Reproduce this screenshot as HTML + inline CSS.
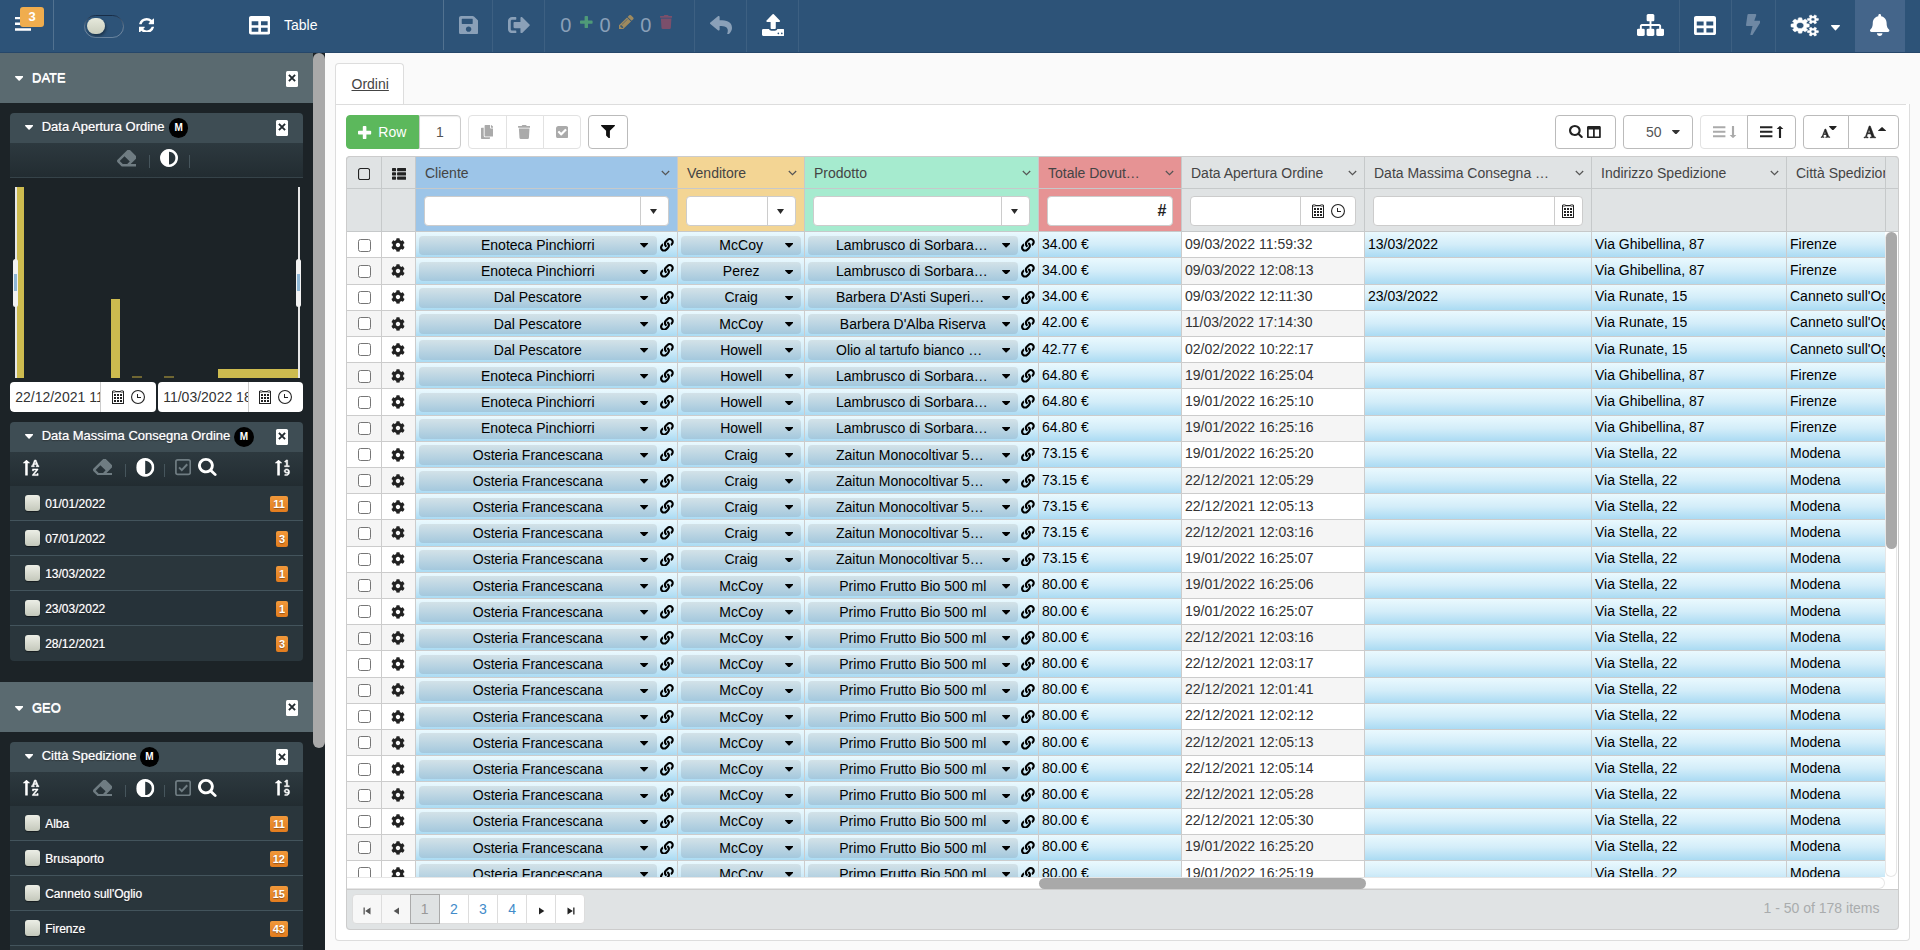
<!DOCTYPE html>
<html lang="it"><head><meta charset="utf-8"><title>Table</title>
<style>
html,body{margin:0;padding:0}
body{width:1920px;height:950px;overflow:hidden;position:relative;background:#fafafa;font-family:"Liberation Sans",sans-serif;font-size:14px;color:#333}
svg{display:block}

#top{position:absolute;left:0;top:0;width:1920px;height:52.5px;background:#2d5378;overflow:hidden;border-bottom:1px solid #26476a;box-sizing:border-box}
.tsep{position:absolute;top:0;width:1px}
.tbadge{position:absolute;left:20px;top:7px;width:24px;height:20px;border-radius:3px;background:#f0ad4e;color:#fff;font-weight:bold;font-size:13px;line-height:20px;text-align:center}
.knob{position:absolute;left:87px;top:17.800px;width:18px;height:16.300px;border-radius:9px;background:linear-gradient(#e6e9dc,#c9cdbd);box-shadow:1px 2px 3px rgba(0,0,0,.4)}
.tlabel{position:absolute;left:284px;top:15px;color:#fff;font-size:14px;line-height:20px}
.tnum{position:absolute;top:11px;font-size:20px;line-height:28px;color:#8aa0b8}
.bellbg{position:absolute;left:1855px;top:0;width:50px;height:52.5px;background:#44658a}

#side{position:absolute;left:0;top:52.5px;width:313px;height:897.5px;background:#1c2327;overflow:hidden}
#sscroll{position:absolute;left:313px;top:52.5px;width:12px;height:897.5px;background:#1c2327}
.sthumb{position:absolute;left:0;top:0;width:12px;height:695.5px;border-radius:6px;background:#a9a9a9}
.shead{position:absolute;left:0;width:313px;height:50px;background:#5a6a70}
.stitle{position:absolute;left:32px;top:15.300px;font-size:13px;line-height:20px;color:#fff;text-shadow:0 1px 0 rgba(255,255,255,.9),0 0 1px rgba(255,255,255,.5)}
.xbtn{position:absolute;background:#fff;border-radius:1.5px}
.panel{position:absolute;left:10px;width:292.7px;border-radius:4px;overflow:hidden;background:#1c2327}
.phead{position:absolute;left:0;width:100%;height:30px;background:#3e4d54}
.ptitle{position:absolute;left:31.7px;top:4px;font-size:13px;line-height:20px;color:#fff;white-space:nowrap;text-shadow:0 0 1px rgba(255,255,255,.7),0 1px 1px rgba(0,0,0,.5)}
.mbadge{position:absolute;top:5.2px;width:19.6px;height:19.6px;border-radius:10px;background:#000;color:#fff;font-size:10px;font-weight:bold;line-height:20px;text-align:center}
.ptool{position:absolute;left:0;width:100%;height:35px;background:linear-gradient(#2d393f,#222c31);border-bottom:1px solid #364349;box-sizing:border-box}
.vsep{position:absolute;top:12.500px;width:1px;height:12.500px;background:#46555c}
.bar{position:absolute;background:#cdbb4f}
.hline{position:absolute;top:73.8px;width:1.6px;height:190.8px;background:#e6e6e6}
.handle{position:absolute;top:145.5px;width:5.2px;height:48px;border-radius:3px;background:#f2f2f2}
.handle:after{content:"";position:absolute;left:1.2px;top:15px;width:2.8px;height:17.500px;background:#8fb7d6}
.dinp{position:absolute;height:30px;background:#fff;border-radius:4px;overflow:hidden}
.dtxt{position:absolute;left:5.2px;top:4.5px;width:85px;overflow:hidden;white-space:nowrap;font-size:14px;line-height:20px;color:#333}
.ddiv{position:absolute;left:90px;top:0;width:1px;height:100%;background:#ccc}
.pitem{position:absolute;left:0;width:100%;height:34.95px;background:#2a363c;border-bottom:1px solid #43545c;box-sizing:border-box}
.pitem.last{border-bottom:none}
.pitem.odd{background:#263239}
.pcb{position:absolute;left:14.6px;top:9.200px;width:15.6px;height:16px;border-radius:3px;background:linear-gradient(#eceee6,#c4c8bb);box-shadow:0 1px 1px rgba(0,0,0,.5)}
.plab{position:absolute;left:35.2px;top:8px;font-size:12px;line-height:20px;color:#fff;text-shadow:0 0 1px rgba(255,255,255,.7),0 1px 1px rgba(0,0,0,.7)}
.pcnt{position:absolute;right:14.7px;top:10.2px;min-width:6px;padding:0 3px;height:16px;border-radius:2px;background:linear-gradient(#f0983a,#e27c1e);color:#fff;font-size:11px;font-weight:bold;line-height:16px;text-align:center;text-shadow:0 1px 1px rgba(0,0,0,.35)}

#main{position:absolute;left:0;top:0;width:1920px;height:950px}
.tab{position:absolute;left:335px;top:63px;width:69px;height:42px;box-sizing:border-box;border:1px solid #ddd;border-bottom:none;border-radius:4px 4px 0 0;background:#fff}
.tab span{position:absolute;left:15.5px;top:9.800px;line-height:20px;color:#444;text-decoration:underline}
.tabline{position:absolute;left:336px;top:104px;width:1570px;height:1px;background:#ddd}
.pane{position:absolute;left:335px;top:104px;width:1575px;height:837px;box-sizing:border-box;background:#fff;border:1px solid #ddd;border-top:none;border-radius:0 0 4px 4px}
.btn{position:absolute;height:33.7px;box-sizing:border-box;border:1px solid #bbb;border-radius:4px;background:#fff}
.btn.green{background:#5cb85c;border-color:#5cb85c}
.btn.inp{border-color:#ccc;box-shadow:inset 0 1px 1px rgba(0,0,0,.075)}
.btn.dis{border-color:#e2e2e2}
.btn span{line-height:20px}
#grid{position:absolute;left:346px;top:156px;width:1553px;height:774px;box-sizing:border-box;border-radius:4px;overflow:hidden;background:#fff}
#gridb{position:absolute;left:346px;top:156px;width:1553px;height:774px;box-sizing:border-box;border-radius:4px;border:1px solid #ccc;pointer-events:none}
.hrow{position:absolute;left:0;width:100%}
.hrow{border-top:1px solid #ccc;box-sizing:border-box}
.hrow+.hrow{border-top:none}
.c{position:absolute;top:0;height:100%;box-sizing:border-box;border-left:1px solid #ccc;border-bottom:1px solid #ccc;overflow:hidden;white-space:nowrap}
.h{border-left-color:#c6c9ca;border-bottom-color:#c6c9ca}
.hg{background:#e0e3e4}.hb{background:#9dc5e8}.ho{background:#f3d594}.hm{background:#a6ebcf}.hr{background:#e69394}
.ht{position:absolute;left:9px;top:5.800px;line-height:20px;color:#444}
.finp{position:absolute;left:8px;top:7px;height:30px;box-sizing:border-box;border:1px solid #ccc;border-radius:4px;background:#fff}
.fdiv{position:absolute;top:0;width:1px;height:100%;background:#ccc}
#gbody{position:absolute;left:0;top:76px;width:1539px;height:645px;overflow:hidden}
.row{position:absolute;left:0;width:100%;height:26.2px;background:#fff}
.row.alt{background:#f5f5f5}
.c.bl{background:linear-gradient(#eaf9fe 0,#d3edf9 50%,#abdbf3 100%)}
.c.t span{position:absolute;left:3px;top:1.600px;line-height:20px;color:#000}
.c.p.t span{color:#333}
.cb{position:absolute;left:11.2px;top:6.400px;width:13px;height:13px;box-sizing:border-box;border:1px solid #767676;border-radius:2.500px;background:#fff}
.sel{position:absolute;top:3.400px;height:19.6px;border-radius:4px;background:linear-gradient(#d3e2e8,#a4c8dd);text-align:center}
.sel span{position:absolute;left:0;right:0;top:-0.500px;line-height:20px;color:#000;text-align:center}
.sel span.tr{left:28px;text-align:left}
.vtrack{position:absolute;left:1539px;top:76px;width:12px;height:645px;background:#fff;border-radius:6px;box-shadow:inset 0 0 0 1px #e6e6e6}
.vthumb{position:absolute;left:0.5px;top:0.2px;width:11.4px;height:317px;border-radius:6px;background:#a9a9a9}
.htrack{position:absolute;left:0;top:721px;width:1539px;height:12px;background:#fff;border-radius:0 6px 6px 0;box-shadow:inset 0 0 0 1px #e6e6e6}
.hthumb{position:absolute;left:693px;top:0.700px;width:327px;height:11.6px;border-radius:6px;background:#a9a9a9}
#pager{position:absolute;left:0;top:733px;width:100%;height:41px;background:#e0e3e4;border-top:1px solid #ccc;box-sizing:border-box}
.pb{position:absolute;top:4px;width:30.1px;height:29.6px;box-sizing:border-box;border:1px solid #ddd;background:#fff;text-align:center}
.pb.f{border-radius:4px 0 0 4px}.pb.l{border-radius:0 4px 4px 0}
.pb.d{background:#f7f7f7}
.pb.cur{background:#dfe2e3;border-color:#aaa;z-index:2}
.pb span{line-height:29.8px;color:#428bca}
.pb.cur span{color:#999}
.pinfo{position:absolute;right:19.5px;top:8px;line-height:20px;color:#a9acad}
</style></head>
<body>
<div id="main">
<div class="tab"><span>Ordini</span></div>
<div class="pane">
</div>
<div class="tabline"></div>
<div class="btn green" style="left:345.9px;top:115.2px;width:73.4px;border-radius:4px 0 0 4px"><svg width="13.20" height="13.20" viewBox="0 0 176.0 176.0" preserveAspectRatio="none" style="position:absolute;left:11.60px;top:9.80px;" ><path fill="#fff" d="M176 76V100Q176 105 172.5 108.5Q169 112 164 112H112V164Q112 169 108.5 172.5Q105 176 100 176H76Q71 176 67.5 172.5Q64 169 64 164V112H12Q7 112 3.5 108.5Q0 105 0 100V76Q0 71 3.5 67.5Q7 64 12 64H64V12Q64 7 67.5 3.5Q71 0 76 0H100Q105 0 108.5 3.5Q112 7 112 12V64H164Q169 64 172.5 67.5Q176 71 176 76Z"/></svg><span style="position:absolute;left:31.4px;top:5.600px;color:#fff">Row</span></div>
<div class="btn inp" style="left:419.2px;top:115.2px;width:41.6px;border-radius:0 4px 4px 0"><span style="position:absolute;left:0;right:0;top:6px;text-align:center;color:#555">1</span></div>
<div class="btn dis" style="left:468px;top:115.2px;width:39px;border-radius:4px 0 0 4px"><svg width="12.60" height="14.00" viewBox="0 0 448 512" preserveAspectRatio="none" style="position:absolute;left:11.80px;top:8.40px;"><path fill="#aaa" d="M320 448v40c0 13.300-10.700 24-24 24H24c-13.300 0-24-10.700-24-24V120c0-13.300 10.700-24 24-24h72v296c0 30.900 25.100 56 56 56h168zm0-344V0H152c-13.300 0-24 10.700-24 24v368c0 13.300 10.700 24 24 24h272c13.300 0 24-10.700 24-24V128H344c-13.200 0-24-10.800-24-24zm121-31L375 7A24 24 0 0 0 358.100 0H352v96h96v-6.100a24 24 0 0 0-7-16.900z"/></svg></div>
<div class="btn dis" style="left:506.2px;top:115.2px;width:38px;border-radius:0"><svg width="12.40" height="14.00" viewBox="0 0 448 512" preserveAspectRatio="none" style="position:absolute;left:10.90px;top:8.40px;"><path fill="#aaa" d="M432 32H312l-9.400-18.700A24 24 0 0 0 281.100 0H166.800a23.700 23.700 0 0 0-21.400 13.300L136 32H16A16 16 0 0 0 0 48v32a16 16 0 0 0 16 16h416a16 16 0 0 0 16-16V48a16 16 0 0 0-16-16zM53.200 467a48 48 0 0 0 47.900 45h245.800a48 48 0 0 0 47.900-45L416 128H32z"/></svg></div>
<div class="btn dis" style="left:543.4px;top:115.2px;width:37.2px;border-radius:0 4px 4px 0"><svg width="12.40" height="12.40" viewBox="0 0 192.0 192.0" preserveAspectRatio="none" style="position:absolute;left:11.60px;top:9.50px;" ><path fill="#aaa" d="M85.6 146.4 162.4 69.6Q164.8 67.2 164.8 64Q164.8 60.8 162.4 58.4L149.6 45.6Q147.2 43.2 144 43.2Q140.8 43.2 138.4 45.6L80 104L53.6 77.6Q51.2 75.2 48 75.2Q44.8 75.2 42.4 77.6L29.6 90.4Q27.2 92.8 27.2 96Q27.2 99.2 29.6 101.6L74.4 146.4Q76.8 148.8 80 148.8Q83.2 148.8 85.6 146.4ZM192 36V156Q192 170.9 181.4 181.4Q170.9 192 156 192H36Q21.1 192 10.6 181.4Q0 170.9 0 156V36Q0 21.1 10.6 10.6Q21.1 0 36 0H156Q170.9 0 181.4 10.6Q192 21.1 192 36Z"/></svg></div>
<div class="btn" style="left:588.3px;top:115.2px;width:39.3px"><svg width="14.00" height="13.40" viewBox="0 0 176.3 176.0" preserveAspectRatio="none" style="position:absolute;left:12.00px;top:8.90px;" ><path fill="#111" d="M175.5 4.9Q177.6 10 173.8 13.6L112.1 75.2V168Q112.1 173.2 107.3 175.4Q105.6 176 104.1 176Q100.8 176 98.5 173.6L66.5 141.6Q64.1 139.2 64.1 136V75.2L2.5 13.6Q-1.4 10 0.8 4.9Q2.9 0 8.1 0H168.1Q173.4 0 175.5 4.9Z"/></svg></div>
<div class="btn" style="left:1555px;top:115.2px;width:60.7px"><svg width="13.80" height="13.00" viewBox="0 0 208.0 208.0" preserveAspectRatio="none" style="position:absolute;left:13.20px;top:9.20px;" ><path fill="#222" d="M127.6 127.6Q144 111.1 144 88Q144 64.9 127.6 48.4Q111.1 32 88 32Q64.9 32 48.4 48.4Q32 64.9 32 88Q32 111.1 48.4 127.6Q64.9 144 88 144Q111.1 144 127.6 127.6ZM208 192Q208 198.5 203.2 203.2Q198.5 208 192 208Q185.2 208 180.8 203.2L137.9 160.5Q115.5 176 88 176Q70.1 176 53.8 169.1Q37.5 162.1 25.7 150.3Q13.9 138.5 6.9 122.2Q0 105.9 0 88Q0 70.1 6.9 53.8Q13.9 37.5 25.7 25.7Q37.5 13.9 53.8 6.9Q70.1 0 88 0Q105.9 0 122.2 6.9Q138.5 13.9 150.3 25.7Q162.1 37.5 169.1 53.8Q176 70.1 176 88Q176 115.5 160.5 137.9L203.4 180.8Q208 185.4 208 192Z"/></svg><svg width="13.80" height="12.40" viewBox="0 0 512 448" preserveAspectRatio="none" style="position:absolute;left:31.00px;top:9.40px;"><path fill="#222" d="M464 0H48C21.500 0 0 21.500 0 48v352c0 26.500 21.500 48 48 48h416c26.500 0 48-21.500 48-48V48c0-26.500-21.500-48-48-48zM224 384H64V128h160v256zm224 0H288V128h160v256z"/></svg></div>
<div class="btn" style="left:1623.2px;top:115.2px;width:69.6px"><span style="position:absolute;left:21.7px;top:6px;color:#555">50</span><svg width="7.80" height="4.40" viewBox="0 0 128.0 72.0" preserveAspectRatio="none" style="position:absolute;left:48.00px;top:13.60px;" ><path fill="#333" d="M125.6 13.6 69.6 69.6Q67.2 72 64 72Q60.8 72 58.4 69.6L2.4 13.6Q0 11.2 0 8Q0 4.8 2.4 2.4Q4.8 0 8 0H120Q123.2 0 125.6 2.4Q128 4.8 128 8Q128 11.2 125.6 13.6Z"/></svg></div>
<div class="btn dis" style="left:1700.2px;top:115.2px;width:48px;border-radius:4px 0 0 4px"><svg width="24" height="13" viewBox="0 0 24 13" style="position:absolute;left:11.5px;top:10.2px;overflow:visible"><path d="M0 1.300H12.400M0 5.800H12.400M0 10.300H12.400" stroke="#aaa" stroke-width="1.900" fill="none"/><g transform="translate(16.800 0) scale(0.0667 0.0556)"><path fill="#aaa" d="M95 166.8 51.3 214.8Q50 216 48.4 216Q46.6 216 45.4 214.8L1 166.8Q-0.6 164.8 0.4 162.4Q1.5 160 4 160H32V4Q32 2.2 33.1 1.1Q34.3 0 36 0H60Q61.8 0 62.9 1.1Q64 2.2 64 4V160H92Q94.6 160 95.6 162.4Q96.6 164.8 95 166.8Z"/></g></svg></div>
<div class="btn" style="left:1747.2px;top:115.2px;width:48.6px;border-radius:0 4px 4px 0"><svg width="24" height="13" viewBox="0 0 24 13" style="position:absolute;left:11.7px;top:10.2px;overflow:visible"><path d="M0 1.300H12.400M0 5.800H12.400M0 10.300H12.400" stroke="#222" stroke-width="1.900" fill="none"/><g transform="translate(16.800 0) scale(0.0667 0.0556)"><path fill="#222" d="M95.6 53.6Q94.5 56 92 56H64V212Q64 213.8 62.9 214.9Q61.8 216 60 216H36Q34.3 216 33.1 214.9Q32 213.8 32 212V56H4Q1.4 56 0.4 53.6Q-0.6 51.2 1 49.2L44.8 1.2Q46 0 47.6 0Q49.4 0 50.6 1.2L95 49.2Q96.6 51.2 95.6 53.6Z"/></g></svg></div>
<div class="btn" style="left:1803.2px;top:115.2px;width:46.2px;border-radius:4px 0 0 4px"><svg width="8.80" height="8.40" viewBox="0 0 208.0 192.0" preserveAspectRatio="none" style="position:absolute;left:17.00px;top:13.00px;;overflow:visible" ><path fill="#222" stroke="#222" stroke-width="14" stroke-linejoin="round" d="M90.6 53.9 69.4 110.1Q73.5 110.1 86.4 110.4Q99.4 110.6 106.5 110.6Q108.9 110.6 113.6 110.4Q102.8 78.8 90.6 53.9ZM0 192 0.2 182.1Q3.1 181.2 7.2 180.6Q11.4 179.9 14.4 179.2Q17.4 178.6 20.6 177.4Q23.8 176.2 26.1 173.8Q28.5 171.4 30 167.5L59.6 90.5L94.6 0H104H110.6Q111.6 1.8 112 2.6L137.6 62.6Q141.8 72.4 150.9 94.8Q160 117.2 165.1 129.1Q167 133.4 172.4 147.2Q177.8 161 181.4 168.2Q183.9 173.9 185.8 175.4Q188.1 177.2 196.8 179.1Q205.4 180.9 207.2 181.6Q208 186.4 208 188.8Q208 189.4 207.9 190.4Q207.9 191.5 207.9 192Q200 192 184.1 191Q168.2 190 160.2 190Q150.8 190 133.4 190.9Q116 191.8 111.1 191.9Q111.1 186.5 111.6 182.1L128 178.6Q128.1 178.6 129.6 178.3Q131 178 131.5 177.9Q132 177.8 133.3 177.3Q134.6 176.9 135.2 176.5Q135.8 176.1 136.6 175.5Q137.4 174.9 137.7 174.1Q138 173.4 138 172.4Q138 170.4 134.1 160.3Q130.2 150.2 125.1 138.1Q120 126 119.9 125.6L63.6 125.4Q60.4 132.6 54.1 149.8Q47.8 167 47.8 170.1Q47.8 172.9 49.5 174.8Q51.2 176.8 54.9 177.9Q58.6 179 61 179.6Q63.4 180.1 68.1 180.6Q72.9 181.1 73.2 181.1Q73.4 183.5 73.4 188.4Q73.4 189.5 73.1 191.8Q65.9 191.8 51.3 190.5Q36.8 189.2 29.5 189.2Q28.5 189.2 26.2 189.8Q23.9 190.2 23.5 190.2Q13.5 192 0 192Z"/></svg><svg width="7.70" height="4.40" viewBox="0 0 128.0 72.0" preserveAspectRatio="none" style="position:absolute;left:25.00px;top:9.40px;" ><path fill="#222" d="M125.6 13.6 69.6 69.6Q67.2 72 64 72Q60.8 72 58.4 69.6L2.4 13.6Q0 11.2 0 8Q0 4.8 2.4 2.4Q4.8 0 8 0H120Q123.2 0 125.6 2.4Q128 4.8 128 8Q128 11.2 125.6 13.6Z"/></svg></div>
<div class="btn" style="left:1848.4px;top:115.2px;width:50.2px;border-radius:0 4px 4px 0"><svg width="11.60" height="11.80" viewBox="0 0 208.0 192.0" preserveAspectRatio="none" style="position:absolute;left:15.10px;top:9.70px;;overflow:visible" ><path fill="#222" stroke="#222" stroke-width="12" stroke-linejoin="round" d="M90.6 53.9 69.4 110.1Q73.5 110.1 86.4 110.4Q99.4 110.6 106.5 110.6Q108.9 110.6 113.6 110.4Q102.8 78.8 90.6 53.9ZM0 192 0.2 182.1Q3.1 181.2 7.2 180.6Q11.4 179.9 14.4 179.2Q17.4 178.6 20.6 177.4Q23.8 176.2 26.1 173.8Q28.5 171.4 30 167.5L59.6 90.5L94.6 0H104H110.6Q111.6 1.8 112 2.6L137.6 62.6Q141.8 72.4 150.9 94.8Q160 117.2 165.1 129.1Q167 133.4 172.4 147.2Q177.8 161 181.4 168.2Q183.9 173.9 185.8 175.4Q188.1 177.2 196.8 179.1Q205.4 180.9 207.2 181.6Q208 186.4 208 188.8Q208 189.4 207.9 190.4Q207.9 191.5 207.9 192Q200 192 184.1 191Q168.2 190 160.2 190Q150.8 190 133.4 190.9Q116 191.8 111.1 191.9Q111.1 186.5 111.6 182.1L128 178.6Q128.1 178.6 129.6 178.3Q131 178 131.5 177.9Q132 177.8 133.3 177.3Q134.6 176.9 135.2 176.5Q135.8 176.1 136.6 175.5Q137.4 174.9 137.7 174.1Q138 173.4 138 172.4Q138 170.4 134.1 160.3Q130.2 150.2 125.1 138.1Q120 126 119.9 125.6L63.6 125.4Q60.4 132.6 54.1 149.8Q47.8 167 47.8 170.1Q47.8 172.9 49.5 174.8Q51.2 176.8 54.9 177.9Q58.6 179 61 179.6Q63.4 180.1 68.1 180.6Q72.9 181.1 73.2 181.1Q73.4 183.5 73.4 188.4Q73.4 189.5 73.1 191.8Q65.9 191.8 51.3 190.5Q36.8 189.2 29.5 189.2Q28.5 189.2 26.2 189.8Q23.9 190.2 23.5 190.2Q13.5 192 0 192Z"/></svg><svg width="8.10" height="4.20" viewBox="0 0 128.0 72.0" preserveAspectRatio="none" style="position:absolute;left:28.50px;top:10.80px;" ><path fill="#222" d="M120 72H8Q4.8 72 2.4 69.6Q0 67.2 0 64Q0 60.8 2.4 58.4L58.4 2.4Q60.8 0 64 0Q67.2 0 69.6 2.4L125.6 58.4Q128 60.8 128 64Q128 67.2 125.6 69.6Q123.2 72 120 72Z"/></svg></div>
<div id="grid">
<div class="hrow" style="top:0;height:33px">
<div class="c h hg" style="left:0.0px;width:35.0px"><svg width="12.20" height="12.20" viewBox="0 0 176.0 176.0" preserveAspectRatio="none" style="position:absolute;left:11.00px;top:10.60px;" ><path fill="#222" d="M140 16H36Q27.8 16 21.9 21.9Q16 27.8 16 36V140Q16 148.2 21.9 154.1Q27.8 160 36 160H140Q148.2 160 154.1 154.1Q160 148.2 160 140V36Q160 27.8 154.1 21.9Q148.2 16 140 16ZM176 36V140Q176 154.9 165.4 165.4Q154.9 176 140 176H36Q21.1 176 10.6 165.4Q0 154.9 0 140V36Q0 21.1 10.6 10.6Q21.1 0 36 0H140Q154.9 0 165.4 10.6Q176 21.1 176 36Z"/></svg></div>
<div class="c h hg" style="left:35.0px;width:34.0px"><svg width="14.20" height="11.80" viewBox="0 0 224.0 176.0" preserveAspectRatio="none" style="position:absolute;left:9.60px;top:10.80px;" ><path fill="#222" d="M64 140V164Q64 169 60.5 172.5Q57 176 52 176H12Q7 176 3.5 172.5Q0 169 0 164V140Q0 135 3.5 131.5Q7 128 12 128H52Q57 128 60.5 131.5Q64 135 64 140ZM64 76V100Q64 105 60.5 108.5Q57 112 52 112H12Q7 112 3.5 108.5Q0 105 0 100V76Q0 71 3.5 67.5Q7 64 12 64H52Q57 64 60.5 67.5Q64 71 64 76ZM224 140V164Q224 169 220.5 172.5Q217 176 212 176H92Q87 176 83.5 172.5Q80 169 80 164V140Q80 135 83.5 131.5Q87 128 92 128H212Q217 128 220.5 131.5Q224 135 224 140ZM64 12V36Q64 41 60.5 44.5Q57 48 52 48H12Q7 48 3.5 44.5Q0 41 0 36V12Q0 7 3.5 3.5Q7 0 12 0H52Q57 0 60.5 3.5Q64 7 64 12ZM224 76V100Q224 105 220.5 108.5Q217 112 212 112H92Q87 112 83.5 108.5Q80 105 80 100V76Q80 71 83.5 67.5Q87 64 92 64H212Q217 64 220.5 67.5Q224 71 224 76ZM224 12V36Q224 41 220.5 44.5Q217 48 212 48H92Q87 48 83.5 44.5Q80 41 80 36V12Q80 7 83.5 3.5Q87 0 92 0H212Q217 0 220.5 3.5Q224 7 224 12Z"/></svg></div>
<div class="c h hb" style="left:69.0px;width:262.0px"><span class="ht">Cliente</span><svg width="9" height="6" viewBox="0 0 9 6" style="position:absolute;left:245.3px;top:13.1px"><path d="M0.800 1L4.500 4.700L8.200 1" fill="none" stroke="#555" stroke-width="1.200"/></svg></div>
<div class="c h ho" style="left:331.0px;width:127.0px"><span class="ht">Venditore</span><svg width="9" height="6" viewBox="0 0 9 6" style="position:absolute;left:110.3px;top:13.1px"><path d="M0.800 1L4.500 4.700L8.200 1" fill="none" stroke="#555" stroke-width="1.200"/></svg></div>
<div class="c h hm" style="left:458.0px;width:234.0px"><span class="ht">Prodotto</span><svg width="9" height="6" viewBox="0 0 9 6" style="position:absolute;left:217.3px;top:13.1px"><path d="M0.800 1L4.500 4.700L8.200 1" fill="none" stroke="#555" stroke-width="1.200"/></svg></div>
<div class="c h hr" style="left:692.0px;width:143.0px"><span class="ht">Totale Dovut…</span><svg width="9" height="6" viewBox="0 0 9 6" style="position:absolute;left:126.3px;top:13.1px"><path d="M0.800 1L4.500 4.700L8.200 1" fill="none" stroke="#555" stroke-width="1.200"/></svg></div>
<div class="c h hg" style="left:835.0px;width:183.0px"><span class="ht">Data Apertura Ordine</span><svg width="9" height="6" viewBox="0 0 9 6" style="position:absolute;left:166.3px;top:13.1px"><path d="M0.800 1L4.500 4.700L8.200 1" fill="none" stroke="#555" stroke-width="1.200"/></svg></div>
<div class="c h hg" style="left:1018.0px;width:227.0px"><span class="ht">Data Massima Consegna …</span><svg width="9" height="6" viewBox="0 0 9 6" style="position:absolute;left:210.3px;top:13.1px"><path d="M0.800 1L4.500 4.700L8.200 1" fill="none" stroke="#555" stroke-width="1.200"/></svg></div>
<div class="c h hg" style="left:1245.0px;width:195.0px"><span class="ht">Indirizzo Spedizione</span><svg width="9" height="6" viewBox="0 0 9 6" style="position:absolute;left:178.3px;top:13.1px"><path d="M0.800 1L4.500 4.700L8.200 1" fill="none" stroke="#555" stroke-width="1.200"/></svg></div>
<div class="c h hg" style="left:1440.0px;width:99.0px"><span class="ht">Città Spedizione</span></div>
<div class="c h hg" style="left:1539.0px;width:14px"></div>
</div>
<div class="hrow" style="top:33px;height:43px">
<div class="c h hg" style="left:0.0px;width:35.0px"></div>
<div class="c h hg" style="left:35.0px;width:34.0px"></div>
<div class="c h hb" style="left:69.0px;width:262.0px"><div class="finp" style="width:245px"><div class="fdiv" style="right:27px"></div><svg width="7.0" height="5.0" viewBox="0 0 10 7" preserveAspectRatio="none" style="position:absolute;right:11px;top:12px"><path d="M0 0H10L5 7Z" fill="#2a2a2a"/></svg></div></div>
<div class="c h ho" style="left:331.0px;width:127.0px"><div class="finp" style="width:110px"><div class="fdiv" style="right:27px"></div><svg width="7.0" height="5.0" viewBox="0 0 10 7" preserveAspectRatio="none" style="position:absolute;right:11px;top:12px"><path d="M0 0H10L5 7Z" fill="#2a2a2a"/></svg></div></div>
<div class="c h hm" style="left:458.0px;width:234.0px"><div class="finp" style="width:217px"><div class="fdiv" style="right:27px"></div><svg width="7.0" height="5.0" viewBox="0 0 10 7" preserveAspectRatio="none" style="position:absolute;right:11px;top:12px"><path d="M0 0H10L5 7Z" fill="#2a2a2a"/></svg></div></div>
<div class="c h hr" style="left:692.0px;width:143.0px"><div class="finp" style="width:126px"><span style="position:absolute;right:5.500px;top:3.500px;font-size:16px;font-weight:bold;color:#222;line-height:20px">#</span></div></div>
<div class="c h hg" style="left:835.0px;width:183.0px"><div class="finp" style="width:166px"><div class="fdiv" style="right:54px"></div><svg width="12" height="14" viewBox="0 0 12 14" style="position:absolute;right:31px;top:7px"><path fill="#222" fill-rule="evenodd" d="M0 1h12v13H0zM1 2.300v10.700h10V2.300zM2 4h2v2h-2zM5 4h2v2h-2zM8 4h2v2h-2zM2 7h2v2h-2zM5 7h2v2h-2zM8 7h2v2h-2zM2 10h2v2h-2zM5 10h2v2h-2zM8 10h2v2h-2z"/><rect x="0.900" y="0.200" width="2.400" height="1.900" rx="0.900" fill="#fff" stroke="#222" stroke-width="0.700"/><rect x="8.700" y="0.200" width="2.400" height="1.900" rx="0.900" fill="#fff" stroke="#222" stroke-width="0.700"/></svg><svg width="14" height="14" viewBox="0 0 14 14" style="position:absolute;right:10px;top:7px"><circle cx="7" cy="7" r="6.450" fill="none" stroke="#222" stroke-width="1.100"/><path d="M6 4h1v3h3v1H6z" fill="#222"/></svg></div></div>
<div class="c h hg" style="left:1018.0px;width:227.0px"><div class="finp" style="width:210px"><div class="fdiv" style="right:27px"></div><svg width="12" height="14" viewBox="0 0 12 14" style="position:absolute;right:8px;top:7px"><path fill="#222" fill-rule="evenodd" d="M0 1h12v13H0zM1 2.300v10.700h10V2.300zM2 4h2v2h-2zM5 4h2v2h-2zM8 4h2v2h-2zM2 7h2v2h-2zM5 7h2v2h-2zM8 7h2v2h-2zM2 10h2v2h-2zM5 10h2v2h-2zM8 10h2v2h-2z"/><rect x="0.900" y="0.200" width="2.400" height="1.900" rx="0.900" fill="#fff" stroke="#222" stroke-width="0.700"/><rect x="8.700" y="0.200" width="2.400" height="1.900" rx="0.900" fill="#fff" stroke="#222" stroke-width="0.700"/></svg></div></div>
<div class="c h hg" style="left:1245.0px;width:195.0px"></div>
<div class="c h hg" style="left:1440.0px;width:99.0px"></div>
<div class="c h hg" style="left:1539.0px;width:14px"></div>
</div>
<div id="gbody">
<div class="row" style="top:0.20px">
<div class="c p" style="left:0.0px;width:35.0px"><div class="cb"></div></div>
<div class="c p" style="left:35.0px;width:34.0px"><svg width="14.00" height="14.00" viewBox="0 0 512 512" preserveAspectRatio="none" style="position:absolute;left:9.20px;top:5.90px;"><path fill="#222" d="M487.400 315.700l-42.600-24.600c4.300-23.200 4.300-47 0-70.200l42.600-24.600c4.900-2.800 7.100-8.600 5.500-14-11.100-35.600-30-67.800-54.700-94.600-3.800-4.100-10-5.100-14.800-2.300L380.800 110c-17.900-15.400-38.500-27.300-60.800-35.100V25.800c0-5.600-3.900-10.500-9.400-11.700-36.700-8.200-74.300-7.800-109.200 0-5.500 1.200-9.400 6.100-9.400 11.700V75c-22.200 7.900-42.800 19.800-60.800 35.100L88.700 85.500c-4.900-2.800-11-1.900-14.800 2.300-24.700 26.700-43.600 58.900-54.700 94.600-1.700 5.400.6 11.200 5.500 14L67.300 221c-4.300 23.200-4.300 47 0 70.200l-42.600 24.600c-4.900 2.800-7.100 8.600-5.500 14 11.100 35.600 30 67.800 54.700 94.600 3.800 4.100 10 5.100 14.800 2.300l42.600-24.600c17.900 15.400 38.500 27.300 60.800 35.100v49.200c0 5.600 3.900 10.500 9.400 11.700 36.700 8.200 74.300 7.800 109.200 0 5.500-1.200 9.400-6.100 9.400-11.700v-49.200c22.200-7.900 42.800-19.800 60.800-35.100l42.600 24.600c4.900 2.800 11 1.900 14.800-2.300 24.700-26.700 43.600-58.900 54.700-94.600 1.500-5.500-.7-11.300-5.600-14.100zM256 336c-44.100 0-80-35.900-80-80s35.900-80 80-80 80 35.900 80 80-35.900 80-80 80z"/></svg></div>
<div class="c bl" style="left:69.0px;width:262.0px"><div class="sel" style="left:3.0px;width:237.6px"><span>Enoteca Pinchiorri</span><svg width="8.20" height="4.60" viewBox="0 0 128.0 72.0" preserveAspectRatio="none" style="position:absolute;left:221.40px;top:7.80px;" ><path fill="#000" d="M125.6 13.6 69.6 69.6Q67.2 72 64 72Q60.8 72 58.4 69.6L2.4 13.6Q0 11.2 0 8Q0 4.8 2.4 2.4Q4.8 0 8 0H120Q123.2 0 125.6 2.4Q128 4.8 128 8Q128 11.2 125.6 13.6Z"/></svg></div><svg width="13.80" height="13.60" viewBox="0 0 512 512" preserveAspectRatio="none" style="position:absolute;left:244.00px;top:6.00px;"><path fill="#000" d="M326.600 185.400c59.700 59.800 58.900 155.700.4 214.600-.1.100-.2.300-.4.400l-67.200 67.200c-59.300 59.300-155.700 59.300-215 0-59.300-59.300-59.300-155.700 0-215l37.100-37.100c9.800-9.800 26.800-3.300 27.300 10.600.6 17.700 3.800 35.500 9.700 52.700 2 5.800.6 12.300-3.800 16.600l-13.100 13.100c-28 28-28.900 73.700-1.200 102 28 28.600 74.100 28.700 102.300.5l67.200-67.200c28.200-28.200 28.100-73.800 0-101.800-3.700-3.700-7.400-6.600-10.300-8.600a16 16 0 0 1-6.900-12.600c-.4-10.600 3.300-21.500 11.700-29.800l21.100-21.100c5.500-5.500 14.200-6.200 20.600-1.700a152.500 152.500 0 0 1 20.500 17.200zM467.500 44.400c-59.300-59.300-155.700-59.300-215 0l-67.200 67.200c-.1.100-.3.300-.4.400-58.600 58.900-59.400 154.800.4 214.600a152.500 152.500 0 0 0 20.500 17.200c6.400 4.500 15.100 3.800 20.600-1.700l21.100-21.100c8.400-8.400 12.100-19.200 11.700-29.800a16 16 0 0 0-6.900-12.600c-2.900-2-6.600-4.900-10.300-8.600-28.100-28.100-28.200-73.600 0-101.800l67.200-67.200c28.200-28.200 74.300-28.100 102.300.5 27.800 28.300 26.900 73.900-1.200 102l-13.100 13.100c-4.400 4.400-5.800 10.800-3.800 16.600 5.900 17.200 9 35 9.700 52.700.5 13.900 17.500 20.400 27.300 10.600l37.100-37.100c59.300-59.300 59.300-155.700 0-215z"/></svg></div>
<div class="c bl" style="left:331.0px;width:127.0px"><div class="sel" style="left:3.0px;width:120.3px"><span>McCoy</span><svg width="8.20" height="4.60" viewBox="0 0 128.0 72.0" preserveAspectRatio="none" style="position:absolute;left:103.60px;top:7.80px;" ><path fill="#000" d="M125.6 13.6 69.6 69.6Q67.2 72 64 72Q60.8 72 58.4 69.6L2.4 13.6Q0 11.2 0 8Q0 4.8 2.4 2.4Q4.8 0 8 0H120Q123.2 0 125.6 2.4Q128 4.8 128 8Q128 11.2 125.6 13.6Z"/></svg></div></div>
<div class="c bl" style="left:458.0px;width:234.0px"><div class="sel" style="left:3.0px;width:209.6px"><span class="tr">Lambrusco di Sorbara…</span><svg width="8.20" height="4.60" viewBox="0 0 128.0 72.0" preserveAspectRatio="none" style="position:absolute;left:193.80px;top:7.80px;" ><path fill="#000" d="M125.6 13.6 69.6 69.6Q67.2 72 64 72Q60.8 72 58.4 69.6L2.4 13.6Q0 11.2 0 8Q0 4.8 2.4 2.4Q4.8 0 8 0H120Q123.2 0 125.6 2.4Q128 4.8 128 8Q128 11.2 125.6 13.6Z"/></svg></div><svg width="13.80" height="13.60" viewBox="0 0 512 512" preserveAspectRatio="none" style="position:absolute;left:216.20px;top:6.00px;"><path fill="#000" d="M326.600 185.400c59.700 59.800 58.900 155.700.4 214.600-.1.100-.2.300-.4.400l-67.200 67.200c-59.300 59.300-155.700 59.300-215 0-59.300-59.300-59.300-155.700 0-215l37.100-37.100c9.800-9.800 26.800-3.300 27.300 10.600.6 17.700 3.800 35.500 9.700 52.700 2 5.800.6 12.300-3.800 16.600l-13.100 13.100c-28 28-28.900 73.700-1.200 102 28 28.600 74.100 28.700 102.300.5l67.200-67.200c28.200-28.200 28.100-73.800 0-101.800-3.700-3.700-7.400-6.600-10.300-8.600a16 16 0 0 1-6.900-12.600c-.4-10.600 3.300-21.500 11.700-29.800l21.100-21.100c5.500-5.500 14.200-6.200 20.600-1.700a152.500 152.500 0 0 1 20.500 17.200zM467.500 44.400c-59.300-59.300-155.700-59.300-215 0l-67.200 67.200c-.1.100-.3.300-.4.400-58.600 58.900-59.400 154.800.4 214.600a152.500 152.500 0 0 0 20.500 17.200c6.400 4.500 15.100 3.800 20.600-1.700l21.100-21.100c8.400-8.400 12.100-19.200 11.700-29.800a16 16 0 0 0-6.900-12.600c-2.900-2-6.600-4.900-10.300-8.600-28.100-28.100-28.200-73.600 0-101.800l67.200-67.200c28.200-28.200 74.300-28.100 102.300.5 27.800 28.300 26.900 73.900-1.200 102l-13.100 13.100c-4.400 4.400-5.800 10.800-3.800 16.600 5.900 17.200 9 35 9.700 52.700.5 13.900 17.500 20.400 27.300 10.600l37.100-37.100c59.300-59.300 59.300-155.700 0-215z"/></svg></div>
<div class="c bl t" style="left:692.0px;width:143.0px"><span>34.00 €</span></div>
<div class="c p t" style="left:835.0px;width:183.0px"><span>09/03/2022 11:59:32</span></div>
<div class="c bl t" style="left:1018.0px;width:227.0px"><span>13/03/2022</span></div>
<div class="c bl t" style="left:1245.0px;width:195.0px"><span>Via Ghibellina, 87</span></div>
<div class="c bl t" style="left:1440.0px;width:99.0px"><span>Firenze</span></div>
</div>
<div class="row alt" style="top:26.40px">
<div class="c p" style="left:0.0px;width:35.0px"><div class="cb"></div></div>
<div class="c p" style="left:35.0px;width:34.0px"><svg width="14.00" height="14.00" viewBox="0 0 512 512" preserveAspectRatio="none" style="position:absolute;left:9.20px;top:5.90px;"><path fill="#222" d="M487.400 315.700l-42.600-24.600c4.300-23.200 4.300-47 0-70.200l42.600-24.600c4.900-2.800 7.100-8.600 5.500-14-11.100-35.600-30-67.800-54.700-94.600-3.800-4.100-10-5.100-14.800-2.300L380.800 110c-17.900-15.400-38.500-27.300-60.800-35.100V25.800c0-5.600-3.900-10.500-9.400-11.700-36.700-8.200-74.300-7.800-109.200 0-5.500 1.200-9.400 6.100-9.400 11.700V75c-22.200 7.900-42.800 19.800-60.800 35.100L88.700 85.500c-4.900-2.800-11-1.900-14.800 2.300-24.700 26.700-43.600 58.900-54.700 94.600-1.700 5.400.6 11.200 5.500 14L67.300 221c-4.300 23.200-4.300 47 0 70.200l-42.600 24.600c-4.900 2.800-7.100 8.600-5.500 14 11.100 35.600 30 67.800 54.700 94.600 3.800 4.100 10 5.100 14.800 2.300l42.600-24.600c17.900 15.400 38.500 27.300 60.800 35.100v49.200c0 5.600 3.900 10.500 9.400 11.700 36.700 8.200 74.300 7.800 109.200 0 5.500-1.200 9.400-6.100 9.400-11.700v-49.200c22.200-7.900 42.800-19.800 60.800-35.100l42.600 24.600c4.900 2.800 11 1.900 14.800-2.300 24.700-26.700 43.600-58.900 54.700-94.600 1.500-5.500-.7-11.300-5.600-14.100zM256 336c-44.100 0-80-35.900-80-80s35.900-80 80-80 80 35.900 80 80-35.900 80-80 80z"/></svg></div>
<div class="c bl" style="left:69.0px;width:262.0px"><div class="sel" style="left:3.0px;width:237.6px"><span>Enoteca Pinchiorri</span><svg width="8.20" height="4.60" viewBox="0 0 128.0 72.0" preserveAspectRatio="none" style="position:absolute;left:221.40px;top:7.80px;" ><path fill="#000" d="M125.6 13.6 69.6 69.6Q67.2 72 64 72Q60.8 72 58.4 69.6L2.4 13.6Q0 11.2 0 8Q0 4.8 2.4 2.4Q4.8 0 8 0H120Q123.2 0 125.6 2.4Q128 4.8 128 8Q128 11.2 125.6 13.6Z"/></svg></div><svg width="13.80" height="13.60" viewBox="0 0 512 512" preserveAspectRatio="none" style="position:absolute;left:244.00px;top:6.00px;"><path fill="#000" d="M326.600 185.400c59.700 59.800 58.900 155.700.4 214.600-.1.100-.2.300-.4.400l-67.200 67.200c-59.300 59.300-155.700 59.300-215 0-59.300-59.300-59.300-155.700 0-215l37.100-37.100c9.800-9.800 26.800-3.300 27.300 10.600.6 17.700 3.800 35.500 9.700 52.700 2 5.800.6 12.300-3.800 16.600l-13.100 13.100c-28 28-28.900 73.700-1.200 102 28 28.600 74.100 28.700 102.300.5l67.200-67.200c28.200-28.200 28.100-73.800 0-101.800-3.700-3.700-7.400-6.600-10.300-8.600a16 16 0 0 1-6.900-12.600c-.4-10.600 3.300-21.500 11.700-29.800l21.100-21.100c5.500-5.500 14.200-6.200 20.600-1.700a152.500 152.500 0 0 1 20.500 17.200zM467.500 44.400c-59.300-59.300-155.700-59.300-215 0l-67.200 67.200c-.1.100-.3.300-.4.400-58.600 58.900-59.400 154.800.4 214.600a152.500 152.500 0 0 0 20.500 17.200c6.400 4.500 15.100 3.800 20.600-1.700l21.100-21.100c8.400-8.400 12.100-19.200 11.700-29.800a16 16 0 0 0-6.900-12.600c-2.900-2-6.600-4.900-10.300-8.600-28.100-28.100-28.200-73.600 0-101.800l67.200-67.200c28.200-28.200 74.300-28.100 102.300.5 27.800 28.300 26.900 73.900-1.200 102l-13.100 13.100c-4.400 4.400-5.800 10.800-3.800 16.600 5.900 17.200 9 35 9.700 52.700.5 13.900 17.500 20.400 27.300 10.600l37.100-37.100c59.300-59.300 59.300-155.700 0-215z"/></svg></div>
<div class="c bl" style="left:331.0px;width:127.0px"><div class="sel" style="left:3.0px;width:120.3px"><span>Perez</span><svg width="8.20" height="4.60" viewBox="0 0 128.0 72.0" preserveAspectRatio="none" style="position:absolute;left:103.60px;top:7.80px;" ><path fill="#000" d="M125.6 13.6 69.6 69.6Q67.2 72 64 72Q60.8 72 58.4 69.6L2.4 13.6Q0 11.2 0 8Q0 4.8 2.4 2.4Q4.8 0 8 0H120Q123.2 0 125.6 2.4Q128 4.8 128 8Q128 11.2 125.6 13.6Z"/></svg></div></div>
<div class="c bl" style="left:458.0px;width:234.0px"><div class="sel" style="left:3.0px;width:209.6px"><span class="tr">Lambrusco di Sorbara…</span><svg width="8.20" height="4.60" viewBox="0 0 128.0 72.0" preserveAspectRatio="none" style="position:absolute;left:193.80px;top:7.80px;" ><path fill="#000" d="M125.6 13.6 69.6 69.6Q67.2 72 64 72Q60.8 72 58.4 69.6L2.4 13.6Q0 11.2 0 8Q0 4.8 2.4 2.4Q4.8 0 8 0H120Q123.2 0 125.6 2.4Q128 4.8 128 8Q128 11.2 125.6 13.6Z"/></svg></div><svg width="13.80" height="13.60" viewBox="0 0 512 512" preserveAspectRatio="none" style="position:absolute;left:216.20px;top:6.00px;"><path fill="#000" d="M326.600 185.400c59.700 59.800 58.900 155.700.4 214.600-.1.100-.2.300-.4.400l-67.200 67.200c-59.300 59.300-155.700 59.300-215 0-59.300-59.300-59.300-155.700 0-215l37.100-37.100c9.800-9.800 26.800-3.300 27.300 10.600.6 17.700 3.800 35.500 9.700 52.700 2 5.800.6 12.300-3.800 16.600l-13.100 13.100c-28 28-28.900 73.700-1.200 102 28 28.600 74.100 28.700 102.300.5l67.200-67.200c28.200-28.200 28.100-73.800 0-101.800-3.700-3.700-7.400-6.600-10.300-8.600a16 16 0 0 1-6.900-12.600c-.4-10.600 3.300-21.500 11.700-29.800l21.100-21.100c5.500-5.500 14.200-6.200 20.600-1.700a152.500 152.500 0 0 1 20.500 17.200zM467.500 44.400c-59.300-59.300-155.700-59.300-215 0l-67.200 67.200c-.1.100-.3.300-.4.400-58.600 58.900-59.400 154.800.4 214.600a152.500 152.500 0 0 0 20.500 17.200c6.400 4.500 15.100 3.800 20.600-1.700l21.100-21.100c8.400-8.400 12.100-19.200 11.700-29.800a16 16 0 0 0-6.900-12.600c-2.900-2-6.600-4.900-10.300-8.600-28.100-28.100-28.200-73.600 0-101.800l67.200-67.200c28.200-28.200 74.300-28.100 102.300.5 27.800 28.300 26.900 73.900-1.200 102l-13.100 13.100c-4.400 4.400-5.800 10.800-3.800 16.600 5.900 17.200 9 35 9.700 52.700.5 13.900 17.500 20.400 27.300 10.600l37.100-37.100c59.300-59.300 59.300-155.700 0-215z"/></svg></div>
<div class="c bl t" style="left:692.0px;width:143.0px"><span>34.00 €</span></div>
<div class="c p t" style="left:835.0px;width:183.0px"><span>09/03/2022 12:08:13</span></div>
<div class="c bl t" style="left:1018.0px;width:227.0px"><span></span></div>
<div class="c bl t" style="left:1245.0px;width:195.0px"><span>Via Ghibellina, 87</span></div>
<div class="c bl t" style="left:1440.0px;width:99.0px"><span>Firenze</span></div>
</div>
<div class="row" style="top:52.60px">
<div class="c p" style="left:0.0px;width:35.0px"><div class="cb"></div></div>
<div class="c p" style="left:35.0px;width:34.0px"><svg width="14.00" height="14.00" viewBox="0 0 512 512" preserveAspectRatio="none" style="position:absolute;left:9.20px;top:5.90px;"><path fill="#222" d="M487.400 315.700l-42.600-24.600c4.300-23.200 4.300-47 0-70.200l42.600-24.600c4.900-2.800 7.100-8.600 5.500-14-11.100-35.600-30-67.800-54.700-94.600-3.800-4.100-10-5.100-14.800-2.300L380.800 110c-17.900-15.400-38.500-27.300-60.800-35.100V25.800c0-5.600-3.900-10.500-9.400-11.700-36.700-8.200-74.300-7.800-109.200 0-5.500 1.200-9.400 6.100-9.400 11.700V75c-22.200 7.900-42.800 19.800-60.800 35.100L88.700 85.500c-4.900-2.800-11-1.900-14.800 2.300-24.700 26.700-43.600 58.900-54.700 94.600-1.700 5.400.6 11.200 5.500 14L67.300 221c-4.300 23.200-4.300 47 0 70.200l-42.600 24.600c-4.900 2.800-7.100 8.600-5.500 14 11.100 35.600 30 67.800 54.700 94.600 3.800 4.100 10 5.100 14.800 2.300l42.600-24.600c17.900 15.400 38.500 27.300 60.800 35.100v49.200c0 5.600 3.900 10.500 9.400 11.700 36.700 8.200 74.300 7.800 109.200 0 5.500-1.200 9.400-6.100 9.400-11.700v-49.200c22.200-7.900 42.800-19.800 60.800-35.100l42.600 24.600c4.900 2.800 11 1.900 14.800-2.300 24.700-26.700 43.600-58.900 54.700-94.600 1.500-5.500-.7-11.300-5.600-14.100zM256 336c-44.100 0-80-35.900-80-80s35.900-80 80-80 80 35.900 80 80-35.900 80-80 80z"/></svg></div>
<div class="c bl" style="left:69.0px;width:262.0px"><div class="sel" style="left:3.0px;width:237.6px"><span>Dal Pescatore</span><svg width="8.20" height="4.60" viewBox="0 0 128.0 72.0" preserveAspectRatio="none" style="position:absolute;left:221.40px;top:7.80px;" ><path fill="#000" d="M125.6 13.6 69.6 69.6Q67.2 72 64 72Q60.8 72 58.4 69.6L2.4 13.6Q0 11.2 0 8Q0 4.8 2.4 2.4Q4.8 0 8 0H120Q123.2 0 125.6 2.4Q128 4.8 128 8Q128 11.2 125.6 13.6Z"/></svg></div><svg width="13.80" height="13.60" viewBox="0 0 512 512" preserveAspectRatio="none" style="position:absolute;left:244.00px;top:6.00px;"><path fill="#000" d="M326.600 185.400c59.700 59.800 58.900 155.700.4 214.600-.1.100-.2.300-.4.400l-67.200 67.200c-59.300 59.300-155.700 59.300-215 0-59.300-59.300-59.300-155.700 0-215l37.100-37.100c9.800-9.800 26.800-3.300 27.300 10.600.6 17.700 3.800 35.500 9.700 52.700 2 5.800.6 12.300-3.800 16.600l-13.100 13.100c-28 28-28.900 73.700-1.200 102 28 28.600 74.100 28.700 102.300.5l67.200-67.200c28.200-28.200 28.100-73.800 0-101.800-3.700-3.700-7.400-6.600-10.300-8.600a16 16 0 0 1-6.900-12.600c-.4-10.600 3.300-21.500 11.700-29.800l21.100-21.100c5.500-5.500 14.200-6.200 20.600-1.700a152.500 152.500 0 0 1 20.500 17.200zM467.500 44.400c-59.300-59.300-155.700-59.300-215 0l-67.200 67.200c-.1.100-.3.300-.4.400-58.600 58.900-59.400 154.800.4 214.600a152.500 152.500 0 0 0 20.500 17.200c6.400 4.500 15.100 3.800 20.600-1.700l21.100-21.100c8.400-8.400 12.100-19.200 11.700-29.800a16 16 0 0 0-6.900-12.600c-2.900-2-6.600-4.900-10.300-8.600-28.100-28.100-28.200-73.600 0-101.800l67.200-67.200c28.200-28.200 74.300-28.100 102.300.5 27.800 28.300 26.900 73.900-1.200 102l-13.100 13.100c-4.400 4.400-5.800 10.800-3.800 16.600 5.900 17.200 9 35 9.700 52.700.5 13.900 17.500 20.400 27.300 10.600l37.100-37.100c59.300-59.300 59.300-155.700 0-215z"/></svg></div>
<div class="c bl" style="left:331.0px;width:127.0px"><div class="sel" style="left:3.0px;width:120.3px"><span>Craig</span><svg width="8.20" height="4.60" viewBox="0 0 128.0 72.0" preserveAspectRatio="none" style="position:absolute;left:103.60px;top:7.80px;" ><path fill="#000" d="M125.6 13.6 69.6 69.6Q67.2 72 64 72Q60.8 72 58.4 69.6L2.4 13.6Q0 11.2 0 8Q0 4.8 2.4 2.4Q4.8 0 8 0H120Q123.2 0 125.6 2.4Q128 4.8 128 8Q128 11.2 125.6 13.6Z"/></svg></div></div>
<div class="c bl" style="left:458.0px;width:234.0px"><div class="sel" style="left:3.0px;width:209.6px"><span class="tr">Barbera D'Asti Superi…</span><svg width="8.20" height="4.60" viewBox="0 0 128.0 72.0" preserveAspectRatio="none" style="position:absolute;left:193.80px;top:7.80px;" ><path fill="#000" d="M125.6 13.6 69.6 69.6Q67.2 72 64 72Q60.8 72 58.4 69.6L2.4 13.6Q0 11.2 0 8Q0 4.8 2.4 2.4Q4.8 0 8 0H120Q123.2 0 125.6 2.4Q128 4.8 128 8Q128 11.2 125.6 13.6Z"/></svg></div><svg width="13.80" height="13.60" viewBox="0 0 512 512" preserveAspectRatio="none" style="position:absolute;left:216.20px;top:6.00px;"><path fill="#000" d="M326.600 185.400c59.700 59.800 58.900 155.700.4 214.600-.1.100-.2.300-.4.400l-67.200 67.200c-59.300 59.300-155.700 59.300-215 0-59.300-59.300-59.300-155.700 0-215l37.100-37.100c9.800-9.800 26.800-3.300 27.300 10.600.6 17.700 3.800 35.500 9.700 52.700 2 5.800.6 12.300-3.800 16.600l-13.100 13.100c-28 28-28.900 73.700-1.200 102 28 28.600 74.100 28.700 102.300.5l67.200-67.200c28.200-28.200 28.100-73.800 0-101.800-3.700-3.700-7.400-6.600-10.300-8.600a16 16 0 0 1-6.900-12.600c-.4-10.600 3.300-21.500 11.700-29.800l21.100-21.100c5.500-5.500 14.200-6.200 20.600-1.700a152.500 152.500 0 0 1 20.500 17.200zM467.500 44.400c-59.300-59.300-155.700-59.300-215 0l-67.200 67.200c-.1.100-.3.300-.4.400-58.600 58.900-59.400 154.800.4 214.600a152.500 152.500 0 0 0 20.500 17.200c6.400 4.500 15.100 3.800 20.600-1.700l21.100-21.100c8.400-8.400 12.100-19.200 11.700-29.800a16 16 0 0 0-6.900-12.600c-2.900-2-6.600-4.900-10.300-8.600-28.100-28.100-28.200-73.600 0-101.800l67.200-67.200c28.200-28.200 74.300-28.100 102.300.5 27.800 28.300 26.900 73.900-1.200 102l-13.100 13.100c-4.400 4.400-5.800 10.800-3.800 16.600 5.900 17.200 9 35 9.700 52.700.5 13.900 17.500 20.400 27.300 10.600l37.100-37.100c59.300-59.300 59.300-155.700 0-215z"/></svg></div>
<div class="c bl t" style="left:692.0px;width:143.0px"><span>34.00 €</span></div>
<div class="c p t" style="left:835.0px;width:183.0px"><span>09/03/2022 12:11:30</span></div>
<div class="c bl t" style="left:1018.0px;width:227.0px"><span>23/03/2022</span></div>
<div class="c bl t" style="left:1245.0px;width:195.0px"><span>Via Runate, 15</span></div>
<div class="c bl t" style="left:1440.0px;width:99.0px"><span>Canneto sull'Oglio</span></div>
</div>
<div class="row alt" style="top:78.80px">
<div class="c p" style="left:0.0px;width:35.0px"><div class="cb"></div></div>
<div class="c p" style="left:35.0px;width:34.0px"><svg width="14.00" height="14.00" viewBox="0 0 512 512" preserveAspectRatio="none" style="position:absolute;left:9.20px;top:5.90px;"><path fill="#222" d="M487.400 315.700l-42.600-24.600c4.300-23.200 4.300-47 0-70.200l42.600-24.600c4.900-2.800 7.100-8.600 5.500-14-11.100-35.600-30-67.800-54.700-94.600-3.800-4.100-10-5.100-14.800-2.300L380.800 110c-17.900-15.400-38.500-27.300-60.800-35.100V25.800c0-5.600-3.900-10.500-9.400-11.700-36.700-8.200-74.300-7.800-109.200 0-5.500 1.200-9.400 6.100-9.400 11.700V75c-22.200 7.900-42.800 19.800-60.800 35.100L88.700 85.500c-4.900-2.800-11-1.900-14.800 2.300-24.700 26.700-43.600 58.900-54.700 94.600-1.700 5.400.6 11.200 5.500 14L67.300 221c-4.300 23.200-4.300 47 0 70.200l-42.600 24.600c-4.900 2.800-7.100 8.600-5.500 14 11.100 35.600 30 67.800 54.700 94.600 3.800 4.100 10 5.100 14.800 2.300l42.600-24.600c17.900 15.400 38.500 27.300 60.800 35.100v49.200c0 5.600 3.900 10.500 9.400 11.700 36.700 8.200 74.300 7.800 109.200 0 5.500-1.200 9.400-6.100 9.400-11.700v-49.200c22.200-7.900 42.800-19.800 60.800-35.100l42.600 24.600c4.900 2.800 11 1.900 14.800-2.300 24.700-26.700 43.600-58.900 54.700-94.600 1.500-5.500-.7-11.300-5.600-14.100zM256 336c-44.100 0-80-35.900-80-80s35.900-80 80-80 80 35.900 80 80-35.900 80-80 80z"/></svg></div>
<div class="c bl" style="left:69.0px;width:262.0px"><div class="sel" style="left:3.0px;width:237.6px"><span>Dal Pescatore</span><svg width="8.20" height="4.60" viewBox="0 0 128.0 72.0" preserveAspectRatio="none" style="position:absolute;left:221.40px;top:7.80px;" ><path fill="#000" d="M125.6 13.6 69.6 69.6Q67.2 72 64 72Q60.8 72 58.4 69.6L2.4 13.6Q0 11.2 0 8Q0 4.8 2.4 2.4Q4.8 0 8 0H120Q123.2 0 125.6 2.4Q128 4.8 128 8Q128 11.2 125.6 13.6Z"/></svg></div><svg width="13.80" height="13.60" viewBox="0 0 512 512" preserveAspectRatio="none" style="position:absolute;left:244.00px;top:6.00px;"><path fill="#000" d="M326.600 185.400c59.700 59.800 58.900 155.700.4 214.600-.1.100-.2.300-.4.400l-67.200 67.200c-59.300 59.300-155.700 59.300-215 0-59.300-59.300-59.300-155.700 0-215l37.100-37.100c9.800-9.800 26.800-3.300 27.300 10.600.6 17.700 3.800 35.500 9.700 52.700 2 5.800.6 12.300-3.800 16.600l-13.100 13.100c-28 28-28.900 73.700-1.200 102 28 28.600 74.100 28.700 102.300.5l67.200-67.200c28.200-28.200 28.100-73.800 0-101.800-3.700-3.700-7.400-6.600-10.300-8.600a16 16 0 0 1-6.900-12.600c-.4-10.600 3.300-21.500 11.700-29.800l21.100-21.100c5.500-5.500 14.200-6.200 20.600-1.700a152.500 152.500 0 0 1 20.500 17.200zM467.500 44.400c-59.300-59.300-155.700-59.300-215 0l-67.200 67.200c-.1.100-.3.300-.4.400-58.600 58.900-59.400 154.800.4 214.600a152.500 152.500 0 0 0 20.500 17.200c6.400 4.500 15.100 3.800 20.600-1.700l21.100-21.100c8.400-8.400 12.100-19.200 11.700-29.800a16 16 0 0 0-6.900-12.600c-2.900-2-6.600-4.900-10.300-8.600-28.100-28.100-28.200-73.600 0-101.800l67.200-67.200c28.200-28.200 74.300-28.100 102.300.5 27.800 28.300 26.900 73.900-1.200 102l-13.100 13.100c-4.400 4.400-5.800 10.800-3.800 16.600 5.900 17.200 9 35 9.700 52.700.5 13.900 17.500 20.400 27.300 10.600l37.100-37.100c59.300-59.300 59.300-155.700 0-215z"/></svg></div>
<div class="c bl" style="left:331.0px;width:127.0px"><div class="sel" style="left:3.0px;width:120.3px"><span>McCoy</span><svg width="8.20" height="4.60" viewBox="0 0 128.0 72.0" preserveAspectRatio="none" style="position:absolute;left:103.60px;top:7.80px;" ><path fill="#000" d="M125.6 13.6 69.6 69.6Q67.2 72 64 72Q60.8 72 58.4 69.6L2.4 13.6Q0 11.2 0 8Q0 4.8 2.4 2.4Q4.8 0 8 0H120Q123.2 0 125.6 2.4Q128 4.8 128 8Q128 11.2 125.6 13.6Z"/></svg></div></div>
<div class="c bl" style="left:458.0px;width:234.0px"><div class="sel" style="left:3.0px;width:209.6px"><span>Barbera D'Alba Riserva</span><svg width="8.20" height="4.60" viewBox="0 0 128.0 72.0" preserveAspectRatio="none" style="position:absolute;left:193.80px;top:7.80px;" ><path fill="#000" d="M125.6 13.6 69.6 69.6Q67.2 72 64 72Q60.8 72 58.4 69.6L2.4 13.6Q0 11.2 0 8Q0 4.8 2.4 2.4Q4.8 0 8 0H120Q123.2 0 125.6 2.4Q128 4.8 128 8Q128 11.2 125.6 13.6Z"/></svg></div><svg width="13.80" height="13.60" viewBox="0 0 512 512" preserveAspectRatio="none" style="position:absolute;left:216.20px;top:6.00px;"><path fill="#000" d="M326.600 185.400c59.700 59.800 58.900 155.700.4 214.600-.1.100-.2.300-.4.400l-67.200 67.200c-59.300 59.300-155.700 59.300-215 0-59.300-59.300-59.300-155.700 0-215l37.100-37.100c9.800-9.800 26.800-3.300 27.300 10.600.6 17.700 3.800 35.500 9.700 52.700 2 5.800.6 12.300-3.800 16.600l-13.100 13.100c-28 28-28.900 73.700-1.200 102 28 28.600 74.100 28.700 102.300.5l67.200-67.200c28.200-28.200 28.100-73.800 0-101.800-3.700-3.700-7.400-6.600-10.300-8.600a16 16 0 0 1-6.900-12.600c-.4-10.600 3.300-21.500 11.700-29.800l21.100-21.100c5.500-5.500 14.200-6.200 20.600-1.700a152.500 152.500 0 0 1 20.500 17.200zM467.500 44.400c-59.300-59.300-155.700-59.300-215 0l-67.200 67.200c-.1.100-.3.300-.4.400-58.600 58.900-59.400 154.800.4 214.600a152.500 152.500 0 0 0 20.500 17.200c6.400 4.500 15.100 3.800 20.600-1.700l21.100-21.100c8.400-8.400 12.100-19.200 11.700-29.800a16 16 0 0 0-6.900-12.600c-2.900-2-6.600-4.900-10.300-8.600-28.100-28.100-28.200-73.600 0-101.800l67.200-67.200c28.200-28.200 74.300-28.100 102.300.5 27.800 28.300 26.900 73.900-1.200 102l-13.100 13.100c-4.400 4.400-5.800 10.800-3.800 16.600 5.900 17.200 9 35 9.700 52.700.5 13.900 17.500 20.400 27.300 10.600l37.100-37.100c59.300-59.300 59.300-155.700 0-215z"/></svg></div>
<div class="c bl t" style="left:692.0px;width:143.0px"><span>42.00 €</span></div>
<div class="c p t" style="left:835.0px;width:183.0px"><span>11/03/2022 17:14:30</span></div>
<div class="c bl t" style="left:1018.0px;width:227.0px"><span></span></div>
<div class="c bl t" style="left:1245.0px;width:195.0px"><span>Via Runate, 15</span></div>
<div class="c bl t" style="left:1440.0px;width:99.0px"><span>Canneto sull'Oglio</span></div>
</div>
<div class="row" style="top:105.00px">
<div class="c p" style="left:0.0px;width:35.0px"><div class="cb"></div></div>
<div class="c p" style="left:35.0px;width:34.0px"><svg width="14.00" height="14.00" viewBox="0 0 512 512" preserveAspectRatio="none" style="position:absolute;left:9.20px;top:5.90px;"><path fill="#222" d="M487.400 315.700l-42.600-24.600c4.300-23.200 4.300-47 0-70.200l42.600-24.600c4.900-2.800 7.100-8.600 5.500-14-11.100-35.600-30-67.800-54.700-94.600-3.800-4.100-10-5.100-14.800-2.300L380.800 110c-17.900-15.400-38.500-27.300-60.800-35.100V25.800c0-5.600-3.900-10.500-9.400-11.700-36.700-8.200-74.300-7.800-109.200 0-5.500 1.200-9.400 6.100-9.400 11.700V75c-22.200 7.900-42.800 19.800-60.800 35.100L88.700 85.500c-4.900-2.800-11-1.900-14.800 2.300-24.700 26.700-43.600 58.900-54.700 94.600-1.700 5.400.6 11.200 5.500 14L67.300 221c-4.300 23.200-4.300 47 0 70.200l-42.600 24.600c-4.900 2.800-7.100 8.600-5.500 14 11.100 35.600 30 67.800 54.700 94.600 3.800 4.100 10 5.100 14.800 2.300l42.600-24.600c17.900 15.400 38.500 27.300 60.800 35.100v49.200c0 5.600 3.900 10.500 9.400 11.700 36.700 8.200 74.300 7.800 109.200 0 5.500-1.200 9.400-6.100 9.400-11.700v-49.200c22.200-7.900 42.800-19.800 60.800-35.100l42.600 24.600c4.900 2.800 11 1.900 14.800-2.300 24.700-26.700 43.600-58.900 54.700-94.600 1.500-5.500-.7-11.300-5.600-14.100zM256 336c-44.100 0-80-35.900-80-80s35.900-80 80-80 80 35.900 80 80-35.900 80-80 80z"/></svg></div>
<div class="c bl" style="left:69.0px;width:262.0px"><div class="sel" style="left:3.0px;width:237.6px"><span>Dal Pescatore</span><svg width="8.20" height="4.60" viewBox="0 0 128.0 72.0" preserveAspectRatio="none" style="position:absolute;left:221.40px;top:7.80px;" ><path fill="#000" d="M125.6 13.6 69.6 69.6Q67.2 72 64 72Q60.8 72 58.4 69.6L2.4 13.6Q0 11.2 0 8Q0 4.8 2.4 2.4Q4.8 0 8 0H120Q123.2 0 125.6 2.4Q128 4.8 128 8Q128 11.2 125.6 13.6Z"/></svg></div><svg width="13.80" height="13.60" viewBox="0 0 512 512" preserveAspectRatio="none" style="position:absolute;left:244.00px;top:6.00px;"><path fill="#000" d="M326.600 185.400c59.700 59.800 58.900 155.700.4 214.600-.1.100-.2.300-.4.400l-67.200 67.200c-59.300 59.300-155.700 59.300-215 0-59.300-59.300-59.300-155.700 0-215l37.100-37.100c9.800-9.800 26.800-3.300 27.300 10.600.6 17.700 3.800 35.500 9.700 52.700 2 5.800.6 12.300-3.800 16.600l-13.100 13.100c-28 28-28.900 73.700-1.200 102 28 28.600 74.100 28.700 102.300.5l67.200-67.200c28.200-28.200 28.100-73.800 0-101.800-3.700-3.700-7.400-6.600-10.300-8.600a16 16 0 0 1-6.900-12.600c-.4-10.600 3.300-21.500 11.700-29.800l21.100-21.100c5.500-5.500 14.200-6.200 20.600-1.700a152.500 152.500 0 0 1 20.500 17.200zM467.500 44.400c-59.300-59.300-155.700-59.300-215 0l-67.200 67.200c-.1.100-.3.300-.4.400-58.600 58.900-59.400 154.800.4 214.600a152.500 152.500 0 0 0 20.500 17.200c6.400 4.500 15.100 3.800 20.600-1.700l21.100-21.100c8.400-8.400 12.100-19.200 11.700-29.800a16 16 0 0 0-6.900-12.600c-2.900-2-6.600-4.900-10.300-8.600-28.100-28.100-28.200-73.600 0-101.800l67.200-67.200c28.200-28.200 74.300-28.100 102.300.5 27.800 28.300 26.900 73.900-1.200 102l-13.100 13.100c-4.400 4.400-5.800 10.800-3.800 16.600 5.900 17.200 9 35 9.700 52.700.5 13.900 17.500 20.400 27.300 10.600l37.100-37.100c59.300-59.300 59.300-155.700 0-215z"/></svg></div>
<div class="c bl" style="left:331.0px;width:127.0px"><div class="sel" style="left:3.0px;width:120.3px"><span>Howell</span><svg width="8.20" height="4.60" viewBox="0 0 128.0 72.0" preserveAspectRatio="none" style="position:absolute;left:103.60px;top:7.80px;" ><path fill="#000" d="M125.6 13.6 69.6 69.6Q67.2 72 64 72Q60.8 72 58.4 69.6L2.4 13.6Q0 11.2 0 8Q0 4.8 2.4 2.4Q4.8 0 8 0H120Q123.2 0 125.6 2.4Q128 4.8 128 8Q128 11.2 125.6 13.6Z"/></svg></div></div>
<div class="c bl" style="left:458.0px;width:234.0px"><div class="sel" style="left:3.0px;width:209.6px"><span class="tr">Olio al tartufo bianco …</span><svg width="8.20" height="4.60" viewBox="0 0 128.0 72.0" preserveAspectRatio="none" style="position:absolute;left:193.80px;top:7.80px;" ><path fill="#000" d="M125.6 13.6 69.6 69.6Q67.2 72 64 72Q60.8 72 58.4 69.6L2.4 13.6Q0 11.2 0 8Q0 4.8 2.4 2.4Q4.8 0 8 0H120Q123.2 0 125.6 2.4Q128 4.8 128 8Q128 11.2 125.6 13.6Z"/></svg></div><svg width="13.80" height="13.60" viewBox="0 0 512 512" preserveAspectRatio="none" style="position:absolute;left:216.20px;top:6.00px;"><path fill="#000" d="M326.600 185.400c59.700 59.800 58.900 155.700.4 214.600-.1.100-.2.300-.4.400l-67.200 67.200c-59.300 59.300-155.700 59.300-215 0-59.300-59.300-59.300-155.700 0-215l37.100-37.100c9.800-9.800 26.800-3.300 27.300 10.600.6 17.700 3.800 35.500 9.700 52.700 2 5.800.6 12.300-3.800 16.600l-13.100 13.100c-28 28-28.900 73.700-1.200 102 28 28.600 74.100 28.700 102.300.5l67.200-67.200c28.200-28.200 28.100-73.800 0-101.800-3.700-3.700-7.400-6.600-10.300-8.600a16 16 0 0 1-6.900-12.600c-.4-10.600 3.300-21.500 11.700-29.800l21.100-21.100c5.500-5.500 14.200-6.200 20.600-1.700a152.500 152.500 0 0 1 20.500 17.200zM467.500 44.400c-59.300-59.300-155.700-59.300-215 0l-67.200 67.200c-.1.100-.3.300-.4.400-58.600 58.900-59.400 154.800.4 214.600a152.500 152.500 0 0 0 20.500 17.200c6.400 4.500 15.100 3.800 20.600-1.700l21.100-21.100c8.400-8.400 12.100-19.200 11.700-29.800a16 16 0 0 0-6.900-12.600c-2.900-2-6.600-4.900-10.300-8.600-28.100-28.100-28.200-73.600 0-101.800l67.200-67.200c28.200-28.200 74.300-28.100 102.300.5 27.800 28.300 26.900 73.900-1.200 102l-13.100 13.100c-4.400 4.400-5.800 10.800-3.800 16.600 5.900 17.200 9 35 9.700 52.700.5 13.900 17.500 20.400 27.300 10.600l37.100-37.100c59.300-59.300 59.300-155.700 0-215z"/></svg></div>
<div class="c bl t" style="left:692.0px;width:143.0px"><span>42.77 €</span></div>
<div class="c p t" style="left:835.0px;width:183.0px"><span>02/02/2022 10:22:17</span></div>
<div class="c bl t" style="left:1018.0px;width:227.0px"><span></span></div>
<div class="c bl t" style="left:1245.0px;width:195.0px"><span>Via Runate, 15</span></div>
<div class="c bl t" style="left:1440.0px;width:99.0px"><span>Canneto sull'Oglio</span></div>
</div>
<div class="row alt" style="top:131.20px">
<div class="c p" style="left:0.0px;width:35.0px"><div class="cb"></div></div>
<div class="c p" style="left:35.0px;width:34.0px"><svg width="14.00" height="14.00" viewBox="0 0 512 512" preserveAspectRatio="none" style="position:absolute;left:9.20px;top:5.90px;"><path fill="#222" d="M487.400 315.700l-42.600-24.600c4.300-23.200 4.300-47 0-70.200l42.600-24.600c4.900-2.800 7.100-8.600 5.500-14-11.100-35.600-30-67.800-54.700-94.600-3.800-4.100-10-5.100-14.800-2.300L380.800 110c-17.900-15.400-38.500-27.300-60.800-35.100V25.800c0-5.600-3.900-10.500-9.400-11.700-36.700-8.200-74.300-7.800-109.200 0-5.500 1.200-9.400 6.100-9.400 11.700V75c-22.200 7.900-42.800 19.800-60.800 35.100L88.700 85.500c-4.900-2.800-11-1.900-14.800 2.300-24.700 26.700-43.600 58.900-54.700 94.600-1.700 5.400.6 11.200 5.500 14L67.300 221c-4.300 23.200-4.300 47 0 70.200l-42.600 24.600c-4.900 2.800-7.100 8.600-5.500 14 11.100 35.600 30 67.800 54.700 94.600 3.800 4.100 10 5.100 14.800 2.300l42.600-24.600c17.900 15.400 38.500 27.300 60.800 35.100v49.200c0 5.600 3.900 10.500 9.400 11.700 36.700 8.200 74.300 7.800 109.200 0 5.500-1.200 9.400-6.100 9.400-11.700v-49.200c22.200-7.900 42.800-19.800 60.800-35.100l42.600 24.600c4.900 2.800 11 1.900 14.800-2.300 24.700-26.700 43.600-58.900 54.700-94.600 1.500-5.500-.7-11.300-5.600-14.100zM256 336c-44.100 0-80-35.900-80-80s35.900-80 80-80 80 35.900 80 80-35.900 80-80 80z"/></svg></div>
<div class="c bl" style="left:69.0px;width:262.0px"><div class="sel" style="left:3.0px;width:237.6px"><span>Enoteca Pinchiorri</span><svg width="8.20" height="4.60" viewBox="0 0 128.0 72.0" preserveAspectRatio="none" style="position:absolute;left:221.40px;top:7.80px;" ><path fill="#000" d="M125.6 13.6 69.6 69.6Q67.2 72 64 72Q60.8 72 58.4 69.6L2.4 13.6Q0 11.2 0 8Q0 4.8 2.4 2.4Q4.8 0 8 0H120Q123.2 0 125.6 2.4Q128 4.8 128 8Q128 11.2 125.6 13.6Z"/></svg></div><svg width="13.80" height="13.60" viewBox="0 0 512 512" preserveAspectRatio="none" style="position:absolute;left:244.00px;top:6.00px;"><path fill="#000" d="M326.600 185.400c59.700 59.800 58.900 155.700.4 214.600-.1.100-.2.300-.4.400l-67.200 67.200c-59.300 59.300-155.700 59.300-215 0-59.300-59.300-59.300-155.700 0-215l37.100-37.100c9.800-9.800 26.800-3.300 27.300 10.600.6 17.700 3.800 35.500 9.700 52.700 2 5.800.6 12.300-3.800 16.600l-13.100 13.100c-28 28-28.900 73.700-1.200 102 28 28.600 74.100 28.700 102.300.5l67.200-67.200c28.200-28.200 28.100-73.800 0-101.800-3.700-3.700-7.400-6.600-10.300-8.600a16 16 0 0 1-6.900-12.600c-.4-10.600 3.300-21.500 11.700-29.800l21.100-21.100c5.500-5.500 14.200-6.200 20.600-1.700a152.500 152.500 0 0 1 20.500 17.200zM467.500 44.400c-59.300-59.300-155.700-59.300-215 0l-67.200 67.200c-.1.100-.3.300-.4.400-58.600 58.900-59.400 154.800.4 214.600a152.500 152.500 0 0 0 20.500 17.200c6.400 4.500 15.100 3.800 20.600-1.700l21.100-21.100c8.400-8.400 12.100-19.200 11.700-29.800a16 16 0 0 0-6.900-12.600c-2.900-2-6.600-4.900-10.300-8.600-28.100-28.100-28.200-73.600 0-101.800l67.200-67.200c28.200-28.200 74.300-28.100 102.300.5 27.800 28.300 26.900 73.900-1.200 102l-13.100 13.100c-4.400 4.400-5.800 10.800-3.800 16.600 5.900 17.200 9 35 9.700 52.700.5 13.900 17.500 20.400 27.300 10.600l37.100-37.100c59.300-59.300 59.300-155.700 0-215z"/></svg></div>
<div class="c bl" style="left:331.0px;width:127.0px"><div class="sel" style="left:3.0px;width:120.3px"><span>Howell</span><svg width="8.20" height="4.60" viewBox="0 0 128.0 72.0" preserveAspectRatio="none" style="position:absolute;left:103.60px;top:7.80px;" ><path fill="#000" d="M125.6 13.6 69.6 69.6Q67.2 72 64 72Q60.8 72 58.4 69.6L2.4 13.6Q0 11.2 0 8Q0 4.8 2.4 2.4Q4.8 0 8 0H120Q123.2 0 125.6 2.4Q128 4.8 128 8Q128 11.2 125.6 13.6Z"/></svg></div></div>
<div class="c bl" style="left:458.0px;width:234.0px"><div class="sel" style="left:3.0px;width:209.6px"><span class="tr">Lambrusco di Sorbara…</span><svg width="8.20" height="4.60" viewBox="0 0 128.0 72.0" preserveAspectRatio="none" style="position:absolute;left:193.80px;top:7.80px;" ><path fill="#000" d="M125.6 13.6 69.6 69.6Q67.2 72 64 72Q60.8 72 58.4 69.6L2.4 13.6Q0 11.2 0 8Q0 4.8 2.4 2.4Q4.8 0 8 0H120Q123.2 0 125.6 2.4Q128 4.8 128 8Q128 11.2 125.6 13.6Z"/></svg></div><svg width="13.80" height="13.60" viewBox="0 0 512 512" preserveAspectRatio="none" style="position:absolute;left:216.20px;top:6.00px;"><path fill="#000" d="M326.600 185.400c59.700 59.800 58.900 155.700.4 214.600-.1.100-.2.300-.4.400l-67.200 67.200c-59.300 59.300-155.700 59.300-215 0-59.300-59.300-59.300-155.700 0-215l37.100-37.100c9.800-9.800 26.800-3.300 27.300 10.600.6 17.700 3.800 35.500 9.700 52.700 2 5.800.6 12.300-3.800 16.600l-13.100 13.100c-28 28-28.900 73.700-1.200 102 28 28.600 74.100 28.700 102.300.5l67.200-67.200c28.200-28.200 28.100-73.800 0-101.800-3.700-3.700-7.400-6.600-10.300-8.600a16 16 0 0 1-6.900-12.600c-.4-10.600 3.300-21.500 11.700-29.800l21.100-21.100c5.500-5.500 14.200-6.200 20.600-1.700a152.500 152.500 0 0 1 20.500 17.200zM467.500 44.400c-59.300-59.300-155.700-59.300-215 0l-67.200 67.200c-.1.100-.3.300-.4.400-58.600 58.900-59.400 154.800.4 214.600a152.500 152.500 0 0 0 20.500 17.200c6.400 4.500 15.100 3.800 20.600-1.700l21.100-21.100c8.400-8.400 12.100-19.200 11.700-29.800a16 16 0 0 0-6.900-12.600c-2.900-2-6.600-4.900-10.300-8.600-28.100-28.100-28.200-73.600 0-101.800l67.200-67.200c28.200-28.200 74.300-28.100 102.300.5 27.800 28.300 26.900 73.900-1.200 102l-13.100 13.100c-4.400 4.400-5.800 10.800-3.800 16.600 5.900 17.200 9 35 9.700 52.700.5 13.900 17.500 20.400 27.300 10.600l37.100-37.100c59.300-59.300 59.300-155.700 0-215z"/></svg></div>
<div class="c bl t" style="left:692.0px;width:143.0px"><span>64.80 €</span></div>
<div class="c p t" style="left:835.0px;width:183.0px"><span>19/01/2022 16:25:04</span></div>
<div class="c bl t" style="left:1018.0px;width:227.0px"><span></span></div>
<div class="c bl t" style="left:1245.0px;width:195.0px"><span>Via Ghibellina, 87</span></div>
<div class="c bl t" style="left:1440.0px;width:99.0px"><span>Firenze</span></div>
</div>
<div class="row" style="top:157.40px">
<div class="c p" style="left:0.0px;width:35.0px"><div class="cb"></div></div>
<div class="c p" style="left:35.0px;width:34.0px"><svg width="14.00" height="14.00" viewBox="0 0 512 512" preserveAspectRatio="none" style="position:absolute;left:9.20px;top:5.90px;"><path fill="#222" d="M487.400 315.700l-42.600-24.600c4.300-23.200 4.300-47 0-70.200l42.600-24.600c4.900-2.800 7.100-8.600 5.500-14-11.100-35.600-30-67.800-54.700-94.600-3.800-4.100-10-5.100-14.800-2.300L380.800 110c-17.900-15.400-38.500-27.300-60.800-35.100V25.800c0-5.600-3.900-10.500-9.400-11.700-36.700-8.200-74.300-7.800-109.200 0-5.500 1.200-9.400 6.100-9.400 11.700V75c-22.200 7.900-42.800 19.800-60.800 35.100L88.700 85.500c-4.900-2.800-11-1.900-14.800 2.300-24.700 26.700-43.600 58.900-54.700 94.600-1.700 5.400.6 11.200 5.500 14L67.300 221c-4.300 23.200-4.300 47 0 70.200l-42.600 24.600c-4.900 2.800-7.100 8.600-5.500 14 11.100 35.600 30 67.800 54.700 94.600 3.800 4.100 10 5.100 14.800 2.300l42.600-24.600c17.900 15.400 38.500 27.300 60.800 35.100v49.200c0 5.600 3.900 10.500 9.400 11.700 36.700 8.200 74.300 7.800 109.200 0 5.500-1.200 9.400-6.100 9.400-11.700v-49.200c22.200-7.900 42.800-19.800 60.800-35.100l42.600 24.600c4.900 2.800 11 1.900 14.800-2.300 24.700-26.700 43.600-58.900 54.700-94.600 1.500-5.500-.7-11.300-5.600-14.100zM256 336c-44.100 0-80-35.900-80-80s35.900-80 80-80 80 35.900 80 80-35.900 80-80 80z"/></svg></div>
<div class="c bl" style="left:69.0px;width:262.0px"><div class="sel" style="left:3.0px;width:237.6px"><span>Enoteca Pinchiorri</span><svg width="8.20" height="4.60" viewBox="0 0 128.0 72.0" preserveAspectRatio="none" style="position:absolute;left:221.40px;top:7.80px;" ><path fill="#000" d="M125.6 13.6 69.6 69.6Q67.2 72 64 72Q60.8 72 58.4 69.6L2.4 13.6Q0 11.2 0 8Q0 4.8 2.4 2.4Q4.8 0 8 0H120Q123.2 0 125.6 2.4Q128 4.8 128 8Q128 11.2 125.6 13.6Z"/></svg></div><svg width="13.80" height="13.60" viewBox="0 0 512 512" preserveAspectRatio="none" style="position:absolute;left:244.00px;top:6.00px;"><path fill="#000" d="M326.600 185.400c59.700 59.800 58.900 155.700.4 214.600-.1.100-.2.300-.4.400l-67.200 67.200c-59.300 59.300-155.700 59.300-215 0-59.300-59.300-59.300-155.700 0-215l37.100-37.100c9.800-9.800 26.800-3.300 27.300 10.600.6 17.700 3.800 35.500 9.700 52.700 2 5.800.6 12.300-3.800 16.600l-13.100 13.100c-28 28-28.900 73.700-1.200 102 28 28.600 74.100 28.700 102.300.5l67.200-67.200c28.200-28.200 28.100-73.800 0-101.800-3.700-3.700-7.400-6.600-10.300-8.600a16 16 0 0 1-6.900-12.600c-.4-10.600 3.300-21.500 11.700-29.800l21.100-21.100c5.500-5.500 14.200-6.200 20.600-1.700a152.500 152.500 0 0 1 20.500 17.200zM467.500 44.400c-59.300-59.300-155.700-59.300-215 0l-67.200 67.200c-.1.100-.3.300-.4.400-58.600 58.900-59.400 154.800.4 214.600a152.500 152.500 0 0 0 20.500 17.200c6.400 4.500 15.100 3.800 20.600-1.700l21.100-21.100c8.400-8.400 12.100-19.200 11.700-29.800a16 16 0 0 0-6.900-12.600c-2.900-2-6.600-4.900-10.300-8.600-28.100-28.100-28.200-73.600 0-101.800l67.200-67.200c28.200-28.200 74.300-28.100 102.300.5 27.800 28.300 26.900 73.900-1.200 102l-13.100 13.100c-4.400 4.400-5.800 10.800-3.800 16.600 5.900 17.200 9 35 9.700 52.700.5 13.900 17.500 20.400 27.300 10.600l37.100-37.100c59.300-59.300 59.300-155.700 0-215z"/></svg></div>
<div class="c bl" style="left:331.0px;width:127.0px"><div class="sel" style="left:3.0px;width:120.3px"><span>Howell</span><svg width="8.20" height="4.60" viewBox="0 0 128.0 72.0" preserveAspectRatio="none" style="position:absolute;left:103.60px;top:7.80px;" ><path fill="#000" d="M125.6 13.6 69.6 69.6Q67.2 72 64 72Q60.8 72 58.4 69.6L2.4 13.6Q0 11.2 0 8Q0 4.8 2.4 2.4Q4.8 0 8 0H120Q123.2 0 125.6 2.4Q128 4.8 128 8Q128 11.2 125.6 13.6Z"/></svg></div></div>
<div class="c bl" style="left:458.0px;width:234.0px"><div class="sel" style="left:3.0px;width:209.6px"><span class="tr">Lambrusco di Sorbara…</span><svg width="8.20" height="4.60" viewBox="0 0 128.0 72.0" preserveAspectRatio="none" style="position:absolute;left:193.80px;top:7.80px;" ><path fill="#000" d="M125.6 13.6 69.6 69.6Q67.2 72 64 72Q60.8 72 58.4 69.6L2.4 13.6Q0 11.2 0 8Q0 4.8 2.4 2.4Q4.8 0 8 0H120Q123.2 0 125.6 2.4Q128 4.8 128 8Q128 11.2 125.6 13.6Z"/></svg></div><svg width="13.80" height="13.60" viewBox="0 0 512 512" preserveAspectRatio="none" style="position:absolute;left:216.20px;top:6.00px;"><path fill="#000" d="M326.600 185.400c59.700 59.800 58.900 155.700.4 214.600-.1.100-.2.300-.4.400l-67.200 67.200c-59.300 59.300-155.700 59.300-215 0-59.300-59.300-59.300-155.700 0-215l37.100-37.100c9.800-9.800 26.800-3.300 27.300 10.600.6 17.700 3.800 35.500 9.700 52.700 2 5.800.6 12.300-3.800 16.600l-13.100 13.100c-28 28-28.900 73.700-1.200 102 28 28.600 74.100 28.700 102.300.5l67.200-67.200c28.200-28.200 28.100-73.800 0-101.800-3.700-3.700-7.400-6.600-10.300-8.600a16 16 0 0 1-6.900-12.600c-.4-10.600 3.300-21.500 11.700-29.800l21.100-21.100c5.500-5.500 14.200-6.200 20.600-1.700a152.500 152.500 0 0 1 20.500 17.200zM467.500 44.400c-59.300-59.300-155.700-59.300-215 0l-67.200 67.200c-.1.100-.3.300-.4.400-58.600 58.900-59.400 154.800.4 214.600a152.500 152.500 0 0 0 20.500 17.200c6.400 4.500 15.100 3.800 20.600-1.700l21.100-21.100c8.400-8.400 12.100-19.200 11.700-29.800a16 16 0 0 0-6.900-12.600c-2.900-2-6.600-4.900-10.300-8.600-28.100-28.100-28.200-73.600 0-101.800l67.200-67.200c28.200-28.200 74.300-28.100 102.300.5 27.800 28.300 26.900 73.900-1.200 102l-13.100 13.100c-4.400 4.400-5.800 10.800-3.800 16.600 5.900 17.200 9 35 9.700 52.700.5 13.900 17.500 20.400 27.300 10.600l37.100-37.100c59.300-59.300 59.300-155.700 0-215z"/></svg></div>
<div class="c bl t" style="left:692.0px;width:143.0px"><span>64.80 €</span></div>
<div class="c p t" style="left:835.0px;width:183.0px"><span>19/01/2022 16:25:10</span></div>
<div class="c bl t" style="left:1018.0px;width:227.0px"><span></span></div>
<div class="c bl t" style="left:1245.0px;width:195.0px"><span>Via Ghibellina, 87</span></div>
<div class="c bl t" style="left:1440.0px;width:99.0px"><span>Firenze</span></div>
</div>
<div class="row alt" style="top:183.60px">
<div class="c p" style="left:0.0px;width:35.0px"><div class="cb"></div></div>
<div class="c p" style="left:35.0px;width:34.0px"><svg width="14.00" height="14.00" viewBox="0 0 512 512" preserveAspectRatio="none" style="position:absolute;left:9.20px;top:5.90px;"><path fill="#222" d="M487.400 315.700l-42.600-24.600c4.300-23.200 4.300-47 0-70.200l42.600-24.600c4.900-2.800 7.100-8.600 5.500-14-11.100-35.600-30-67.800-54.700-94.600-3.800-4.100-10-5.100-14.800-2.300L380.800 110c-17.900-15.400-38.500-27.300-60.800-35.100V25.800c0-5.600-3.900-10.500-9.400-11.700-36.700-8.200-74.300-7.800-109.200 0-5.500 1.200-9.400 6.100-9.400 11.700V75c-22.200 7.900-42.800 19.800-60.800 35.100L88.700 85.500c-4.900-2.800-11-1.900-14.800 2.300-24.700 26.700-43.600 58.900-54.700 94.600-1.700 5.400.6 11.200 5.500 14L67.300 221c-4.300 23.200-4.300 47 0 70.200l-42.600 24.600c-4.900 2.800-7.100 8.600-5.500 14 11.100 35.600 30 67.800 54.700 94.600 3.800 4.100 10 5.100 14.800 2.300l42.600-24.600c17.900 15.400 38.500 27.300 60.800 35.100v49.200c0 5.600 3.900 10.500 9.400 11.700 36.700 8.200 74.300 7.800 109.200 0 5.500-1.200 9.400-6.100 9.400-11.700v-49.200c22.200-7.900 42.800-19.800 60.800-35.100l42.600 24.600c4.900 2.800 11 1.900 14.800-2.300 24.700-26.700 43.600-58.900 54.700-94.600 1.500-5.500-.7-11.300-5.600-14.100zM256 336c-44.100 0-80-35.900-80-80s35.900-80 80-80 80 35.900 80 80-35.900 80-80 80z"/></svg></div>
<div class="c bl" style="left:69.0px;width:262.0px"><div class="sel" style="left:3.0px;width:237.6px"><span>Enoteca Pinchiorri</span><svg width="8.20" height="4.60" viewBox="0 0 128.0 72.0" preserveAspectRatio="none" style="position:absolute;left:221.40px;top:7.80px;" ><path fill="#000" d="M125.6 13.6 69.6 69.6Q67.2 72 64 72Q60.8 72 58.4 69.6L2.4 13.6Q0 11.2 0 8Q0 4.8 2.4 2.4Q4.8 0 8 0H120Q123.2 0 125.6 2.4Q128 4.8 128 8Q128 11.2 125.6 13.6Z"/></svg></div><svg width="13.80" height="13.60" viewBox="0 0 512 512" preserveAspectRatio="none" style="position:absolute;left:244.00px;top:6.00px;"><path fill="#000" d="M326.600 185.400c59.700 59.800 58.900 155.700.4 214.600-.1.100-.2.300-.4.400l-67.200 67.200c-59.300 59.300-155.700 59.300-215 0-59.300-59.300-59.300-155.700 0-215l37.100-37.100c9.800-9.800 26.800-3.300 27.300 10.600.6 17.700 3.800 35.500 9.700 52.700 2 5.800.6 12.300-3.800 16.600l-13.100 13.100c-28 28-28.900 73.700-1.200 102 28 28.600 74.100 28.700 102.300.5l67.200-67.200c28.200-28.200 28.100-73.800 0-101.800-3.700-3.700-7.400-6.600-10.300-8.600a16 16 0 0 1-6.900-12.600c-.4-10.600 3.300-21.500 11.700-29.800l21.100-21.100c5.500-5.500 14.200-6.200 20.600-1.700a152.500 152.500 0 0 1 20.500 17.200zM467.500 44.400c-59.300-59.300-155.700-59.300-215 0l-67.200 67.200c-.1.100-.3.300-.4.400-58.600 58.900-59.400 154.800.4 214.600a152.500 152.500 0 0 0 20.500 17.200c6.400 4.500 15.100 3.800 20.600-1.700l21.100-21.100c8.400-8.400 12.100-19.200 11.700-29.800a16 16 0 0 0-6.900-12.600c-2.900-2-6.600-4.900-10.300-8.600-28.100-28.100-28.200-73.600 0-101.800l67.200-67.200c28.200-28.200 74.300-28.100 102.300.5 27.800 28.300 26.900 73.900-1.200 102l-13.100 13.100c-4.400 4.400-5.800 10.800-3.800 16.600 5.900 17.200 9 35 9.700 52.700.5 13.900 17.500 20.400 27.300 10.600l37.100-37.100c59.300-59.300 59.300-155.700 0-215z"/></svg></div>
<div class="c bl" style="left:331.0px;width:127.0px"><div class="sel" style="left:3.0px;width:120.3px"><span>Howell</span><svg width="8.20" height="4.60" viewBox="0 0 128.0 72.0" preserveAspectRatio="none" style="position:absolute;left:103.60px;top:7.80px;" ><path fill="#000" d="M125.6 13.6 69.6 69.6Q67.2 72 64 72Q60.8 72 58.4 69.6L2.4 13.6Q0 11.2 0 8Q0 4.8 2.4 2.4Q4.8 0 8 0H120Q123.2 0 125.6 2.4Q128 4.8 128 8Q128 11.2 125.6 13.6Z"/></svg></div></div>
<div class="c bl" style="left:458.0px;width:234.0px"><div class="sel" style="left:3.0px;width:209.6px"><span class="tr">Lambrusco di Sorbara…</span><svg width="8.20" height="4.60" viewBox="0 0 128.0 72.0" preserveAspectRatio="none" style="position:absolute;left:193.80px;top:7.80px;" ><path fill="#000" d="M125.6 13.6 69.6 69.6Q67.2 72 64 72Q60.8 72 58.4 69.6L2.4 13.6Q0 11.2 0 8Q0 4.8 2.4 2.4Q4.8 0 8 0H120Q123.2 0 125.6 2.4Q128 4.8 128 8Q128 11.2 125.6 13.6Z"/></svg></div><svg width="13.80" height="13.60" viewBox="0 0 512 512" preserveAspectRatio="none" style="position:absolute;left:216.20px;top:6.00px;"><path fill="#000" d="M326.600 185.400c59.700 59.800 58.900 155.700.4 214.600-.1.100-.2.300-.4.400l-67.200 67.200c-59.300 59.300-155.700 59.300-215 0-59.300-59.300-59.300-155.700 0-215l37.100-37.100c9.800-9.800 26.800-3.300 27.300 10.600.6 17.700 3.800 35.500 9.700 52.700 2 5.800.6 12.300-3.800 16.600l-13.100 13.100c-28 28-28.900 73.700-1.200 102 28 28.600 74.100 28.700 102.300.5l67.200-67.200c28.200-28.200 28.100-73.800 0-101.800-3.700-3.700-7.400-6.600-10.300-8.600a16 16 0 0 1-6.900-12.600c-.4-10.600 3.300-21.500 11.700-29.800l21.100-21.100c5.500-5.500 14.200-6.200 20.600-1.700a152.500 152.500 0 0 1 20.500 17.200zM467.500 44.400c-59.300-59.300-155.700-59.300-215 0l-67.200 67.200c-.1.100-.3.300-.4.400-58.600 58.900-59.400 154.800.4 214.600a152.500 152.500 0 0 0 20.500 17.200c6.400 4.500 15.100 3.800 20.600-1.700l21.100-21.100c8.400-8.400 12.100-19.200 11.700-29.800a16 16 0 0 0-6.900-12.600c-2.900-2-6.600-4.900-10.300-8.600-28.100-28.100-28.200-73.600 0-101.800l67.200-67.200c28.200-28.200 74.300-28.100 102.300.5 27.800 28.300 26.900 73.900-1.200 102l-13.100 13.100c-4.400 4.400-5.800 10.800-3.800 16.600 5.900 17.200 9 35 9.700 52.700.5 13.900 17.500 20.400 27.300 10.600l37.100-37.100c59.300-59.300 59.300-155.700 0-215z"/></svg></div>
<div class="c bl t" style="left:692.0px;width:143.0px"><span>64.80 €</span></div>
<div class="c p t" style="left:835.0px;width:183.0px"><span>19/01/2022 16:25:16</span></div>
<div class="c bl t" style="left:1018.0px;width:227.0px"><span></span></div>
<div class="c bl t" style="left:1245.0px;width:195.0px"><span>Via Ghibellina, 87</span></div>
<div class="c bl t" style="left:1440.0px;width:99.0px"><span>Firenze</span></div>
</div>
<div class="row" style="top:209.80px">
<div class="c p" style="left:0.0px;width:35.0px"><div class="cb"></div></div>
<div class="c p" style="left:35.0px;width:34.0px"><svg width="14.00" height="14.00" viewBox="0 0 512 512" preserveAspectRatio="none" style="position:absolute;left:9.20px;top:5.90px;"><path fill="#222" d="M487.400 315.700l-42.600-24.600c4.300-23.200 4.300-47 0-70.200l42.600-24.600c4.900-2.800 7.100-8.600 5.500-14-11.100-35.600-30-67.800-54.700-94.600-3.800-4.100-10-5.100-14.800-2.300L380.800 110c-17.900-15.400-38.500-27.300-60.800-35.100V25.800c0-5.600-3.900-10.500-9.400-11.700-36.700-8.200-74.300-7.800-109.200 0-5.500 1.200-9.400 6.100-9.400 11.700V75c-22.200 7.900-42.800 19.800-60.800 35.100L88.700 85.500c-4.900-2.800-11-1.900-14.800 2.300-24.700 26.700-43.600 58.900-54.700 94.600-1.700 5.400.6 11.200 5.500 14L67.300 221c-4.300 23.200-4.300 47 0 70.200l-42.600 24.600c-4.900 2.800-7.100 8.600-5.500 14 11.100 35.600 30 67.800 54.700 94.600 3.800 4.100 10 5.100 14.800 2.300l42.600-24.600c17.900 15.400 38.500 27.300 60.800 35.100v49.200c0 5.600 3.900 10.500 9.400 11.700 36.700 8.200 74.300 7.800 109.200 0 5.500-1.200 9.400-6.100 9.400-11.700v-49.200c22.200-7.900 42.800-19.800 60.800-35.100l42.600 24.600c4.900 2.800 11 1.900 14.800-2.300 24.700-26.700 43.600-58.900 54.700-94.600 1.500-5.500-.7-11.300-5.600-14.100zM256 336c-44.100 0-80-35.900-80-80s35.900-80 80-80 80 35.900 80 80-35.900 80-80 80z"/></svg></div>
<div class="c bl" style="left:69.0px;width:262.0px"><div class="sel" style="left:3.0px;width:237.6px"><span>Osteria Francescana</span><svg width="8.20" height="4.60" viewBox="0 0 128.0 72.0" preserveAspectRatio="none" style="position:absolute;left:221.40px;top:7.80px;" ><path fill="#000" d="M125.6 13.6 69.6 69.6Q67.2 72 64 72Q60.8 72 58.4 69.6L2.4 13.6Q0 11.2 0 8Q0 4.8 2.4 2.4Q4.8 0 8 0H120Q123.2 0 125.6 2.4Q128 4.8 128 8Q128 11.2 125.6 13.6Z"/></svg></div><svg width="13.80" height="13.60" viewBox="0 0 512 512" preserveAspectRatio="none" style="position:absolute;left:244.00px;top:6.00px;"><path fill="#000" d="M326.600 185.400c59.700 59.800 58.900 155.700.4 214.600-.1.100-.2.300-.4.400l-67.200 67.200c-59.300 59.300-155.700 59.300-215 0-59.300-59.300-59.300-155.700 0-215l37.100-37.100c9.800-9.800 26.800-3.300 27.300 10.600.6 17.700 3.800 35.500 9.700 52.700 2 5.800.6 12.300-3.800 16.600l-13.100 13.100c-28 28-28.900 73.700-1.200 102 28 28.600 74.100 28.700 102.300.5l67.200-67.200c28.200-28.200 28.100-73.800 0-101.800-3.700-3.700-7.400-6.600-10.300-8.600a16 16 0 0 1-6.900-12.600c-.4-10.600 3.300-21.500 11.700-29.800l21.100-21.100c5.500-5.500 14.200-6.200 20.600-1.700a152.500 152.500 0 0 1 20.500 17.200zM467.500 44.400c-59.300-59.300-155.700-59.300-215 0l-67.200 67.200c-.1.100-.3.300-.4.400-58.600 58.900-59.400 154.800.4 214.600a152.500 152.500 0 0 0 20.500 17.200c6.400 4.500 15.100 3.800 20.600-1.700l21.100-21.100c8.400-8.400 12.100-19.200 11.700-29.800a16 16 0 0 0-6.900-12.600c-2.900-2-6.600-4.900-10.300-8.600-28.100-28.100-28.200-73.600 0-101.800l67.200-67.200c28.200-28.200 74.300-28.100 102.300.5 27.800 28.300 26.900 73.900-1.200 102l-13.100 13.100c-4.400 4.400-5.800 10.800-3.800 16.600 5.900 17.200 9 35 9.700 52.700.5 13.900 17.500 20.400 27.300 10.600l37.100-37.100c59.300-59.300 59.300-155.700 0-215z"/></svg></div>
<div class="c bl" style="left:331.0px;width:127.0px"><div class="sel" style="left:3.0px;width:120.3px"><span>Craig</span><svg width="8.20" height="4.60" viewBox="0 0 128.0 72.0" preserveAspectRatio="none" style="position:absolute;left:103.60px;top:7.80px;" ><path fill="#000" d="M125.6 13.6 69.6 69.6Q67.2 72 64 72Q60.8 72 58.4 69.6L2.4 13.6Q0 11.2 0 8Q0 4.8 2.4 2.4Q4.8 0 8 0H120Q123.2 0 125.6 2.4Q128 4.8 128 8Q128 11.2 125.6 13.6Z"/></svg></div></div>
<div class="c bl" style="left:458.0px;width:234.0px"><div class="sel" style="left:3.0px;width:209.6px"><span class="tr">Zaitun Monocoltivar 5…</span><svg width="8.20" height="4.60" viewBox="0 0 128.0 72.0" preserveAspectRatio="none" style="position:absolute;left:193.80px;top:7.80px;" ><path fill="#000" d="M125.6 13.6 69.6 69.6Q67.2 72 64 72Q60.8 72 58.4 69.6L2.4 13.6Q0 11.2 0 8Q0 4.8 2.4 2.4Q4.8 0 8 0H120Q123.2 0 125.6 2.4Q128 4.8 128 8Q128 11.2 125.6 13.6Z"/></svg></div><svg width="13.80" height="13.60" viewBox="0 0 512 512" preserveAspectRatio="none" style="position:absolute;left:216.20px;top:6.00px;"><path fill="#000" d="M326.600 185.400c59.700 59.800 58.900 155.700.4 214.600-.1.100-.2.300-.4.400l-67.200 67.200c-59.300 59.300-155.700 59.300-215 0-59.300-59.300-59.300-155.700 0-215l37.100-37.100c9.800-9.800 26.800-3.300 27.300 10.600.6 17.700 3.800 35.500 9.700 52.700 2 5.800.6 12.300-3.800 16.600l-13.100 13.100c-28 28-28.900 73.700-1.200 102 28 28.600 74.100 28.700 102.300.5l67.200-67.200c28.200-28.200 28.100-73.800 0-101.800-3.700-3.700-7.400-6.600-10.300-8.600a16 16 0 0 1-6.900-12.600c-.4-10.600 3.300-21.500 11.700-29.800l21.100-21.100c5.500-5.500 14.200-6.200 20.600-1.700a152.500 152.500 0 0 1 20.500 17.200zM467.500 44.400c-59.300-59.300-155.700-59.300-215 0l-67.200 67.200c-.1.100-.3.300-.4.400-58.600 58.900-59.400 154.800.4 214.600a152.500 152.500 0 0 0 20.500 17.200c6.400 4.500 15.100 3.800 20.600-1.700l21.100-21.100c8.400-8.400 12.100-19.200 11.700-29.800a16 16 0 0 0-6.900-12.600c-2.900-2-6.600-4.900-10.300-8.600-28.100-28.100-28.200-73.600 0-101.800l67.200-67.200c28.200-28.200 74.300-28.100 102.300.5 27.800 28.300 26.900 73.900-1.200 102l-13.100 13.100c-4.400 4.400-5.800 10.800-3.800 16.600 5.900 17.200 9 35 9.700 52.700.5 13.900 17.500 20.400 27.300 10.600l37.100-37.100c59.300-59.300 59.300-155.700 0-215z"/></svg></div>
<div class="c bl t" style="left:692.0px;width:143.0px"><span>73.15 €</span></div>
<div class="c p t" style="left:835.0px;width:183.0px"><span>19/01/2022 16:25:20</span></div>
<div class="c bl t" style="left:1018.0px;width:227.0px"><span></span></div>
<div class="c bl t" style="left:1245.0px;width:195.0px"><span>Via Stella, 22</span></div>
<div class="c bl t" style="left:1440.0px;width:99.0px"><span>Modena</span></div>
</div>
<div class="row alt" style="top:236.00px">
<div class="c p" style="left:0.0px;width:35.0px"><div class="cb"></div></div>
<div class="c p" style="left:35.0px;width:34.0px"><svg width="14.00" height="14.00" viewBox="0 0 512 512" preserveAspectRatio="none" style="position:absolute;left:9.20px;top:5.90px;"><path fill="#222" d="M487.400 315.700l-42.600-24.600c4.300-23.200 4.300-47 0-70.200l42.600-24.600c4.900-2.800 7.100-8.600 5.500-14-11.100-35.600-30-67.800-54.700-94.600-3.800-4.100-10-5.100-14.800-2.300L380.800 110c-17.900-15.400-38.500-27.300-60.800-35.100V25.800c0-5.600-3.900-10.500-9.400-11.700-36.700-8.200-74.300-7.800-109.200 0-5.500 1.200-9.400 6.100-9.400 11.700V75c-22.200 7.900-42.800 19.800-60.800 35.100L88.700 85.500c-4.900-2.800-11-1.900-14.800 2.300-24.700 26.700-43.600 58.900-54.700 94.600-1.700 5.400.6 11.200 5.500 14L67.300 221c-4.300 23.200-4.300 47 0 70.200l-42.600 24.600c-4.900 2.800-7.100 8.600-5.500 14 11.100 35.600 30 67.800 54.700 94.600 3.800 4.100 10 5.100 14.800 2.300l42.600-24.600c17.900 15.400 38.500 27.300 60.800 35.100v49.200c0 5.600 3.900 10.500 9.400 11.700 36.700 8.200 74.300 7.800 109.200 0 5.500-1.200 9.400-6.100 9.400-11.700v-49.200c22.200-7.900 42.800-19.800 60.800-35.100l42.600 24.600c4.900 2.800 11 1.900 14.800-2.300 24.700-26.700 43.600-58.900 54.700-94.600 1.500-5.500-.7-11.300-5.600-14.100zM256 336c-44.100 0-80-35.900-80-80s35.900-80 80-80 80 35.900 80 80-35.900 80-80 80z"/></svg></div>
<div class="c bl" style="left:69.0px;width:262.0px"><div class="sel" style="left:3.0px;width:237.6px"><span>Osteria Francescana</span><svg width="8.20" height="4.60" viewBox="0 0 128.0 72.0" preserveAspectRatio="none" style="position:absolute;left:221.40px;top:7.80px;" ><path fill="#000" d="M125.6 13.6 69.6 69.6Q67.2 72 64 72Q60.8 72 58.4 69.6L2.4 13.6Q0 11.2 0 8Q0 4.8 2.4 2.4Q4.8 0 8 0H120Q123.2 0 125.6 2.4Q128 4.8 128 8Q128 11.2 125.6 13.6Z"/></svg></div><svg width="13.80" height="13.60" viewBox="0 0 512 512" preserveAspectRatio="none" style="position:absolute;left:244.00px;top:6.00px;"><path fill="#000" d="M326.600 185.400c59.700 59.800 58.900 155.700.4 214.600-.1.100-.2.300-.4.400l-67.200 67.200c-59.300 59.300-155.700 59.300-215 0-59.300-59.300-59.300-155.700 0-215l37.100-37.100c9.800-9.800 26.800-3.300 27.300 10.600.6 17.700 3.800 35.500 9.700 52.700 2 5.800.6 12.300-3.800 16.600l-13.100 13.100c-28 28-28.900 73.700-1.200 102 28 28.600 74.100 28.700 102.300.5l67.200-67.200c28.200-28.200 28.100-73.800 0-101.800-3.700-3.700-7.400-6.600-10.300-8.600a16 16 0 0 1-6.900-12.600c-.4-10.600 3.300-21.500 11.700-29.800l21.100-21.100c5.500-5.500 14.200-6.200 20.600-1.700a152.500 152.500 0 0 1 20.500 17.200zM467.500 44.400c-59.300-59.300-155.700-59.300-215 0l-67.200 67.200c-.1.100-.3.300-.4.400-58.600 58.900-59.400 154.800.4 214.600a152.500 152.500 0 0 0 20.500 17.200c6.400 4.500 15.100 3.800 20.600-1.700l21.100-21.100c8.400-8.400 12.100-19.200 11.700-29.800a16 16 0 0 0-6.900-12.600c-2.900-2-6.600-4.900-10.300-8.600-28.100-28.100-28.200-73.600 0-101.800l67.200-67.200c28.200-28.200 74.300-28.100 102.300.5 27.800 28.300 26.900 73.900-1.200 102l-13.100 13.100c-4.400 4.400-5.800 10.800-3.800 16.600 5.900 17.200 9 35 9.700 52.700.5 13.900 17.500 20.400 27.300 10.600l37.100-37.100c59.300-59.300 59.300-155.700 0-215z"/></svg></div>
<div class="c bl" style="left:331.0px;width:127.0px"><div class="sel" style="left:3.0px;width:120.3px"><span>Craig</span><svg width="8.20" height="4.60" viewBox="0 0 128.0 72.0" preserveAspectRatio="none" style="position:absolute;left:103.60px;top:7.80px;" ><path fill="#000" d="M125.6 13.6 69.6 69.6Q67.2 72 64 72Q60.8 72 58.4 69.6L2.4 13.6Q0 11.2 0 8Q0 4.8 2.4 2.4Q4.8 0 8 0H120Q123.2 0 125.6 2.4Q128 4.8 128 8Q128 11.2 125.6 13.6Z"/></svg></div></div>
<div class="c bl" style="left:458.0px;width:234.0px"><div class="sel" style="left:3.0px;width:209.6px"><span class="tr">Zaitun Monocoltivar 5…</span><svg width="8.20" height="4.60" viewBox="0 0 128.0 72.0" preserveAspectRatio="none" style="position:absolute;left:193.80px;top:7.80px;" ><path fill="#000" d="M125.6 13.6 69.6 69.6Q67.2 72 64 72Q60.8 72 58.4 69.6L2.4 13.6Q0 11.2 0 8Q0 4.8 2.4 2.4Q4.8 0 8 0H120Q123.2 0 125.6 2.4Q128 4.8 128 8Q128 11.2 125.6 13.6Z"/></svg></div><svg width="13.80" height="13.60" viewBox="0 0 512 512" preserveAspectRatio="none" style="position:absolute;left:216.20px;top:6.00px;"><path fill="#000" d="M326.600 185.400c59.700 59.800 58.900 155.700.4 214.600-.1.100-.2.300-.4.400l-67.200 67.200c-59.300 59.300-155.700 59.300-215 0-59.300-59.300-59.300-155.700 0-215l37.100-37.100c9.800-9.800 26.800-3.300 27.300 10.600.6 17.700 3.800 35.500 9.700 52.700 2 5.800.6 12.300-3.800 16.600l-13.100 13.100c-28 28-28.900 73.700-1.200 102 28 28.600 74.100 28.700 102.300.5l67.200-67.200c28.200-28.200 28.100-73.800 0-101.800-3.700-3.700-7.400-6.600-10.300-8.600a16 16 0 0 1-6.900-12.600c-.4-10.600 3.300-21.500 11.700-29.800l21.100-21.100c5.500-5.500 14.200-6.200 20.600-1.700a152.500 152.500 0 0 1 20.500 17.200zM467.500 44.400c-59.300-59.300-155.700-59.300-215 0l-67.200 67.200c-.1.100-.3.300-.4.400-58.600 58.900-59.400 154.800.4 214.600a152.500 152.500 0 0 0 20.500 17.200c6.400 4.500 15.100 3.800 20.600-1.700l21.100-21.100c8.400-8.400 12.100-19.200 11.700-29.800a16 16 0 0 0-6.900-12.600c-2.900-2-6.600-4.900-10.300-8.600-28.100-28.100-28.200-73.600 0-101.800l67.200-67.200c28.200-28.200 74.300-28.100 102.300.5 27.800 28.300 26.900 73.900-1.200 102l-13.100 13.100c-4.400 4.400-5.800 10.800-3.800 16.600 5.900 17.200 9 35 9.700 52.700.5 13.900 17.500 20.400 27.300 10.600l37.100-37.100c59.300-59.300 59.300-155.700 0-215z"/></svg></div>
<div class="c bl t" style="left:692.0px;width:143.0px"><span>73.15 €</span></div>
<div class="c p t" style="left:835.0px;width:183.0px"><span>22/12/2021 12:05:29</span></div>
<div class="c bl t" style="left:1018.0px;width:227.0px"><span></span></div>
<div class="c bl t" style="left:1245.0px;width:195.0px"><span>Via Stella, 22</span></div>
<div class="c bl t" style="left:1440.0px;width:99.0px"><span>Modena</span></div>
</div>
<div class="row" style="top:262.20px">
<div class="c p" style="left:0.0px;width:35.0px"><div class="cb"></div></div>
<div class="c p" style="left:35.0px;width:34.0px"><svg width="14.00" height="14.00" viewBox="0 0 512 512" preserveAspectRatio="none" style="position:absolute;left:9.20px;top:5.90px;"><path fill="#222" d="M487.400 315.700l-42.600-24.600c4.300-23.200 4.300-47 0-70.200l42.600-24.600c4.900-2.800 7.100-8.600 5.500-14-11.100-35.600-30-67.800-54.700-94.600-3.800-4.100-10-5.100-14.800-2.300L380.800 110c-17.900-15.400-38.500-27.300-60.800-35.100V25.800c0-5.600-3.900-10.500-9.400-11.700-36.700-8.200-74.300-7.800-109.200 0-5.500 1.200-9.400 6.100-9.400 11.700V75c-22.200 7.900-42.800 19.800-60.800 35.100L88.700 85.500c-4.900-2.800-11-1.900-14.800 2.300-24.700 26.700-43.600 58.900-54.700 94.600-1.700 5.400.6 11.200 5.500 14L67.300 221c-4.300 23.200-4.300 47 0 70.200l-42.600 24.600c-4.900 2.800-7.100 8.600-5.500 14 11.100 35.600 30 67.800 54.700 94.600 3.800 4.100 10 5.100 14.800 2.300l42.600-24.600c17.900 15.400 38.500 27.300 60.800 35.100v49.200c0 5.600 3.900 10.500 9.400 11.700 36.700 8.200 74.300 7.800 109.200 0 5.500-1.200 9.400-6.100 9.400-11.700v-49.200c22.200-7.900 42.800-19.800 60.800-35.100l42.600 24.600c4.900 2.800 11 1.900 14.800-2.300 24.700-26.700 43.600-58.900 54.700-94.600 1.500-5.500-.7-11.300-5.600-14.100zM256 336c-44.100 0-80-35.900-80-80s35.900-80 80-80 80 35.900 80 80-35.900 80-80 80z"/></svg></div>
<div class="c bl" style="left:69.0px;width:262.0px"><div class="sel" style="left:3.0px;width:237.6px"><span>Osteria Francescana</span><svg width="8.20" height="4.60" viewBox="0 0 128.0 72.0" preserveAspectRatio="none" style="position:absolute;left:221.40px;top:7.80px;" ><path fill="#000" d="M125.6 13.6 69.6 69.6Q67.2 72 64 72Q60.8 72 58.4 69.6L2.4 13.6Q0 11.2 0 8Q0 4.8 2.4 2.4Q4.8 0 8 0H120Q123.2 0 125.6 2.4Q128 4.8 128 8Q128 11.2 125.6 13.6Z"/></svg></div><svg width="13.80" height="13.60" viewBox="0 0 512 512" preserveAspectRatio="none" style="position:absolute;left:244.00px;top:6.00px;"><path fill="#000" d="M326.600 185.400c59.700 59.800 58.900 155.700.4 214.600-.1.100-.2.300-.4.400l-67.200 67.200c-59.300 59.300-155.700 59.300-215 0-59.300-59.300-59.300-155.700 0-215l37.100-37.100c9.800-9.800 26.800-3.300 27.300 10.600.6 17.700 3.800 35.500 9.700 52.700 2 5.800.6 12.300-3.800 16.600l-13.100 13.100c-28 28-28.900 73.700-1.200 102 28 28.600 74.100 28.700 102.300.5l67.200-67.200c28.200-28.200 28.100-73.800 0-101.800-3.700-3.700-7.400-6.600-10.300-8.600a16 16 0 0 1-6.900-12.600c-.4-10.600 3.300-21.500 11.700-29.800l21.100-21.100c5.500-5.500 14.200-6.200 20.600-1.700a152.500 152.500 0 0 1 20.500 17.200zM467.500 44.400c-59.300-59.300-155.700-59.300-215 0l-67.200 67.200c-.1.100-.3.300-.4.400-58.600 58.900-59.400 154.800.4 214.600a152.500 152.500 0 0 0 20.500 17.200c6.400 4.500 15.100 3.800 20.600-1.700l21.100-21.100c8.400-8.400 12.100-19.200 11.700-29.800a16 16 0 0 0-6.900-12.600c-2.900-2-6.600-4.900-10.300-8.600-28.100-28.100-28.200-73.600 0-101.800l67.200-67.200c28.200-28.200 74.300-28.100 102.300.5 27.800 28.300 26.900 73.900-1.200 102l-13.100 13.100c-4.400 4.400-5.800 10.800-3.800 16.600 5.900 17.200 9 35 9.700 52.700.5 13.900 17.500 20.400 27.300 10.600l37.100-37.100c59.300-59.300 59.300-155.700 0-215z"/></svg></div>
<div class="c bl" style="left:331.0px;width:127.0px"><div class="sel" style="left:3.0px;width:120.3px"><span>Craig</span><svg width="8.20" height="4.60" viewBox="0 0 128.0 72.0" preserveAspectRatio="none" style="position:absolute;left:103.60px;top:7.80px;" ><path fill="#000" d="M125.6 13.6 69.6 69.6Q67.2 72 64 72Q60.8 72 58.4 69.6L2.4 13.6Q0 11.2 0 8Q0 4.8 2.4 2.4Q4.8 0 8 0H120Q123.2 0 125.6 2.4Q128 4.8 128 8Q128 11.2 125.6 13.6Z"/></svg></div></div>
<div class="c bl" style="left:458.0px;width:234.0px"><div class="sel" style="left:3.0px;width:209.6px"><span class="tr">Zaitun Monocoltivar 5…</span><svg width="8.20" height="4.60" viewBox="0 0 128.0 72.0" preserveAspectRatio="none" style="position:absolute;left:193.80px;top:7.80px;" ><path fill="#000" d="M125.6 13.6 69.6 69.6Q67.2 72 64 72Q60.8 72 58.4 69.6L2.4 13.6Q0 11.2 0 8Q0 4.8 2.4 2.4Q4.8 0 8 0H120Q123.2 0 125.6 2.4Q128 4.8 128 8Q128 11.2 125.6 13.6Z"/></svg></div><svg width="13.80" height="13.60" viewBox="0 0 512 512" preserveAspectRatio="none" style="position:absolute;left:216.20px;top:6.00px;"><path fill="#000" d="M326.600 185.400c59.700 59.800 58.900 155.700.4 214.600-.1.100-.2.300-.4.400l-67.200 67.200c-59.300 59.300-155.700 59.300-215 0-59.300-59.300-59.300-155.700 0-215l37.100-37.100c9.800-9.800 26.800-3.300 27.300 10.600.6 17.700 3.800 35.500 9.700 52.700 2 5.800.6 12.300-3.800 16.600l-13.100 13.100c-28 28-28.900 73.700-1.200 102 28 28.600 74.100 28.700 102.300.5l67.200-67.200c28.200-28.200 28.100-73.800 0-101.800-3.700-3.700-7.400-6.600-10.300-8.600a16 16 0 0 1-6.900-12.600c-.4-10.600 3.300-21.500 11.700-29.800l21.100-21.100c5.500-5.500 14.200-6.200 20.600-1.700a152.500 152.500 0 0 1 20.500 17.200zM467.500 44.400c-59.300-59.300-155.700-59.300-215 0l-67.200 67.200c-.1.100-.3.300-.4.400-58.600 58.900-59.400 154.800.4 214.600a152.500 152.500 0 0 0 20.500 17.200c6.400 4.500 15.100 3.800 20.600-1.700l21.100-21.100c8.400-8.400 12.100-19.200 11.700-29.800a16 16 0 0 0-6.900-12.600c-2.900-2-6.600-4.900-10.300-8.600-28.100-28.100-28.200-73.600 0-101.800l67.200-67.200c28.200-28.200 74.300-28.100 102.300.5 27.800 28.300 26.900 73.900-1.200 102l-13.100 13.100c-4.400 4.400-5.800 10.800-3.800 16.600 5.900 17.200 9 35 9.700 52.700.5 13.900 17.500 20.400 27.300 10.600l37.100-37.100c59.300-59.300 59.300-155.700 0-215z"/></svg></div>
<div class="c bl t" style="left:692.0px;width:143.0px"><span>73.15 €</span></div>
<div class="c p t" style="left:835.0px;width:183.0px"><span>22/12/2021 12:05:13</span></div>
<div class="c bl t" style="left:1018.0px;width:227.0px"><span></span></div>
<div class="c bl t" style="left:1245.0px;width:195.0px"><span>Via Stella, 22</span></div>
<div class="c bl t" style="left:1440.0px;width:99.0px"><span>Modena</span></div>
</div>
<div class="row alt" style="top:288.40px">
<div class="c p" style="left:0.0px;width:35.0px"><div class="cb"></div></div>
<div class="c p" style="left:35.0px;width:34.0px"><svg width="14.00" height="14.00" viewBox="0 0 512 512" preserveAspectRatio="none" style="position:absolute;left:9.20px;top:5.90px;"><path fill="#222" d="M487.400 315.700l-42.600-24.600c4.300-23.200 4.300-47 0-70.200l42.600-24.600c4.900-2.800 7.100-8.600 5.500-14-11.100-35.600-30-67.800-54.700-94.600-3.800-4.100-10-5.100-14.800-2.300L380.800 110c-17.900-15.400-38.500-27.300-60.800-35.100V25.800c0-5.600-3.900-10.500-9.400-11.700-36.700-8.200-74.300-7.800-109.200 0-5.500 1.200-9.400 6.100-9.400 11.700V75c-22.200 7.900-42.800 19.800-60.800 35.100L88.700 85.500c-4.900-2.800-11-1.900-14.800 2.300-24.700 26.700-43.600 58.900-54.700 94.600-1.700 5.400.6 11.200 5.500 14L67.300 221c-4.300 23.200-4.300 47 0 70.200l-42.600 24.600c-4.900 2.800-7.100 8.600-5.500 14 11.100 35.600 30 67.800 54.700 94.600 3.800 4.100 10 5.100 14.800 2.300l42.600-24.600c17.900 15.400 38.500 27.300 60.800 35.100v49.200c0 5.600 3.900 10.500 9.400 11.700 36.700 8.200 74.300 7.800 109.200 0 5.500-1.200 9.400-6.100 9.400-11.700v-49.200c22.200-7.900 42.800-19.800 60.800-35.100l42.600 24.600c4.900 2.800 11 1.900 14.800-2.300 24.700-26.700 43.600-58.900 54.700-94.600 1.500-5.500-.7-11.300-5.600-14.100zM256 336c-44.100 0-80-35.900-80-80s35.900-80 80-80 80 35.900 80 80-35.900 80-80 80z"/></svg></div>
<div class="c bl" style="left:69.0px;width:262.0px"><div class="sel" style="left:3.0px;width:237.6px"><span>Osteria Francescana</span><svg width="8.20" height="4.60" viewBox="0 0 128.0 72.0" preserveAspectRatio="none" style="position:absolute;left:221.40px;top:7.80px;" ><path fill="#000" d="M125.6 13.6 69.6 69.6Q67.2 72 64 72Q60.8 72 58.4 69.6L2.4 13.6Q0 11.2 0 8Q0 4.8 2.4 2.4Q4.8 0 8 0H120Q123.2 0 125.6 2.4Q128 4.8 128 8Q128 11.2 125.6 13.6Z"/></svg></div><svg width="13.80" height="13.60" viewBox="0 0 512 512" preserveAspectRatio="none" style="position:absolute;left:244.00px;top:6.00px;"><path fill="#000" d="M326.600 185.400c59.700 59.800 58.900 155.700.4 214.600-.1.100-.2.300-.4.400l-67.200 67.200c-59.300 59.300-155.700 59.300-215 0-59.300-59.300-59.300-155.700 0-215l37.100-37.100c9.800-9.800 26.800-3.300 27.300 10.600.6 17.700 3.800 35.500 9.700 52.700 2 5.800.6 12.300-3.800 16.600l-13.100 13.100c-28 28-28.900 73.700-1.200 102 28 28.600 74.100 28.700 102.300.5l67.200-67.200c28.200-28.200 28.100-73.800 0-101.800-3.700-3.700-7.400-6.600-10.300-8.600a16 16 0 0 1-6.900-12.600c-.4-10.600 3.300-21.500 11.700-29.800l21.100-21.100c5.500-5.500 14.200-6.200 20.600-1.700a152.500 152.500 0 0 1 20.500 17.200zM467.500 44.400c-59.300-59.300-155.700-59.300-215 0l-67.200 67.200c-.1.100-.3.300-.4.400-58.600 58.900-59.400 154.800.4 214.600a152.500 152.500 0 0 0 20.500 17.200c6.400 4.500 15.100 3.800 20.600-1.700l21.100-21.100c8.400-8.400 12.100-19.200 11.700-29.800a16 16 0 0 0-6.900-12.600c-2.900-2-6.600-4.900-10.300-8.600-28.100-28.100-28.200-73.600 0-101.800l67.200-67.200c28.200-28.200 74.300-28.100 102.300.5 27.800 28.300 26.900 73.900-1.200 102l-13.100 13.100c-4.400 4.400-5.800 10.800-3.800 16.600 5.900 17.200 9 35 9.700 52.700.5 13.900 17.500 20.400 27.300 10.600l37.100-37.100c59.300-59.300 59.300-155.700 0-215z"/></svg></div>
<div class="c bl" style="left:331.0px;width:127.0px"><div class="sel" style="left:3.0px;width:120.3px"><span>Craig</span><svg width="8.20" height="4.60" viewBox="0 0 128.0 72.0" preserveAspectRatio="none" style="position:absolute;left:103.60px;top:7.80px;" ><path fill="#000" d="M125.6 13.6 69.6 69.6Q67.2 72 64 72Q60.8 72 58.4 69.6L2.4 13.6Q0 11.2 0 8Q0 4.8 2.4 2.4Q4.8 0 8 0H120Q123.2 0 125.6 2.4Q128 4.8 128 8Q128 11.2 125.6 13.6Z"/></svg></div></div>
<div class="c bl" style="left:458.0px;width:234.0px"><div class="sel" style="left:3.0px;width:209.6px"><span class="tr">Zaitun Monocoltivar 5…</span><svg width="8.20" height="4.60" viewBox="0 0 128.0 72.0" preserveAspectRatio="none" style="position:absolute;left:193.80px;top:7.80px;" ><path fill="#000" d="M125.6 13.6 69.6 69.6Q67.2 72 64 72Q60.8 72 58.4 69.6L2.4 13.6Q0 11.2 0 8Q0 4.8 2.4 2.4Q4.8 0 8 0H120Q123.2 0 125.6 2.4Q128 4.8 128 8Q128 11.2 125.6 13.6Z"/></svg></div><svg width="13.80" height="13.60" viewBox="0 0 512 512" preserveAspectRatio="none" style="position:absolute;left:216.20px;top:6.00px;"><path fill="#000" d="M326.600 185.400c59.700 59.800 58.900 155.700.4 214.600-.1.100-.2.300-.4.400l-67.200 67.200c-59.300 59.300-155.700 59.300-215 0-59.300-59.300-59.300-155.700 0-215l37.100-37.100c9.800-9.800 26.800-3.300 27.300 10.600.6 17.700 3.800 35.500 9.700 52.700 2 5.800.6 12.300-3.800 16.600l-13.100 13.100c-28 28-28.900 73.700-1.200 102 28 28.600 74.100 28.700 102.300.5l67.200-67.200c28.200-28.200 28.100-73.800 0-101.800-3.700-3.700-7.400-6.600-10.300-8.600a16 16 0 0 1-6.900-12.600c-.4-10.600 3.300-21.500 11.700-29.800l21.100-21.100c5.500-5.500 14.200-6.200 20.600-1.700a152.500 152.500 0 0 1 20.500 17.200zM467.500 44.400c-59.300-59.300-155.700-59.300-215 0l-67.200 67.200c-.1.100-.3.300-.4.400-58.600 58.900-59.400 154.800.4 214.600a152.500 152.500 0 0 0 20.500 17.200c6.400 4.500 15.100 3.800 20.600-1.700l21.100-21.100c8.400-8.400 12.100-19.200 11.700-29.800a16 16 0 0 0-6.900-12.600c-2.900-2-6.600-4.900-10.300-8.600-28.100-28.100-28.200-73.600 0-101.800l67.200-67.200c28.200-28.200 74.300-28.100 102.300.5 27.800 28.300 26.900 73.900-1.200 102l-13.100 13.100c-4.400 4.400-5.800 10.800-3.800 16.600 5.900 17.200 9 35 9.700 52.700.5 13.900 17.500 20.400 27.300 10.600l37.100-37.100c59.300-59.300 59.300-155.700 0-215z"/></svg></div>
<div class="c bl t" style="left:692.0px;width:143.0px"><span>73.15 €</span></div>
<div class="c p t" style="left:835.0px;width:183.0px"><span>22/12/2021 12:03:16</span></div>
<div class="c bl t" style="left:1018.0px;width:227.0px"><span></span></div>
<div class="c bl t" style="left:1245.0px;width:195.0px"><span>Via Stella, 22</span></div>
<div class="c bl t" style="left:1440.0px;width:99.0px"><span>Modena</span></div>
</div>
<div class="row" style="top:314.60px">
<div class="c p" style="left:0.0px;width:35.0px"><div class="cb"></div></div>
<div class="c p" style="left:35.0px;width:34.0px"><svg width="14.00" height="14.00" viewBox="0 0 512 512" preserveAspectRatio="none" style="position:absolute;left:9.20px;top:5.90px;"><path fill="#222" d="M487.400 315.700l-42.600-24.600c4.300-23.200 4.300-47 0-70.200l42.600-24.600c4.900-2.800 7.100-8.600 5.500-14-11.100-35.600-30-67.800-54.700-94.600-3.800-4.100-10-5.100-14.800-2.300L380.800 110c-17.900-15.400-38.500-27.300-60.800-35.100V25.800c0-5.600-3.900-10.500-9.400-11.700-36.700-8.200-74.300-7.800-109.200 0-5.500 1.200-9.400 6.100-9.400 11.700V75c-22.200 7.900-42.800 19.800-60.800 35.100L88.700 85.500c-4.900-2.800-11-1.900-14.800 2.300-24.700 26.700-43.600 58.900-54.700 94.600-1.700 5.400.6 11.200 5.500 14L67.300 221c-4.300 23.200-4.300 47 0 70.200l-42.600 24.600c-4.900 2.800-7.100 8.600-5.500 14 11.100 35.600 30 67.800 54.700 94.600 3.800 4.100 10 5.100 14.800 2.300l42.600-24.600c17.900 15.400 38.500 27.300 60.800 35.100v49.200c0 5.600 3.900 10.500 9.400 11.700 36.700 8.200 74.300 7.800 109.200 0 5.500-1.200 9.400-6.100 9.400-11.700v-49.200c22.200-7.900 42.800-19.800 60.800-35.100l42.600 24.600c4.900 2.800 11 1.900 14.800-2.300 24.700-26.700 43.600-58.900 54.700-94.600 1.500-5.500-.7-11.300-5.600-14.100zM256 336c-44.100 0-80-35.900-80-80s35.900-80 80-80 80 35.900 80 80-35.900 80-80 80z"/></svg></div>
<div class="c bl" style="left:69.0px;width:262.0px"><div class="sel" style="left:3.0px;width:237.6px"><span>Osteria Francescana</span><svg width="8.20" height="4.60" viewBox="0 0 128.0 72.0" preserveAspectRatio="none" style="position:absolute;left:221.40px;top:7.80px;" ><path fill="#000" d="M125.6 13.6 69.6 69.6Q67.2 72 64 72Q60.8 72 58.4 69.6L2.4 13.6Q0 11.2 0 8Q0 4.8 2.4 2.4Q4.8 0 8 0H120Q123.2 0 125.6 2.4Q128 4.8 128 8Q128 11.2 125.6 13.6Z"/></svg></div><svg width="13.80" height="13.60" viewBox="0 0 512 512" preserveAspectRatio="none" style="position:absolute;left:244.00px;top:6.00px;"><path fill="#000" d="M326.600 185.400c59.700 59.800 58.900 155.700.4 214.600-.1.100-.2.300-.4.400l-67.200 67.200c-59.300 59.300-155.700 59.300-215 0-59.300-59.300-59.300-155.700 0-215l37.100-37.100c9.800-9.800 26.800-3.300 27.300 10.600.6 17.700 3.800 35.500 9.700 52.700 2 5.800.6 12.300-3.800 16.600l-13.100 13.100c-28 28-28.900 73.700-1.200 102 28 28.600 74.100 28.700 102.300.5l67.200-67.200c28.200-28.200 28.100-73.800 0-101.800-3.700-3.700-7.400-6.600-10.300-8.600a16 16 0 0 1-6.900-12.600c-.4-10.600 3.300-21.500 11.700-29.800l21.100-21.100c5.500-5.500 14.200-6.200 20.600-1.700a152.500 152.500 0 0 1 20.500 17.200zM467.500 44.400c-59.300-59.300-155.700-59.300-215 0l-67.200 67.200c-.1.100-.3.300-.4.400-58.600 58.900-59.400 154.800.4 214.600a152.500 152.500 0 0 0 20.500 17.200c6.400 4.500 15.100 3.800 20.600-1.700l21.100-21.100c8.400-8.400 12.100-19.200 11.700-29.800a16 16 0 0 0-6.900-12.600c-2.900-2-6.600-4.900-10.300-8.600-28.100-28.100-28.200-73.600 0-101.800l67.200-67.200c28.200-28.200 74.300-28.100 102.300.5 27.800 28.300 26.900 73.900-1.200 102l-13.100 13.100c-4.400 4.400-5.800 10.800-3.800 16.600 5.900 17.200 9 35 9.700 52.700.5 13.900 17.500 20.400 27.300 10.600l37.100-37.100c59.300-59.300 59.300-155.700 0-215z"/></svg></div>
<div class="c bl" style="left:331.0px;width:127.0px"><div class="sel" style="left:3.0px;width:120.3px"><span>Craig</span><svg width="8.20" height="4.60" viewBox="0 0 128.0 72.0" preserveAspectRatio="none" style="position:absolute;left:103.60px;top:7.80px;" ><path fill="#000" d="M125.6 13.6 69.6 69.6Q67.2 72 64 72Q60.8 72 58.4 69.6L2.4 13.6Q0 11.2 0 8Q0 4.8 2.4 2.4Q4.8 0 8 0H120Q123.2 0 125.6 2.4Q128 4.8 128 8Q128 11.2 125.6 13.6Z"/></svg></div></div>
<div class="c bl" style="left:458.0px;width:234.0px"><div class="sel" style="left:3.0px;width:209.6px"><span class="tr">Zaitun Monocoltivar 5…</span><svg width="8.20" height="4.60" viewBox="0 0 128.0 72.0" preserveAspectRatio="none" style="position:absolute;left:193.80px;top:7.80px;" ><path fill="#000" d="M125.6 13.6 69.6 69.6Q67.2 72 64 72Q60.8 72 58.4 69.6L2.4 13.6Q0 11.2 0 8Q0 4.8 2.4 2.4Q4.8 0 8 0H120Q123.2 0 125.6 2.4Q128 4.8 128 8Q128 11.2 125.6 13.6Z"/></svg></div><svg width="13.80" height="13.60" viewBox="0 0 512 512" preserveAspectRatio="none" style="position:absolute;left:216.20px;top:6.00px;"><path fill="#000" d="M326.600 185.400c59.700 59.800 58.900 155.700.4 214.600-.1.100-.2.300-.4.400l-67.200 67.200c-59.300 59.300-155.700 59.300-215 0-59.300-59.300-59.300-155.700 0-215l37.100-37.100c9.800-9.800 26.800-3.300 27.300 10.600.6 17.700 3.800 35.500 9.700 52.700 2 5.800.6 12.300-3.800 16.600l-13.100 13.100c-28 28-28.900 73.700-1.200 102 28 28.600 74.100 28.700 102.300.5l67.200-67.200c28.200-28.200 28.100-73.800 0-101.800-3.700-3.700-7.400-6.600-10.300-8.600a16 16 0 0 1-6.900-12.600c-.4-10.600 3.300-21.500 11.700-29.800l21.100-21.100c5.500-5.500 14.200-6.200 20.600-1.700a152.500 152.500 0 0 1 20.500 17.200zM467.500 44.400c-59.300-59.300-155.700-59.300-215 0l-67.200 67.200c-.1.100-.3.300-.4.400-58.600 58.900-59.400 154.800.4 214.600a152.500 152.500 0 0 0 20.500 17.200c6.400 4.500 15.100 3.800 20.600-1.700l21.100-21.100c8.400-8.400 12.100-19.200 11.700-29.800a16 16 0 0 0-6.900-12.600c-2.900-2-6.600-4.900-10.300-8.600-28.100-28.100-28.200-73.600 0-101.800l67.200-67.200c28.200-28.200 74.300-28.100 102.300.5 27.800 28.300 26.900 73.900-1.200 102l-13.100 13.100c-4.400 4.400-5.800 10.800-3.800 16.600 5.900 17.200 9 35 9.700 52.700.5 13.900 17.500 20.400 27.300 10.600l37.100-37.100c59.300-59.300 59.300-155.700 0-215z"/></svg></div>
<div class="c bl t" style="left:692.0px;width:143.0px"><span>73.15 €</span></div>
<div class="c p t" style="left:835.0px;width:183.0px"><span>19/01/2022 16:25:07</span></div>
<div class="c bl t" style="left:1018.0px;width:227.0px"><span></span></div>
<div class="c bl t" style="left:1245.0px;width:195.0px"><span>Via Stella, 22</span></div>
<div class="c bl t" style="left:1440.0px;width:99.0px"><span>Modena</span></div>
</div>
<div class="row alt" style="top:340.80px">
<div class="c p" style="left:0.0px;width:35.0px"><div class="cb"></div></div>
<div class="c p" style="left:35.0px;width:34.0px"><svg width="14.00" height="14.00" viewBox="0 0 512 512" preserveAspectRatio="none" style="position:absolute;left:9.20px;top:5.90px;"><path fill="#222" d="M487.400 315.700l-42.600-24.600c4.300-23.200 4.300-47 0-70.200l42.600-24.600c4.900-2.800 7.100-8.600 5.500-14-11.100-35.600-30-67.800-54.700-94.600-3.800-4.100-10-5.100-14.800-2.300L380.800 110c-17.900-15.400-38.500-27.300-60.800-35.100V25.800c0-5.600-3.900-10.500-9.400-11.700-36.700-8.200-74.300-7.800-109.200 0-5.500 1.200-9.400 6.100-9.400 11.700V75c-22.200 7.900-42.800 19.800-60.800 35.100L88.700 85.500c-4.900-2.800-11-1.900-14.800 2.300-24.700 26.700-43.600 58.900-54.700 94.600-1.700 5.400.6 11.200 5.500 14L67.300 221c-4.300 23.200-4.300 47 0 70.200l-42.600 24.600c-4.900 2.800-7.100 8.600-5.500 14 11.100 35.600 30 67.800 54.700 94.600 3.800 4.100 10 5.100 14.800 2.300l42.600-24.600c17.900 15.400 38.500 27.300 60.800 35.100v49.200c0 5.600 3.900 10.500 9.400 11.700 36.700 8.200 74.300 7.800 109.200 0 5.500-1.200 9.400-6.100 9.400-11.700v-49.200c22.200-7.900 42.800-19.800 60.800-35.100l42.600 24.600c4.900 2.800 11 1.900 14.800-2.300 24.700-26.700 43.600-58.900 54.700-94.600 1.500-5.500-.7-11.300-5.600-14.100zM256 336c-44.100 0-80-35.900-80-80s35.900-80 80-80 80 35.900 80 80-35.900 80-80 80z"/></svg></div>
<div class="c bl" style="left:69.0px;width:262.0px"><div class="sel" style="left:3.0px;width:237.6px"><span>Osteria Francescana</span><svg width="8.20" height="4.60" viewBox="0 0 128.0 72.0" preserveAspectRatio="none" style="position:absolute;left:221.40px;top:7.80px;" ><path fill="#000" d="M125.6 13.6 69.6 69.6Q67.2 72 64 72Q60.8 72 58.4 69.6L2.4 13.6Q0 11.2 0 8Q0 4.8 2.4 2.4Q4.8 0 8 0H120Q123.2 0 125.6 2.4Q128 4.8 128 8Q128 11.2 125.6 13.6Z"/></svg></div><svg width="13.80" height="13.60" viewBox="0 0 512 512" preserveAspectRatio="none" style="position:absolute;left:244.00px;top:6.00px;"><path fill="#000" d="M326.600 185.400c59.700 59.800 58.900 155.700.4 214.600-.1.100-.2.300-.4.400l-67.200 67.200c-59.300 59.300-155.700 59.300-215 0-59.300-59.300-59.300-155.700 0-215l37.100-37.100c9.800-9.800 26.800-3.300 27.300 10.600.6 17.700 3.800 35.500 9.700 52.700 2 5.800.6 12.300-3.800 16.600l-13.100 13.100c-28 28-28.900 73.700-1.200 102 28 28.600 74.100 28.700 102.300.5l67.200-67.200c28.200-28.200 28.100-73.800 0-101.800-3.700-3.700-7.400-6.600-10.300-8.600a16 16 0 0 1-6.900-12.600c-.4-10.600 3.300-21.500 11.700-29.800l21.100-21.100c5.500-5.500 14.200-6.200 20.600-1.700a152.500 152.500 0 0 1 20.500 17.200zM467.500 44.400c-59.300-59.300-155.700-59.300-215 0l-67.200 67.200c-.1.100-.3.300-.4.400-58.600 58.900-59.400 154.800.4 214.600a152.500 152.500 0 0 0 20.500 17.200c6.400 4.500 15.100 3.800 20.600-1.700l21.100-21.100c8.400-8.400 12.100-19.200 11.700-29.800a16 16 0 0 0-6.900-12.600c-2.900-2-6.600-4.900-10.300-8.600-28.100-28.100-28.200-73.600 0-101.800l67.200-67.200c28.200-28.200 74.300-28.100 102.300.5 27.800 28.300 26.900 73.900-1.200 102l-13.100 13.100c-4.400 4.400-5.800 10.800-3.800 16.600 5.900 17.200 9 35 9.700 52.700.5 13.900 17.500 20.400 27.300 10.600l37.100-37.100c59.300-59.300 59.300-155.700 0-215z"/></svg></div>
<div class="c bl" style="left:331.0px;width:127.0px"><div class="sel" style="left:3.0px;width:120.3px"><span>McCoy</span><svg width="8.20" height="4.60" viewBox="0 0 128.0 72.0" preserveAspectRatio="none" style="position:absolute;left:103.60px;top:7.80px;" ><path fill="#000" d="M125.6 13.6 69.6 69.6Q67.2 72 64 72Q60.8 72 58.4 69.6L2.4 13.6Q0 11.2 0 8Q0 4.8 2.4 2.4Q4.8 0 8 0H120Q123.2 0 125.6 2.4Q128 4.8 128 8Q128 11.2 125.6 13.6Z"/></svg></div></div>
<div class="c bl" style="left:458.0px;width:234.0px"><div class="sel" style="left:3.0px;width:209.6px"><span>Primo Frutto Bio 500 ml</span><svg width="8.20" height="4.60" viewBox="0 0 128.0 72.0" preserveAspectRatio="none" style="position:absolute;left:193.80px;top:7.80px;" ><path fill="#000" d="M125.6 13.6 69.6 69.6Q67.2 72 64 72Q60.8 72 58.4 69.6L2.4 13.6Q0 11.2 0 8Q0 4.8 2.4 2.4Q4.8 0 8 0H120Q123.2 0 125.6 2.4Q128 4.8 128 8Q128 11.2 125.6 13.6Z"/></svg></div><svg width="13.80" height="13.60" viewBox="0 0 512 512" preserveAspectRatio="none" style="position:absolute;left:216.20px;top:6.00px;"><path fill="#000" d="M326.600 185.400c59.700 59.800 58.900 155.700.4 214.600-.1.100-.2.300-.4.400l-67.200 67.200c-59.300 59.300-155.700 59.300-215 0-59.300-59.300-59.300-155.700 0-215l37.100-37.100c9.800-9.800 26.800-3.300 27.300 10.600.6 17.700 3.800 35.500 9.700 52.700 2 5.800.6 12.300-3.800 16.600l-13.100 13.100c-28 28-28.900 73.700-1.200 102 28 28.600 74.100 28.700 102.300.5l67.200-67.200c28.200-28.200 28.100-73.800 0-101.800-3.700-3.700-7.400-6.600-10.300-8.600a16 16 0 0 1-6.900-12.600c-.4-10.600 3.300-21.500 11.700-29.800l21.100-21.100c5.500-5.500 14.200-6.200 20.600-1.700a152.500 152.500 0 0 1 20.500 17.200zM467.500 44.400c-59.300-59.300-155.700-59.300-215 0l-67.200 67.200c-.1.100-.3.300-.4.400-58.600 58.900-59.400 154.800.4 214.600a152.500 152.500 0 0 0 20.500 17.200c6.400 4.500 15.100 3.800 20.600-1.700l21.100-21.100c8.400-8.400 12.100-19.200 11.700-29.800a16 16 0 0 0-6.900-12.600c-2.900-2-6.600-4.900-10.300-8.600-28.100-28.100-28.200-73.600 0-101.800l67.200-67.200c28.200-28.200 74.300-28.100 102.300.5 27.800 28.300 26.900 73.900-1.200 102l-13.100 13.100c-4.400 4.400-5.800 10.800-3.800 16.600 5.900 17.200 9 35 9.700 52.700.5 13.900 17.500 20.400 27.300 10.600l37.100-37.100c59.300-59.300 59.300-155.700 0-215z"/></svg></div>
<div class="c bl t" style="left:692.0px;width:143.0px"><span>80.00 €</span></div>
<div class="c p t" style="left:835.0px;width:183.0px"><span>19/01/2022 16:25:06</span></div>
<div class="c bl t" style="left:1018.0px;width:227.0px"><span></span></div>
<div class="c bl t" style="left:1245.0px;width:195.0px"><span>Via Stella, 22</span></div>
<div class="c bl t" style="left:1440.0px;width:99.0px"><span>Modena</span></div>
</div>
<div class="row" style="top:367.00px">
<div class="c p" style="left:0.0px;width:35.0px"><div class="cb"></div></div>
<div class="c p" style="left:35.0px;width:34.0px"><svg width="14.00" height="14.00" viewBox="0 0 512 512" preserveAspectRatio="none" style="position:absolute;left:9.20px;top:5.90px;"><path fill="#222" d="M487.400 315.700l-42.600-24.600c4.300-23.200 4.300-47 0-70.200l42.600-24.600c4.900-2.800 7.100-8.600 5.500-14-11.100-35.600-30-67.800-54.700-94.600-3.800-4.100-10-5.100-14.800-2.300L380.800 110c-17.900-15.400-38.500-27.300-60.800-35.100V25.800c0-5.600-3.900-10.500-9.400-11.700-36.700-8.200-74.300-7.800-109.200 0-5.500 1.200-9.400 6.100-9.400 11.700V75c-22.200 7.900-42.800 19.800-60.800 35.100L88.700 85.500c-4.900-2.800-11-1.900-14.800 2.300-24.700 26.700-43.600 58.900-54.700 94.600-1.700 5.400.6 11.200 5.500 14L67.300 221c-4.300 23.200-4.300 47 0 70.200l-42.600 24.600c-4.900 2.800-7.100 8.600-5.500 14 11.100 35.600 30 67.800 54.700 94.600 3.800 4.100 10 5.100 14.800 2.300l42.600-24.600c17.900 15.400 38.500 27.300 60.800 35.100v49.200c0 5.600 3.900 10.500 9.400 11.700 36.700 8.200 74.300 7.800 109.200 0 5.500-1.200 9.400-6.100 9.400-11.700v-49.200c22.200-7.900 42.800-19.800 60.800-35.100l42.600 24.600c4.900 2.800 11 1.900 14.800-2.300 24.700-26.700 43.600-58.900 54.700-94.600 1.500-5.500-.7-11.300-5.600-14.100zM256 336c-44.100 0-80-35.900-80-80s35.900-80 80-80 80 35.900 80 80-35.900 80-80 80z"/></svg></div>
<div class="c bl" style="left:69.0px;width:262.0px"><div class="sel" style="left:3.0px;width:237.6px"><span>Osteria Francescana</span><svg width="8.20" height="4.60" viewBox="0 0 128.0 72.0" preserveAspectRatio="none" style="position:absolute;left:221.40px;top:7.80px;" ><path fill="#000" d="M125.6 13.6 69.6 69.6Q67.2 72 64 72Q60.8 72 58.4 69.6L2.4 13.6Q0 11.2 0 8Q0 4.8 2.4 2.4Q4.8 0 8 0H120Q123.2 0 125.6 2.4Q128 4.8 128 8Q128 11.2 125.6 13.6Z"/></svg></div><svg width="13.80" height="13.60" viewBox="0 0 512 512" preserveAspectRatio="none" style="position:absolute;left:244.00px;top:6.00px;"><path fill="#000" d="M326.600 185.400c59.700 59.800 58.900 155.700.4 214.600-.1.100-.2.300-.4.400l-67.200 67.200c-59.300 59.300-155.700 59.300-215 0-59.300-59.300-59.300-155.700 0-215l37.100-37.100c9.800-9.800 26.800-3.300 27.300 10.600.6 17.700 3.800 35.500 9.700 52.700 2 5.800.6 12.300-3.800 16.600l-13.100 13.100c-28 28-28.900 73.700-1.200 102 28 28.600 74.100 28.700 102.300.5l67.200-67.200c28.200-28.200 28.100-73.800 0-101.800-3.700-3.700-7.400-6.600-10.300-8.600a16 16 0 0 1-6.900-12.600c-.4-10.600 3.300-21.500 11.700-29.800l21.100-21.100c5.500-5.500 14.200-6.200 20.600-1.700a152.500 152.500 0 0 1 20.500 17.200zM467.500 44.400c-59.300-59.300-155.700-59.300-215 0l-67.200 67.200c-.1.100-.3.300-.4.400-58.600 58.900-59.400 154.800.4 214.600a152.500 152.500 0 0 0 20.500 17.200c6.400 4.500 15.100 3.800 20.600-1.700l21.100-21.100c8.400-8.400 12.100-19.200 11.700-29.800a16 16 0 0 0-6.900-12.600c-2.900-2-6.600-4.900-10.300-8.600-28.100-28.100-28.200-73.600 0-101.800l67.200-67.200c28.200-28.200 74.300-28.100 102.300.5 27.800 28.300 26.900 73.900-1.200 102l-13.100 13.100c-4.400 4.400-5.800 10.800-3.800 16.600 5.900 17.200 9 35 9.700 52.700.5 13.900 17.500 20.400 27.300 10.600l37.100-37.100c59.300-59.300 59.300-155.700 0-215z"/></svg></div>
<div class="c bl" style="left:331.0px;width:127.0px"><div class="sel" style="left:3.0px;width:120.3px"><span>McCoy</span><svg width="8.20" height="4.60" viewBox="0 0 128.0 72.0" preserveAspectRatio="none" style="position:absolute;left:103.60px;top:7.80px;" ><path fill="#000" d="M125.6 13.6 69.6 69.6Q67.2 72 64 72Q60.8 72 58.4 69.6L2.4 13.6Q0 11.2 0 8Q0 4.8 2.4 2.4Q4.8 0 8 0H120Q123.2 0 125.6 2.4Q128 4.8 128 8Q128 11.2 125.6 13.6Z"/></svg></div></div>
<div class="c bl" style="left:458.0px;width:234.0px"><div class="sel" style="left:3.0px;width:209.6px"><span>Primo Frutto Bio 500 ml</span><svg width="8.20" height="4.60" viewBox="0 0 128.0 72.0" preserveAspectRatio="none" style="position:absolute;left:193.80px;top:7.80px;" ><path fill="#000" d="M125.6 13.6 69.6 69.6Q67.2 72 64 72Q60.8 72 58.4 69.6L2.4 13.6Q0 11.2 0 8Q0 4.8 2.4 2.4Q4.8 0 8 0H120Q123.2 0 125.6 2.4Q128 4.8 128 8Q128 11.2 125.6 13.6Z"/></svg></div><svg width="13.80" height="13.60" viewBox="0 0 512 512" preserveAspectRatio="none" style="position:absolute;left:216.20px;top:6.00px;"><path fill="#000" d="M326.600 185.400c59.700 59.800 58.900 155.700.4 214.600-.1.100-.2.300-.4.400l-67.200 67.200c-59.300 59.300-155.700 59.300-215 0-59.300-59.300-59.300-155.700 0-215l37.100-37.100c9.800-9.800 26.800-3.300 27.300 10.600.6 17.700 3.800 35.500 9.700 52.700 2 5.800.6 12.300-3.800 16.600l-13.100 13.100c-28 28-28.900 73.700-1.200 102 28 28.600 74.100 28.700 102.300.5l67.200-67.200c28.200-28.200 28.100-73.800 0-101.800-3.700-3.700-7.400-6.600-10.300-8.600a16 16 0 0 1-6.900-12.600c-.4-10.600 3.300-21.500 11.700-29.800l21.100-21.100c5.500-5.500 14.200-6.200 20.600-1.700a152.500 152.500 0 0 1 20.500 17.200zM467.500 44.400c-59.300-59.300-155.700-59.300-215 0l-67.200 67.200c-.1.100-.3.300-.4.400-58.600 58.900-59.400 154.800.4 214.600a152.500 152.500 0 0 0 20.500 17.200c6.400 4.500 15.100 3.800 20.600-1.700l21.100-21.100c8.400-8.400 12.100-19.200 11.700-29.800a16 16 0 0 0-6.900-12.600c-2.900-2-6.600-4.900-10.300-8.600-28.100-28.100-28.200-73.600 0-101.800l67.200-67.200c28.200-28.200 74.300-28.100 102.300.5 27.800 28.300 26.900 73.900-1.200 102l-13.100 13.100c-4.400 4.400-5.800 10.800-3.800 16.600 5.900 17.200 9 35 9.700 52.700.5 13.900 17.500 20.400 27.300 10.600l37.100-37.100c59.300-59.300 59.300-155.700 0-215z"/></svg></div>
<div class="c bl t" style="left:692.0px;width:143.0px"><span>80.00 €</span></div>
<div class="c p t" style="left:835.0px;width:183.0px"><span>19/01/2022 16:25:07</span></div>
<div class="c bl t" style="left:1018.0px;width:227.0px"><span></span></div>
<div class="c bl t" style="left:1245.0px;width:195.0px"><span>Via Stella, 22</span></div>
<div class="c bl t" style="left:1440.0px;width:99.0px"><span>Modena</span></div>
</div>
<div class="row alt" style="top:393.20px">
<div class="c p" style="left:0.0px;width:35.0px"><div class="cb"></div></div>
<div class="c p" style="left:35.0px;width:34.0px"><svg width="14.00" height="14.00" viewBox="0 0 512 512" preserveAspectRatio="none" style="position:absolute;left:9.20px;top:5.90px;"><path fill="#222" d="M487.400 315.700l-42.600-24.600c4.300-23.200 4.300-47 0-70.200l42.600-24.600c4.900-2.800 7.100-8.600 5.500-14-11.100-35.600-30-67.800-54.700-94.600-3.800-4.100-10-5.100-14.800-2.300L380.800 110c-17.900-15.400-38.500-27.300-60.800-35.100V25.800c0-5.600-3.900-10.500-9.400-11.700-36.700-8.200-74.300-7.800-109.200 0-5.500 1.200-9.400 6.100-9.400 11.700V75c-22.200 7.900-42.800 19.800-60.800 35.100L88.700 85.500c-4.900-2.800-11-1.900-14.800 2.300-24.700 26.700-43.600 58.900-54.700 94.600-1.700 5.400.6 11.200 5.500 14L67.300 221c-4.300 23.200-4.300 47 0 70.200l-42.600 24.600c-4.900 2.800-7.100 8.600-5.500 14 11.100 35.600 30 67.800 54.700 94.600 3.800 4.100 10 5.100 14.800 2.300l42.600-24.600c17.900 15.400 38.500 27.300 60.800 35.100v49.200c0 5.600 3.900 10.500 9.400 11.700 36.700 8.200 74.300 7.800 109.200 0 5.500-1.200 9.400-6.100 9.400-11.700v-49.200c22.200-7.900 42.800-19.800 60.800-35.100l42.600 24.600c4.900 2.800 11 1.900 14.800-2.300 24.700-26.700 43.600-58.900 54.700-94.600 1.500-5.500-.7-11.300-5.600-14.100zM256 336c-44.100 0-80-35.900-80-80s35.900-80 80-80 80 35.900 80 80-35.900 80-80 80z"/></svg></div>
<div class="c bl" style="left:69.0px;width:262.0px"><div class="sel" style="left:3.0px;width:237.6px"><span>Osteria Francescana</span><svg width="8.20" height="4.60" viewBox="0 0 128.0 72.0" preserveAspectRatio="none" style="position:absolute;left:221.40px;top:7.80px;" ><path fill="#000" d="M125.6 13.6 69.6 69.6Q67.2 72 64 72Q60.8 72 58.4 69.6L2.4 13.6Q0 11.2 0 8Q0 4.8 2.4 2.4Q4.8 0 8 0H120Q123.2 0 125.6 2.4Q128 4.8 128 8Q128 11.2 125.6 13.6Z"/></svg></div><svg width="13.80" height="13.60" viewBox="0 0 512 512" preserveAspectRatio="none" style="position:absolute;left:244.00px;top:6.00px;"><path fill="#000" d="M326.600 185.400c59.700 59.800 58.900 155.700.4 214.600-.1.100-.2.300-.4.400l-67.200 67.200c-59.300 59.300-155.700 59.300-215 0-59.300-59.300-59.300-155.700 0-215l37.100-37.100c9.800-9.800 26.800-3.300 27.300 10.600.6 17.700 3.800 35.500 9.700 52.700 2 5.800.6 12.300-3.800 16.600l-13.100 13.100c-28 28-28.900 73.700-1.200 102 28 28.600 74.100 28.700 102.300.5l67.200-67.200c28.200-28.200 28.100-73.800 0-101.800-3.700-3.700-7.400-6.600-10.300-8.600a16 16 0 0 1-6.900-12.600c-.4-10.600 3.300-21.500 11.700-29.800l21.100-21.100c5.500-5.500 14.200-6.200 20.600-1.700a152.500 152.500 0 0 1 20.500 17.200zM467.500 44.400c-59.300-59.300-155.700-59.300-215 0l-67.200 67.200c-.1.100-.3.300-.4.400-58.600 58.900-59.400 154.800.4 214.600a152.500 152.500 0 0 0 20.500 17.200c6.400 4.500 15.100 3.800 20.600-1.700l21.100-21.100c8.400-8.400 12.100-19.200 11.700-29.800a16 16 0 0 0-6.900-12.600c-2.900-2-6.600-4.900-10.300-8.600-28.100-28.100-28.200-73.600 0-101.800l67.200-67.200c28.200-28.200 74.300-28.100 102.300.5 27.800 28.300 26.900 73.900-1.200 102l-13.100 13.100c-4.400 4.400-5.800 10.800-3.800 16.600 5.900 17.200 9 35 9.700 52.700.5 13.900 17.500 20.400 27.300 10.600l37.100-37.100c59.300-59.300 59.300-155.700 0-215z"/></svg></div>
<div class="c bl" style="left:331.0px;width:127.0px"><div class="sel" style="left:3.0px;width:120.3px"><span>McCoy</span><svg width="8.20" height="4.60" viewBox="0 0 128.0 72.0" preserveAspectRatio="none" style="position:absolute;left:103.60px;top:7.80px;" ><path fill="#000" d="M125.6 13.6 69.6 69.6Q67.2 72 64 72Q60.8 72 58.4 69.6L2.4 13.6Q0 11.2 0 8Q0 4.8 2.4 2.4Q4.8 0 8 0H120Q123.2 0 125.6 2.4Q128 4.8 128 8Q128 11.2 125.6 13.6Z"/></svg></div></div>
<div class="c bl" style="left:458.0px;width:234.0px"><div class="sel" style="left:3.0px;width:209.6px"><span>Primo Frutto Bio 500 ml</span><svg width="8.20" height="4.60" viewBox="0 0 128.0 72.0" preserveAspectRatio="none" style="position:absolute;left:193.80px;top:7.80px;" ><path fill="#000" d="M125.6 13.6 69.6 69.6Q67.2 72 64 72Q60.8 72 58.4 69.6L2.4 13.6Q0 11.2 0 8Q0 4.8 2.4 2.4Q4.8 0 8 0H120Q123.2 0 125.6 2.4Q128 4.8 128 8Q128 11.2 125.6 13.6Z"/></svg></div><svg width="13.80" height="13.60" viewBox="0 0 512 512" preserveAspectRatio="none" style="position:absolute;left:216.20px;top:6.00px;"><path fill="#000" d="M326.600 185.400c59.700 59.800 58.900 155.700.4 214.600-.1.100-.2.300-.4.400l-67.200 67.200c-59.300 59.300-155.700 59.300-215 0-59.300-59.300-59.300-155.700 0-215l37.100-37.100c9.800-9.800 26.800-3.300 27.300 10.600.6 17.700 3.800 35.500 9.700 52.700 2 5.800.6 12.300-3.800 16.600l-13.100 13.100c-28 28-28.900 73.700-1.200 102 28 28.600 74.100 28.700 102.300.5l67.200-67.200c28.200-28.200 28.100-73.800 0-101.800-3.700-3.700-7.400-6.600-10.300-8.600a16 16 0 0 1-6.900-12.600c-.4-10.600 3.300-21.500 11.700-29.800l21.100-21.100c5.500-5.500 14.200-6.200 20.600-1.700a152.500 152.500 0 0 1 20.500 17.200zM467.500 44.400c-59.300-59.300-155.700-59.300-215 0l-67.200 67.200c-.1.100-.3.300-.4.400-58.600 58.900-59.400 154.800.4 214.600a152.500 152.500 0 0 0 20.500 17.200c6.400 4.500 15.100 3.800 20.600-1.700l21.100-21.100c8.400-8.400 12.100-19.200 11.700-29.800a16 16 0 0 0-6.900-12.600c-2.900-2-6.600-4.900-10.300-8.600-28.100-28.100-28.200-73.600 0-101.800l67.200-67.200c28.200-28.200 74.300-28.100 102.300.5 27.800 28.300 26.900 73.900-1.200 102l-13.100 13.100c-4.400 4.400-5.800 10.800-3.800 16.600 5.900 17.200 9 35 9.700 52.700.5 13.900 17.500 20.400 27.300 10.600l37.100-37.100c59.300-59.300 59.300-155.700 0-215z"/></svg></div>
<div class="c bl t" style="left:692.0px;width:143.0px"><span>80.00 €</span></div>
<div class="c p t" style="left:835.0px;width:183.0px"><span>22/12/2021 12:03:16</span></div>
<div class="c bl t" style="left:1018.0px;width:227.0px"><span></span></div>
<div class="c bl t" style="left:1245.0px;width:195.0px"><span>Via Stella, 22</span></div>
<div class="c bl t" style="left:1440.0px;width:99.0px"><span>Modena</span></div>
</div>
<div class="row" style="top:419.40px">
<div class="c p" style="left:0.0px;width:35.0px"><div class="cb"></div></div>
<div class="c p" style="left:35.0px;width:34.0px"><svg width="14.00" height="14.00" viewBox="0 0 512 512" preserveAspectRatio="none" style="position:absolute;left:9.20px;top:5.90px;"><path fill="#222" d="M487.400 315.700l-42.600-24.600c4.300-23.200 4.300-47 0-70.200l42.600-24.600c4.900-2.800 7.100-8.600 5.500-14-11.100-35.600-30-67.800-54.700-94.600-3.800-4.100-10-5.100-14.800-2.300L380.800 110c-17.900-15.400-38.500-27.300-60.800-35.100V25.800c0-5.600-3.900-10.500-9.400-11.700-36.700-8.200-74.300-7.800-109.200 0-5.500 1.200-9.400 6.100-9.400 11.700V75c-22.200 7.900-42.800 19.800-60.800 35.100L88.700 85.500c-4.900-2.800-11-1.900-14.800 2.300-24.700 26.700-43.600 58.900-54.700 94.600-1.700 5.400.6 11.200 5.500 14L67.300 221c-4.300 23.200-4.300 47 0 70.200l-42.600 24.600c-4.900 2.800-7.100 8.600-5.500 14 11.100 35.600 30 67.800 54.700 94.600 3.800 4.100 10 5.100 14.800 2.300l42.600-24.600c17.900 15.400 38.500 27.300 60.800 35.100v49.200c0 5.600 3.900 10.500 9.400 11.700 36.700 8.200 74.300 7.800 109.200 0 5.500-1.200 9.400-6.100 9.400-11.700v-49.200c22.200-7.900 42.800-19.800 60.800-35.100l42.600 24.600c4.900 2.800 11 1.900 14.800-2.300 24.700-26.700 43.600-58.900 54.700-94.600 1.500-5.500-.7-11.300-5.600-14.100zM256 336c-44.100 0-80-35.900-80-80s35.900-80 80-80 80 35.900 80 80-35.900 80-80 80z"/></svg></div>
<div class="c bl" style="left:69.0px;width:262.0px"><div class="sel" style="left:3.0px;width:237.6px"><span>Osteria Francescana</span><svg width="8.20" height="4.60" viewBox="0 0 128.0 72.0" preserveAspectRatio="none" style="position:absolute;left:221.40px;top:7.80px;" ><path fill="#000" d="M125.6 13.6 69.6 69.6Q67.2 72 64 72Q60.8 72 58.4 69.6L2.4 13.6Q0 11.2 0 8Q0 4.8 2.4 2.4Q4.8 0 8 0H120Q123.2 0 125.6 2.4Q128 4.8 128 8Q128 11.2 125.6 13.6Z"/></svg></div><svg width="13.80" height="13.60" viewBox="0 0 512 512" preserveAspectRatio="none" style="position:absolute;left:244.00px;top:6.00px;"><path fill="#000" d="M326.600 185.400c59.700 59.800 58.900 155.700.4 214.600-.1.100-.2.300-.4.400l-67.200 67.200c-59.300 59.300-155.700 59.300-215 0-59.300-59.300-59.300-155.700 0-215l37.100-37.100c9.800-9.800 26.800-3.300 27.300 10.600.6 17.700 3.800 35.500 9.700 52.700 2 5.800.6 12.300-3.800 16.600l-13.100 13.100c-28 28-28.900 73.700-1.200 102 28 28.600 74.100 28.700 102.300.5l67.200-67.200c28.200-28.200 28.100-73.800 0-101.800-3.700-3.700-7.400-6.600-10.300-8.600a16 16 0 0 1-6.900-12.600c-.4-10.600 3.300-21.500 11.700-29.800l21.100-21.100c5.500-5.500 14.200-6.200 20.600-1.700a152.500 152.500 0 0 1 20.500 17.200zM467.500 44.400c-59.300-59.300-155.700-59.300-215 0l-67.200 67.200c-.1.100-.3.300-.4.400-58.600 58.900-59.400 154.800.4 214.600a152.500 152.500 0 0 0 20.500 17.200c6.400 4.500 15.100 3.800 20.600-1.700l21.100-21.100c8.400-8.400 12.100-19.200 11.700-29.800a16 16 0 0 0-6.900-12.600c-2.900-2-6.600-4.900-10.300-8.600-28.100-28.100-28.200-73.600 0-101.800l67.200-67.200c28.200-28.200 74.300-28.100 102.300.5 27.800 28.300 26.900 73.900-1.200 102l-13.100 13.100c-4.400 4.400-5.800 10.800-3.800 16.600 5.900 17.200 9 35 9.700 52.700.5 13.900 17.500 20.400 27.300 10.600l37.100-37.100c59.300-59.300 59.300-155.700 0-215z"/></svg></div>
<div class="c bl" style="left:331.0px;width:127.0px"><div class="sel" style="left:3.0px;width:120.3px"><span>McCoy</span><svg width="8.20" height="4.60" viewBox="0 0 128.0 72.0" preserveAspectRatio="none" style="position:absolute;left:103.60px;top:7.80px;" ><path fill="#000" d="M125.6 13.6 69.6 69.6Q67.2 72 64 72Q60.8 72 58.4 69.6L2.4 13.6Q0 11.2 0 8Q0 4.8 2.4 2.4Q4.8 0 8 0H120Q123.2 0 125.6 2.4Q128 4.8 128 8Q128 11.2 125.6 13.6Z"/></svg></div></div>
<div class="c bl" style="left:458.0px;width:234.0px"><div class="sel" style="left:3.0px;width:209.6px"><span>Primo Frutto Bio 500 ml</span><svg width="8.20" height="4.60" viewBox="0 0 128.0 72.0" preserveAspectRatio="none" style="position:absolute;left:193.80px;top:7.80px;" ><path fill="#000" d="M125.6 13.6 69.6 69.6Q67.2 72 64 72Q60.8 72 58.4 69.6L2.4 13.6Q0 11.2 0 8Q0 4.8 2.4 2.4Q4.8 0 8 0H120Q123.2 0 125.6 2.4Q128 4.8 128 8Q128 11.2 125.6 13.6Z"/></svg></div><svg width="13.80" height="13.60" viewBox="0 0 512 512" preserveAspectRatio="none" style="position:absolute;left:216.20px;top:6.00px;"><path fill="#000" d="M326.600 185.400c59.700 59.800 58.900 155.700.4 214.600-.1.100-.2.300-.4.400l-67.200 67.200c-59.300 59.300-155.700 59.300-215 0-59.300-59.300-59.300-155.700 0-215l37.100-37.100c9.800-9.800 26.800-3.300 27.300 10.600.6 17.700 3.800 35.500 9.700 52.700 2 5.800.6 12.300-3.800 16.600l-13.100 13.100c-28 28-28.900 73.700-1.200 102 28 28.600 74.100 28.700 102.300.5l67.200-67.200c28.200-28.200 28.100-73.800 0-101.800-3.700-3.700-7.400-6.600-10.300-8.600a16 16 0 0 1-6.900-12.600c-.4-10.600 3.300-21.500 11.700-29.800l21.100-21.100c5.500-5.500 14.200-6.200 20.600-1.700a152.500 152.500 0 0 1 20.500 17.200zM467.500 44.400c-59.300-59.300-155.700-59.300-215 0l-67.200 67.200c-.1.100-.3.300-.4.400-58.600 58.900-59.400 154.800.4 214.600a152.500 152.500 0 0 0 20.500 17.200c6.400 4.500 15.100 3.800 20.600-1.700l21.100-21.100c8.400-8.400 12.100-19.200 11.700-29.800a16 16 0 0 0-6.900-12.600c-2.900-2-6.600-4.900-10.300-8.600-28.100-28.100-28.200-73.600 0-101.800l67.200-67.200c28.200-28.200 74.300-28.100 102.300.5 27.800 28.300 26.900 73.900-1.200 102l-13.100 13.100c-4.400 4.400-5.800 10.800-3.800 16.600 5.900 17.200 9 35 9.700 52.700.5 13.900 17.500 20.400 27.300 10.600l37.100-37.100c59.300-59.300 59.300-155.700 0-215z"/></svg></div>
<div class="c bl t" style="left:692.0px;width:143.0px"><span>80.00 €</span></div>
<div class="c p t" style="left:835.0px;width:183.0px"><span>22/12/2021 12:03:17</span></div>
<div class="c bl t" style="left:1018.0px;width:227.0px"><span></span></div>
<div class="c bl t" style="left:1245.0px;width:195.0px"><span>Via Stella, 22</span></div>
<div class="c bl t" style="left:1440.0px;width:99.0px"><span>Modena</span></div>
</div>
<div class="row alt" style="top:445.60px">
<div class="c p" style="left:0.0px;width:35.0px"><div class="cb"></div></div>
<div class="c p" style="left:35.0px;width:34.0px"><svg width="14.00" height="14.00" viewBox="0 0 512 512" preserveAspectRatio="none" style="position:absolute;left:9.20px;top:5.90px;"><path fill="#222" d="M487.400 315.700l-42.600-24.600c4.300-23.200 4.300-47 0-70.200l42.600-24.600c4.900-2.800 7.100-8.600 5.500-14-11.100-35.600-30-67.800-54.700-94.600-3.800-4.100-10-5.100-14.800-2.300L380.800 110c-17.900-15.400-38.500-27.300-60.800-35.100V25.800c0-5.600-3.900-10.500-9.400-11.700-36.700-8.200-74.300-7.800-109.200 0-5.500 1.200-9.400 6.100-9.400 11.700V75c-22.200 7.900-42.800 19.800-60.800 35.100L88.700 85.500c-4.900-2.800-11-1.900-14.800 2.300-24.700 26.700-43.600 58.900-54.700 94.600-1.700 5.400.6 11.200 5.500 14L67.300 221c-4.300 23.200-4.300 47 0 70.200l-42.600 24.600c-4.900 2.800-7.100 8.600-5.500 14 11.100 35.600 30 67.800 54.700 94.600 3.800 4.100 10 5.100 14.800 2.300l42.600-24.600c17.900 15.400 38.500 27.300 60.800 35.100v49.200c0 5.600 3.900 10.500 9.400 11.700 36.700 8.200 74.300 7.800 109.200 0 5.500-1.200 9.400-6.100 9.400-11.700v-49.200c22.200-7.900 42.800-19.800 60.800-35.100l42.600 24.600c4.900 2.800 11 1.900 14.800-2.300 24.700-26.700 43.600-58.900 54.700-94.600 1.500-5.500-.7-11.300-5.600-14.100zM256 336c-44.100 0-80-35.900-80-80s35.900-80 80-80 80 35.900 80 80-35.900 80-80 80z"/></svg></div>
<div class="c bl" style="left:69.0px;width:262.0px"><div class="sel" style="left:3.0px;width:237.6px"><span>Osteria Francescana</span><svg width="8.20" height="4.60" viewBox="0 0 128.0 72.0" preserveAspectRatio="none" style="position:absolute;left:221.40px;top:7.80px;" ><path fill="#000" d="M125.6 13.6 69.6 69.6Q67.2 72 64 72Q60.8 72 58.4 69.6L2.4 13.6Q0 11.2 0 8Q0 4.8 2.4 2.4Q4.8 0 8 0H120Q123.2 0 125.6 2.4Q128 4.8 128 8Q128 11.2 125.6 13.6Z"/></svg></div><svg width="13.80" height="13.60" viewBox="0 0 512 512" preserveAspectRatio="none" style="position:absolute;left:244.00px;top:6.00px;"><path fill="#000" d="M326.600 185.400c59.700 59.800 58.900 155.700.4 214.600-.1.100-.2.300-.4.400l-67.200 67.200c-59.300 59.300-155.700 59.300-215 0-59.300-59.300-59.300-155.700 0-215l37.100-37.100c9.800-9.800 26.800-3.300 27.300 10.600.6 17.700 3.800 35.500 9.700 52.700 2 5.800.6 12.300-3.800 16.600l-13.100 13.100c-28 28-28.900 73.700-1.200 102 28 28.600 74.100 28.700 102.300.5l67.200-67.200c28.200-28.200 28.100-73.800 0-101.800-3.700-3.700-7.400-6.600-10.300-8.600a16 16 0 0 1-6.900-12.600c-.4-10.600 3.300-21.500 11.700-29.800l21.100-21.100c5.500-5.500 14.200-6.200 20.600-1.700a152.500 152.500 0 0 1 20.500 17.200zM467.500 44.400c-59.300-59.300-155.700-59.300-215 0l-67.200 67.200c-.1.100-.3.300-.4.400-58.600 58.900-59.400 154.800.4 214.600a152.500 152.500 0 0 0 20.500 17.200c6.400 4.500 15.100 3.800 20.600-1.700l21.100-21.100c8.400-8.400 12.100-19.200 11.700-29.800a16 16 0 0 0-6.900-12.600c-2.900-2-6.600-4.900-10.300-8.600-28.100-28.100-28.200-73.600 0-101.800l67.200-67.200c28.200-28.200 74.300-28.100 102.300.5 27.800 28.300 26.900 73.900-1.200 102l-13.100 13.100c-4.400 4.400-5.800 10.800-3.800 16.600 5.900 17.200 9 35 9.700 52.700.5 13.900 17.500 20.400 27.300 10.600l37.100-37.100c59.300-59.300 59.300-155.700 0-215z"/></svg></div>
<div class="c bl" style="left:331.0px;width:127.0px"><div class="sel" style="left:3.0px;width:120.3px"><span>McCoy</span><svg width="8.20" height="4.60" viewBox="0 0 128.0 72.0" preserveAspectRatio="none" style="position:absolute;left:103.60px;top:7.80px;" ><path fill="#000" d="M125.6 13.6 69.6 69.6Q67.2 72 64 72Q60.8 72 58.4 69.6L2.4 13.6Q0 11.2 0 8Q0 4.8 2.4 2.4Q4.8 0 8 0H120Q123.2 0 125.6 2.4Q128 4.8 128 8Q128 11.2 125.6 13.6Z"/></svg></div></div>
<div class="c bl" style="left:458.0px;width:234.0px"><div class="sel" style="left:3.0px;width:209.6px"><span>Primo Frutto Bio 500 ml</span><svg width="8.20" height="4.60" viewBox="0 0 128.0 72.0" preserveAspectRatio="none" style="position:absolute;left:193.80px;top:7.80px;" ><path fill="#000" d="M125.6 13.6 69.6 69.6Q67.2 72 64 72Q60.8 72 58.4 69.6L2.4 13.6Q0 11.2 0 8Q0 4.8 2.4 2.4Q4.8 0 8 0H120Q123.2 0 125.6 2.4Q128 4.8 128 8Q128 11.2 125.6 13.6Z"/></svg></div><svg width="13.80" height="13.60" viewBox="0 0 512 512" preserveAspectRatio="none" style="position:absolute;left:216.20px;top:6.00px;"><path fill="#000" d="M326.600 185.400c59.700 59.800 58.900 155.700.4 214.600-.1.100-.2.300-.4.400l-67.200 67.200c-59.300 59.300-155.700 59.300-215 0-59.300-59.300-59.300-155.700 0-215l37.100-37.100c9.800-9.800 26.800-3.300 27.300 10.600.6 17.700 3.800 35.500 9.700 52.700 2 5.800.6 12.300-3.800 16.600l-13.100 13.100c-28 28-28.900 73.700-1.200 102 28 28.600 74.100 28.700 102.300.5l67.200-67.200c28.200-28.200 28.100-73.800 0-101.800-3.700-3.700-7.400-6.600-10.300-8.600a16 16 0 0 1-6.900-12.600c-.4-10.600 3.300-21.500 11.700-29.800l21.100-21.100c5.500-5.500 14.200-6.200 20.600-1.700a152.500 152.500 0 0 1 20.500 17.200zM467.500 44.400c-59.300-59.300-155.700-59.300-215 0l-67.200 67.200c-.1.100-.3.300-.4.400-58.600 58.900-59.400 154.800.4 214.600a152.500 152.500 0 0 0 20.500 17.200c6.400 4.500 15.100 3.800 20.600-1.700l21.100-21.100c8.400-8.400 12.100-19.200 11.700-29.800a16 16 0 0 0-6.900-12.600c-2.900-2-6.600-4.900-10.300-8.600-28.100-28.100-28.200-73.600 0-101.800l67.200-67.200c28.200-28.200 74.300-28.100 102.300.5 27.800 28.300 26.900 73.900-1.200 102l-13.100 13.100c-4.400 4.400-5.800 10.800-3.800 16.600 5.900 17.200 9 35 9.700 52.700.5 13.900 17.500 20.400 27.300 10.600l37.100-37.100c59.300-59.300 59.300-155.700 0-215z"/></svg></div>
<div class="c bl t" style="left:692.0px;width:143.0px"><span>80.00 €</span></div>
<div class="c p t" style="left:835.0px;width:183.0px"><span>22/12/2021 12:01:41</span></div>
<div class="c bl t" style="left:1018.0px;width:227.0px"><span></span></div>
<div class="c bl t" style="left:1245.0px;width:195.0px"><span>Via Stella, 22</span></div>
<div class="c bl t" style="left:1440.0px;width:99.0px"><span>Modena</span></div>
</div>
<div class="row" style="top:471.80px">
<div class="c p" style="left:0.0px;width:35.0px"><div class="cb"></div></div>
<div class="c p" style="left:35.0px;width:34.0px"><svg width="14.00" height="14.00" viewBox="0 0 512 512" preserveAspectRatio="none" style="position:absolute;left:9.20px;top:5.90px;"><path fill="#222" d="M487.400 315.700l-42.600-24.600c4.300-23.200 4.300-47 0-70.200l42.600-24.600c4.900-2.800 7.100-8.600 5.500-14-11.100-35.600-30-67.800-54.700-94.600-3.800-4.100-10-5.100-14.800-2.300L380.800 110c-17.900-15.400-38.500-27.300-60.800-35.100V25.800c0-5.600-3.900-10.500-9.400-11.700-36.700-8.200-74.300-7.800-109.200 0-5.500 1.200-9.400 6.100-9.400 11.700V75c-22.200 7.900-42.800 19.800-60.800 35.100L88.700 85.500c-4.900-2.800-11-1.900-14.800 2.300-24.700 26.700-43.600 58.900-54.700 94.600-1.700 5.400.6 11.200 5.500 14L67.300 221c-4.300 23.200-4.300 47 0 70.200l-42.600 24.600c-4.900 2.800-7.100 8.600-5.500 14 11.100 35.600 30 67.800 54.700 94.600 3.800 4.100 10 5.100 14.800 2.300l42.600-24.600c17.900 15.400 38.500 27.300 60.800 35.100v49.200c0 5.600 3.900 10.500 9.400 11.700 36.700 8.200 74.300 7.800 109.200 0 5.500-1.200 9.400-6.100 9.400-11.700v-49.200c22.200-7.900 42.800-19.800 60.800-35.100l42.600 24.600c4.900 2.800 11 1.900 14.800-2.300 24.700-26.700 43.600-58.900 54.700-94.600 1.500-5.500-.7-11.300-5.600-14.100zM256 336c-44.100 0-80-35.900-80-80s35.900-80 80-80 80 35.900 80 80-35.900 80-80 80z"/></svg></div>
<div class="c bl" style="left:69.0px;width:262.0px"><div class="sel" style="left:3.0px;width:237.6px"><span>Osteria Francescana</span><svg width="8.20" height="4.60" viewBox="0 0 128.0 72.0" preserveAspectRatio="none" style="position:absolute;left:221.40px;top:7.80px;" ><path fill="#000" d="M125.6 13.6 69.6 69.6Q67.2 72 64 72Q60.8 72 58.4 69.6L2.4 13.6Q0 11.2 0 8Q0 4.8 2.4 2.4Q4.8 0 8 0H120Q123.2 0 125.6 2.4Q128 4.8 128 8Q128 11.2 125.6 13.6Z"/></svg></div><svg width="13.80" height="13.60" viewBox="0 0 512 512" preserveAspectRatio="none" style="position:absolute;left:244.00px;top:6.00px;"><path fill="#000" d="M326.600 185.400c59.700 59.800 58.900 155.700.4 214.600-.1.100-.2.300-.4.400l-67.200 67.200c-59.300 59.300-155.700 59.300-215 0-59.300-59.300-59.300-155.700 0-215l37.100-37.100c9.800-9.800 26.800-3.300 27.300 10.600.6 17.700 3.800 35.500 9.700 52.700 2 5.800.6 12.300-3.800 16.600l-13.100 13.100c-28 28-28.900 73.700-1.200 102 28 28.600 74.100 28.700 102.300.5l67.200-67.200c28.200-28.200 28.100-73.800 0-101.800-3.700-3.700-7.400-6.600-10.300-8.600a16 16 0 0 1-6.900-12.600c-.4-10.600 3.300-21.500 11.700-29.800l21.100-21.100c5.500-5.500 14.200-6.200 20.600-1.700a152.500 152.500 0 0 1 20.500 17.200zM467.500 44.400c-59.300-59.300-155.700-59.300-215 0l-67.200 67.200c-.1.100-.3.300-.4.400-58.600 58.900-59.400 154.800.4 214.600a152.500 152.500 0 0 0 20.500 17.200c6.400 4.500 15.100 3.800 20.600-1.700l21.100-21.100c8.400-8.400 12.100-19.200 11.700-29.800a16 16 0 0 0-6.900-12.600c-2.900-2-6.600-4.900-10.300-8.600-28.100-28.100-28.200-73.600 0-101.800l67.200-67.200c28.200-28.200 74.300-28.100 102.300.5 27.800 28.300 26.900 73.900-1.200 102l-13.100 13.100c-4.400 4.400-5.800 10.800-3.800 16.600 5.900 17.200 9 35 9.700 52.700.5 13.900 17.500 20.400 27.300 10.600l37.100-37.100c59.300-59.300 59.300-155.700 0-215z"/></svg></div>
<div class="c bl" style="left:331.0px;width:127.0px"><div class="sel" style="left:3.0px;width:120.3px"><span>McCoy</span><svg width="8.20" height="4.60" viewBox="0 0 128.0 72.0" preserveAspectRatio="none" style="position:absolute;left:103.60px;top:7.80px;" ><path fill="#000" d="M125.6 13.6 69.6 69.6Q67.2 72 64 72Q60.8 72 58.4 69.6L2.4 13.6Q0 11.2 0 8Q0 4.8 2.4 2.4Q4.8 0 8 0H120Q123.2 0 125.6 2.4Q128 4.8 128 8Q128 11.2 125.6 13.6Z"/></svg></div></div>
<div class="c bl" style="left:458.0px;width:234.0px"><div class="sel" style="left:3.0px;width:209.6px"><span>Primo Frutto Bio 500 ml</span><svg width="8.20" height="4.60" viewBox="0 0 128.0 72.0" preserveAspectRatio="none" style="position:absolute;left:193.80px;top:7.80px;" ><path fill="#000" d="M125.6 13.6 69.6 69.6Q67.2 72 64 72Q60.8 72 58.4 69.6L2.4 13.6Q0 11.2 0 8Q0 4.8 2.4 2.4Q4.8 0 8 0H120Q123.2 0 125.6 2.4Q128 4.8 128 8Q128 11.2 125.6 13.6Z"/></svg></div><svg width="13.80" height="13.60" viewBox="0 0 512 512" preserveAspectRatio="none" style="position:absolute;left:216.20px;top:6.00px;"><path fill="#000" d="M326.600 185.400c59.700 59.800 58.900 155.700.4 214.600-.1.100-.2.300-.4.400l-67.200 67.200c-59.300 59.300-155.700 59.300-215 0-59.300-59.300-59.300-155.700 0-215l37.100-37.100c9.800-9.800 26.800-3.300 27.300 10.600.6 17.700 3.800 35.500 9.700 52.700 2 5.800.6 12.300-3.800 16.600l-13.100 13.100c-28 28-28.900 73.700-1.200 102 28 28.600 74.100 28.700 102.300.5l67.200-67.200c28.200-28.200 28.100-73.800 0-101.800-3.700-3.700-7.400-6.600-10.300-8.600a16 16 0 0 1-6.900-12.600c-.4-10.600 3.300-21.500 11.700-29.800l21.100-21.100c5.500-5.500 14.200-6.200 20.600-1.700a152.500 152.500 0 0 1 20.500 17.200zM467.500 44.400c-59.300-59.300-155.700-59.300-215 0l-67.200 67.200c-.1.100-.3.300-.4.400-58.600 58.900-59.400 154.800.4 214.600a152.500 152.500 0 0 0 20.500 17.200c6.400 4.500 15.100 3.800 20.600-1.700l21.100-21.100c8.400-8.400 12.100-19.200 11.700-29.800a16 16 0 0 0-6.900-12.600c-2.900-2-6.600-4.900-10.300-8.600-28.100-28.100-28.200-73.600 0-101.800l67.200-67.200c28.200-28.200 74.300-28.100 102.300.5 27.800 28.300 26.900 73.900-1.200 102l-13.100 13.100c-4.400 4.400-5.800 10.800-3.800 16.600 5.900 17.200 9 35 9.700 52.700.5 13.900 17.500 20.400 27.300 10.600l37.100-37.100c59.300-59.300 59.300-155.700 0-215z"/></svg></div>
<div class="c bl t" style="left:692.0px;width:143.0px"><span>80.00 €</span></div>
<div class="c p t" style="left:835.0px;width:183.0px"><span>22/12/2021 12:02:12</span></div>
<div class="c bl t" style="left:1018.0px;width:227.0px"><span></span></div>
<div class="c bl t" style="left:1245.0px;width:195.0px"><span>Via Stella, 22</span></div>
<div class="c bl t" style="left:1440.0px;width:99.0px"><span>Modena</span></div>
</div>
<div class="row alt" style="top:498.00px">
<div class="c p" style="left:0.0px;width:35.0px"><div class="cb"></div></div>
<div class="c p" style="left:35.0px;width:34.0px"><svg width="14.00" height="14.00" viewBox="0 0 512 512" preserveAspectRatio="none" style="position:absolute;left:9.20px;top:5.90px;"><path fill="#222" d="M487.400 315.700l-42.600-24.600c4.300-23.200 4.300-47 0-70.200l42.600-24.600c4.900-2.800 7.100-8.600 5.500-14-11.100-35.600-30-67.800-54.700-94.600-3.800-4.100-10-5.100-14.800-2.300L380.800 110c-17.900-15.400-38.500-27.300-60.800-35.100V25.800c0-5.600-3.900-10.500-9.400-11.700-36.700-8.200-74.300-7.800-109.200 0-5.500 1.200-9.400 6.100-9.400 11.700V75c-22.200 7.900-42.800 19.800-60.800 35.100L88.700 85.500c-4.900-2.800-11-1.900-14.800 2.300-24.700 26.700-43.600 58.900-54.700 94.600-1.700 5.400.6 11.200 5.500 14L67.300 221c-4.300 23.200-4.300 47 0 70.200l-42.600 24.600c-4.900 2.800-7.100 8.600-5.500 14 11.100 35.600 30 67.800 54.700 94.600 3.800 4.100 10 5.100 14.800 2.300l42.600-24.600c17.900 15.400 38.500 27.300 60.800 35.100v49.200c0 5.600 3.900 10.500 9.400 11.700 36.700 8.200 74.300 7.800 109.200 0 5.500-1.200 9.400-6.100 9.400-11.700v-49.200c22.200-7.900 42.800-19.800 60.800-35.100l42.600 24.600c4.900 2.800 11 1.900 14.800-2.300 24.700-26.700 43.600-58.900 54.700-94.600 1.500-5.500-.7-11.300-5.600-14.100zM256 336c-44.100 0-80-35.900-80-80s35.900-80 80-80 80 35.900 80 80-35.900 80-80 80z"/></svg></div>
<div class="c bl" style="left:69.0px;width:262.0px"><div class="sel" style="left:3.0px;width:237.6px"><span>Osteria Francescana</span><svg width="8.20" height="4.60" viewBox="0 0 128.0 72.0" preserveAspectRatio="none" style="position:absolute;left:221.40px;top:7.80px;" ><path fill="#000" d="M125.6 13.6 69.6 69.6Q67.2 72 64 72Q60.8 72 58.4 69.6L2.4 13.6Q0 11.2 0 8Q0 4.8 2.4 2.4Q4.8 0 8 0H120Q123.2 0 125.6 2.4Q128 4.8 128 8Q128 11.2 125.6 13.6Z"/></svg></div><svg width="13.80" height="13.60" viewBox="0 0 512 512" preserveAspectRatio="none" style="position:absolute;left:244.00px;top:6.00px;"><path fill="#000" d="M326.600 185.400c59.700 59.800 58.900 155.700.4 214.600-.1.100-.2.300-.4.400l-67.200 67.200c-59.300 59.300-155.700 59.300-215 0-59.300-59.300-59.300-155.700 0-215l37.100-37.100c9.800-9.800 26.800-3.300 27.300 10.600.6 17.700 3.800 35.500 9.700 52.700 2 5.800.6 12.300-3.800 16.600l-13.100 13.100c-28 28-28.900 73.700-1.200 102 28 28.600 74.100 28.700 102.300.5l67.200-67.200c28.200-28.200 28.100-73.800 0-101.800-3.700-3.700-7.400-6.600-10.300-8.600a16 16 0 0 1-6.900-12.600c-.4-10.600 3.300-21.500 11.700-29.800l21.100-21.100c5.500-5.500 14.200-6.200 20.600-1.700a152.500 152.500 0 0 1 20.500 17.200zM467.500 44.400c-59.300-59.300-155.700-59.300-215 0l-67.200 67.200c-.1.100-.3.300-.4.400-58.600 58.900-59.400 154.800.4 214.600a152.500 152.500 0 0 0 20.500 17.200c6.400 4.500 15.100 3.800 20.600-1.700l21.100-21.100c8.400-8.400 12.100-19.200 11.700-29.800a16 16 0 0 0-6.900-12.600c-2.900-2-6.600-4.900-10.300-8.600-28.100-28.100-28.200-73.600 0-101.800l67.200-67.200c28.200-28.200 74.300-28.100 102.300.5 27.800 28.300 26.900 73.900-1.200 102l-13.100 13.100c-4.400 4.400-5.800 10.800-3.800 16.600 5.900 17.200 9 35 9.700 52.700.5 13.900 17.500 20.400 27.300 10.600l37.100-37.100c59.300-59.300 59.300-155.700 0-215z"/></svg></div>
<div class="c bl" style="left:331.0px;width:127.0px"><div class="sel" style="left:3.0px;width:120.3px"><span>McCoy</span><svg width="8.20" height="4.60" viewBox="0 0 128.0 72.0" preserveAspectRatio="none" style="position:absolute;left:103.60px;top:7.80px;" ><path fill="#000" d="M125.6 13.6 69.6 69.6Q67.2 72 64 72Q60.8 72 58.4 69.6L2.4 13.6Q0 11.2 0 8Q0 4.8 2.4 2.4Q4.8 0 8 0H120Q123.2 0 125.6 2.4Q128 4.8 128 8Q128 11.2 125.6 13.6Z"/></svg></div></div>
<div class="c bl" style="left:458.0px;width:234.0px"><div class="sel" style="left:3.0px;width:209.6px"><span>Primo Frutto Bio 500 ml</span><svg width="8.20" height="4.60" viewBox="0 0 128.0 72.0" preserveAspectRatio="none" style="position:absolute;left:193.80px;top:7.80px;" ><path fill="#000" d="M125.6 13.6 69.6 69.6Q67.2 72 64 72Q60.8 72 58.4 69.6L2.4 13.6Q0 11.2 0 8Q0 4.8 2.4 2.4Q4.8 0 8 0H120Q123.2 0 125.6 2.4Q128 4.8 128 8Q128 11.2 125.6 13.6Z"/></svg></div><svg width="13.80" height="13.60" viewBox="0 0 512 512" preserveAspectRatio="none" style="position:absolute;left:216.20px;top:6.00px;"><path fill="#000" d="M326.600 185.400c59.700 59.800 58.900 155.700.4 214.600-.1.100-.2.300-.4.400l-67.200 67.200c-59.300 59.300-155.700 59.300-215 0-59.300-59.300-59.300-155.700 0-215l37.100-37.100c9.800-9.800 26.800-3.300 27.300 10.600.6 17.700 3.800 35.500 9.700 52.700 2 5.800.6 12.300-3.800 16.600l-13.100 13.100c-28 28-28.900 73.700-1.200 102 28 28.600 74.100 28.700 102.300.5l67.200-67.200c28.200-28.200 28.100-73.800 0-101.800-3.700-3.700-7.400-6.600-10.300-8.600a16 16 0 0 1-6.900-12.600c-.4-10.600 3.300-21.500 11.700-29.800l21.100-21.100c5.500-5.500 14.200-6.200 20.600-1.700a152.500 152.500 0 0 1 20.500 17.200zM467.500 44.400c-59.300-59.300-155.700-59.300-215 0l-67.200 67.200c-.1.100-.3.300-.4.400-58.600 58.900-59.400 154.800.4 214.600a152.500 152.500 0 0 0 20.500 17.200c6.400 4.500 15.100 3.800 20.600-1.700l21.100-21.100c8.400-8.400 12.100-19.200 11.700-29.800a16 16 0 0 0-6.900-12.600c-2.900-2-6.600-4.900-10.300-8.600-28.100-28.100-28.200-73.600 0-101.800l67.200-67.200c28.200-28.200 74.300-28.100 102.300.5 27.800 28.300 26.900 73.900-1.200 102l-13.100 13.100c-4.400 4.400-5.800 10.800-3.800 16.600 5.900 17.200 9 35 9.700 52.700.5 13.900 17.500 20.400 27.300 10.600l37.100-37.100c59.300-59.300 59.300-155.700 0-215z"/></svg></div>
<div class="c bl t" style="left:692.0px;width:143.0px"><span>80.00 €</span></div>
<div class="c p t" style="left:835.0px;width:183.0px"><span>22/12/2021 12:05:13</span></div>
<div class="c bl t" style="left:1018.0px;width:227.0px"><span></span></div>
<div class="c bl t" style="left:1245.0px;width:195.0px"><span>Via Stella, 22</span></div>
<div class="c bl t" style="left:1440.0px;width:99.0px"><span>Modena</span></div>
</div>
<div class="row" style="top:524.20px">
<div class="c p" style="left:0.0px;width:35.0px"><div class="cb"></div></div>
<div class="c p" style="left:35.0px;width:34.0px"><svg width="14.00" height="14.00" viewBox="0 0 512 512" preserveAspectRatio="none" style="position:absolute;left:9.20px;top:5.90px;"><path fill="#222" d="M487.400 315.700l-42.600-24.600c4.300-23.200 4.300-47 0-70.200l42.600-24.600c4.900-2.800 7.100-8.600 5.500-14-11.100-35.600-30-67.800-54.700-94.600-3.800-4.100-10-5.100-14.800-2.300L380.800 110c-17.900-15.400-38.500-27.300-60.800-35.100V25.800c0-5.600-3.900-10.500-9.400-11.700-36.700-8.200-74.300-7.800-109.200 0-5.500 1.200-9.400 6.100-9.400 11.700V75c-22.200 7.900-42.800 19.800-60.800 35.100L88.700 85.500c-4.900-2.800-11-1.900-14.800 2.300-24.700 26.700-43.600 58.900-54.700 94.600-1.700 5.400.6 11.200 5.500 14L67.300 221c-4.300 23.200-4.300 47 0 70.200l-42.600 24.600c-4.900 2.800-7.100 8.600-5.500 14 11.100 35.600 30 67.800 54.700 94.600 3.800 4.100 10 5.100 14.800 2.300l42.600-24.600c17.900 15.400 38.500 27.300 60.800 35.100v49.200c0 5.600 3.900 10.500 9.400 11.700 36.700 8.200 74.300 7.800 109.200 0 5.500-1.200 9.400-6.100 9.400-11.700v-49.200c22.200-7.900 42.800-19.800 60.800-35.100l42.600 24.600c4.900 2.800 11 1.900 14.800-2.300 24.700-26.700 43.600-58.900 54.700-94.600 1.500-5.500-.7-11.300-5.600-14.100zM256 336c-44.100 0-80-35.900-80-80s35.900-80 80-80 80 35.900 80 80-35.900 80-80 80z"/></svg></div>
<div class="c bl" style="left:69.0px;width:262.0px"><div class="sel" style="left:3.0px;width:237.6px"><span>Osteria Francescana</span><svg width="8.20" height="4.60" viewBox="0 0 128.0 72.0" preserveAspectRatio="none" style="position:absolute;left:221.40px;top:7.80px;" ><path fill="#000" d="M125.6 13.6 69.6 69.6Q67.2 72 64 72Q60.8 72 58.4 69.6L2.4 13.6Q0 11.2 0 8Q0 4.8 2.4 2.4Q4.8 0 8 0H120Q123.2 0 125.6 2.4Q128 4.8 128 8Q128 11.2 125.6 13.6Z"/></svg></div><svg width="13.80" height="13.60" viewBox="0 0 512 512" preserveAspectRatio="none" style="position:absolute;left:244.00px;top:6.00px;"><path fill="#000" d="M326.600 185.400c59.700 59.800 58.900 155.700.4 214.600-.1.100-.2.300-.4.400l-67.200 67.200c-59.300 59.300-155.700 59.300-215 0-59.300-59.300-59.300-155.700 0-215l37.100-37.100c9.800-9.800 26.800-3.300 27.300 10.600.6 17.700 3.800 35.500 9.700 52.700 2 5.800.6 12.300-3.800 16.600l-13.100 13.100c-28 28-28.900 73.700-1.200 102 28 28.600 74.100 28.700 102.300.5l67.200-67.200c28.200-28.200 28.100-73.800 0-101.800-3.700-3.700-7.400-6.600-10.300-8.600a16 16 0 0 1-6.900-12.600c-.4-10.600 3.300-21.500 11.700-29.800l21.100-21.100c5.500-5.500 14.200-6.200 20.600-1.700a152.500 152.500 0 0 1 20.500 17.200zM467.500 44.400c-59.300-59.300-155.700-59.300-215 0l-67.200 67.200c-.1.100-.3.300-.4.400-58.600 58.900-59.400 154.800.4 214.600a152.500 152.500 0 0 0 20.500 17.200c6.400 4.500 15.100 3.800 20.600-1.700l21.100-21.100c8.400-8.400 12.100-19.200 11.700-29.800a16 16 0 0 0-6.900-12.600c-2.900-2-6.600-4.900-10.300-8.600-28.100-28.100-28.200-73.600 0-101.800l67.200-67.200c28.200-28.200 74.300-28.100 102.300.5 27.800 28.300 26.900 73.900-1.200 102l-13.100 13.100c-4.400 4.400-5.800 10.800-3.800 16.600 5.900 17.200 9 35 9.700 52.700.5 13.900 17.500 20.400 27.300 10.600l37.100-37.100c59.300-59.300 59.300-155.700 0-215z"/></svg></div>
<div class="c bl" style="left:331.0px;width:127.0px"><div class="sel" style="left:3.0px;width:120.3px"><span>McCoy</span><svg width="8.20" height="4.60" viewBox="0 0 128.0 72.0" preserveAspectRatio="none" style="position:absolute;left:103.60px;top:7.80px;" ><path fill="#000" d="M125.6 13.6 69.6 69.6Q67.2 72 64 72Q60.8 72 58.4 69.6L2.4 13.6Q0 11.2 0 8Q0 4.8 2.4 2.4Q4.8 0 8 0H120Q123.2 0 125.6 2.4Q128 4.8 128 8Q128 11.2 125.6 13.6Z"/></svg></div></div>
<div class="c bl" style="left:458.0px;width:234.0px"><div class="sel" style="left:3.0px;width:209.6px"><span>Primo Frutto Bio 500 ml</span><svg width="8.20" height="4.60" viewBox="0 0 128.0 72.0" preserveAspectRatio="none" style="position:absolute;left:193.80px;top:7.80px;" ><path fill="#000" d="M125.6 13.6 69.6 69.6Q67.2 72 64 72Q60.8 72 58.4 69.6L2.4 13.6Q0 11.2 0 8Q0 4.8 2.4 2.4Q4.8 0 8 0H120Q123.2 0 125.6 2.4Q128 4.8 128 8Q128 11.2 125.6 13.6Z"/></svg></div><svg width="13.80" height="13.60" viewBox="0 0 512 512" preserveAspectRatio="none" style="position:absolute;left:216.20px;top:6.00px;"><path fill="#000" d="M326.600 185.400c59.700 59.800 58.900 155.700.4 214.600-.1.100-.2.300-.4.400l-67.200 67.200c-59.300 59.300-155.700 59.300-215 0-59.300-59.300-59.300-155.700 0-215l37.100-37.100c9.800-9.800 26.800-3.300 27.300 10.600.6 17.700 3.800 35.500 9.700 52.700 2 5.800.6 12.300-3.800 16.600l-13.100 13.100c-28 28-28.900 73.700-1.200 102 28 28.600 74.100 28.700 102.300.5l67.200-67.200c28.200-28.200 28.100-73.800 0-101.800-3.700-3.700-7.400-6.600-10.300-8.600a16 16 0 0 1-6.900-12.600c-.4-10.600 3.300-21.500 11.700-29.800l21.100-21.100c5.500-5.500 14.200-6.200 20.600-1.700a152.500 152.500 0 0 1 20.500 17.200zM467.500 44.400c-59.300-59.300-155.700-59.300-215 0l-67.200 67.200c-.1.100-.3.300-.4.400-58.600 58.900-59.400 154.800.4 214.600a152.500 152.500 0 0 0 20.500 17.200c6.400 4.500 15.100 3.800 20.600-1.700l21.100-21.100c8.400-8.400 12.100-19.200 11.700-29.800a16 16 0 0 0-6.900-12.600c-2.900-2-6.600-4.900-10.300-8.600-28.100-28.100-28.200-73.600 0-101.800l67.200-67.200c28.200-28.200 74.300-28.100 102.300.5 27.800 28.300 26.900 73.900-1.200 102l-13.100 13.100c-4.400 4.400-5.800 10.800-3.800 16.600 5.900 17.200 9 35 9.700 52.700.5 13.900 17.500 20.400 27.300 10.600l37.100-37.100c59.300-59.300 59.300-155.700 0-215z"/></svg></div>
<div class="c bl t" style="left:692.0px;width:143.0px"><span>80.00 €</span></div>
<div class="c p t" style="left:835.0px;width:183.0px"><span>22/12/2021 12:05:14</span></div>
<div class="c bl t" style="left:1018.0px;width:227.0px"><span></span></div>
<div class="c bl t" style="left:1245.0px;width:195.0px"><span>Via Stella, 22</span></div>
<div class="c bl t" style="left:1440.0px;width:99.0px"><span>Modena</span></div>
</div>
<div class="row alt" style="top:550.40px">
<div class="c p" style="left:0.0px;width:35.0px"><div class="cb"></div></div>
<div class="c p" style="left:35.0px;width:34.0px"><svg width="14.00" height="14.00" viewBox="0 0 512 512" preserveAspectRatio="none" style="position:absolute;left:9.20px;top:5.90px;"><path fill="#222" d="M487.400 315.700l-42.600-24.600c4.300-23.200 4.300-47 0-70.200l42.600-24.600c4.900-2.800 7.100-8.600 5.500-14-11.100-35.600-30-67.800-54.700-94.600-3.800-4.100-10-5.100-14.800-2.300L380.800 110c-17.900-15.400-38.500-27.300-60.800-35.100V25.800c0-5.600-3.900-10.500-9.400-11.700-36.700-8.200-74.300-7.800-109.200 0-5.500 1.200-9.400 6.100-9.400 11.700V75c-22.200 7.900-42.800 19.800-60.800 35.100L88.700 85.500c-4.900-2.800-11-1.900-14.800 2.300-24.700 26.700-43.600 58.900-54.700 94.600-1.700 5.400.6 11.200 5.500 14L67.300 221c-4.300 23.200-4.300 47 0 70.200l-42.600 24.600c-4.900 2.800-7.100 8.600-5.500 14 11.100 35.600 30 67.800 54.700 94.600 3.800 4.100 10 5.100 14.800 2.300l42.600-24.600c17.900 15.400 38.500 27.300 60.800 35.100v49.200c0 5.600 3.900 10.500 9.400 11.700 36.700 8.200 74.300 7.800 109.200 0 5.500-1.200 9.400-6.100 9.400-11.700v-49.200c22.200-7.900 42.800-19.800 60.800-35.100l42.600 24.600c4.900 2.800 11 1.900 14.800-2.300 24.700-26.700 43.600-58.900 54.700-94.600 1.500-5.500-.7-11.300-5.600-14.100zM256 336c-44.100 0-80-35.900-80-80s35.900-80 80-80 80 35.900 80 80-35.900 80-80 80z"/></svg></div>
<div class="c bl" style="left:69.0px;width:262.0px"><div class="sel" style="left:3.0px;width:237.6px"><span>Osteria Francescana</span><svg width="8.20" height="4.60" viewBox="0 0 128.0 72.0" preserveAspectRatio="none" style="position:absolute;left:221.40px;top:7.80px;" ><path fill="#000" d="M125.6 13.6 69.6 69.6Q67.2 72 64 72Q60.8 72 58.4 69.6L2.4 13.6Q0 11.2 0 8Q0 4.8 2.4 2.4Q4.8 0 8 0H120Q123.2 0 125.6 2.4Q128 4.8 128 8Q128 11.2 125.6 13.6Z"/></svg></div><svg width="13.80" height="13.60" viewBox="0 0 512 512" preserveAspectRatio="none" style="position:absolute;left:244.00px;top:6.00px;"><path fill="#000" d="M326.600 185.400c59.700 59.800 58.900 155.700.4 214.600-.1.100-.2.300-.4.400l-67.200 67.200c-59.300 59.300-155.700 59.300-215 0-59.300-59.300-59.300-155.700 0-215l37.100-37.100c9.800-9.800 26.800-3.300 27.300 10.600.6 17.700 3.800 35.500 9.700 52.700 2 5.800.6 12.300-3.800 16.600l-13.100 13.100c-28 28-28.900 73.700-1.200 102 28 28.600 74.100 28.700 102.300.5l67.200-67.200c28.200-28.200 28.100-73.800 0-101.800-3.700-3.700-7.400-6.600-10.300-8.600a16 16 0 0 1-6.900-12.600c-.4-10.600 3.300-21.500 11.700-29.800l21.100-21.100c5.500-5.500 14.200-6.200 20.600-1.700a152.500 152.500 0 0 1 20.500 17.200zM467.500 44.400c-59.300-59.300-155.700-59.300-215 0l-67.200 67.200c-.1.100-.3.300-.4.400-58.600 58.900-59.400 154.800.4 214.600a152.500 152.500 0 0 0 20.500 17.200c6.400 4.500 15.100 3.800 20.600-1.700l21.100-21.100c8.400-8.400 12.100-19.200 11.700-29.800a16 16 0 0 0-6.900-12.600c-2.900-2-6.600-4.900-10.300-8.600-28.100-28.100-28.200-73.600 0-101.800l67.200-67.200c28.200-28.200 74.300-28.100 102.300.5 27.800 28.300 26.900 73.900-1.200 102l-13.100 13.100c-4.400 4.400-5.800 10.800-3.800 16.600 5.900 17.200 9 35 9.700 52.700.5 13.900 17.500 20.400 27.300 10.600l37.100-37.100c59.300-59.300 59.300-155.700 0-215z"/></svg></div>
<div class="c bl" style="left:331.0px;width:127.0px"><div class="sel" style="left:3.0px;width:120.3px"><span>McCoy</span><svg width="8.20" height="4.60" viewBox="0 0 128.0 72.0" preserveAspectRatio="none" style="position:absolute;left:103.60px;top:7.80px;" ><path fill="#000" d="M125.6 13.6 69.6 69.6Q67.2 72 64 72Q60.8 72 58.4 69.6L2.4 13.6Q0 11.2 0 8Q0 4.8 2.4 2.4Q4.8 0 8 0H120Q123.2 0 125.6 2.4Q128 4.8 128 8Q128 11.2 125.6 13.6Z"/></svg></div></div>
<div class="c bl" style="left:458.0px;width:234.0px"><div class="sel" style="left:3.0px;width:209.6px"><span>Primo Frutto Bio 500 ml</span><svg width="8.20" height="4.60" viewBox="0 0 128.0 72.0" preserveAspectRatio="none" style="position:absolute;left:193.80px;top:7.80px;" ><path fill="#000" d="M125.6 13.6 69.6 69.6Q67.2 72 64 72Q60.8 72 58.4 69.6L2.4 13.6Q0 11.2 0 8Q0 4.8 2.4 2.4Q4.8 0 8 0H120Q123.2 0 125.6 2.4Q128 4.8 128 8Q128 11.2 125.6 13.6Z"/></svg></div><svg width="13.80" height="13.60" viewBox="0 0 512 512" preserveAspectRatio="none" style="position:absolute;left:216.20px;top:6.00px;"><path fill="#000" d="M326.600 185.400c59.700 59.800 58.900 155.700.4 214.600-.1.100-.2.300-.4.400l-67.200 67.200c-59.300 59.300-155.700 59.300-215 0-59.300-59.300-59.300-155.700 0-215l37.100-37.100c9.800-9.800 26.800-3.300 27.300 10.600.6 17.700 3.800 35.500 9.700 52.700 2 5.800.6 12.300-3.800 16.600l-13.100 13.100c-28 28-28.900 73.700-1.200 102 28 28.600 74.100 28.700 102.300.5l67.200-67.200c28.200-28.200 28.100-73.800 0-101.800-3.700-3.700-7.400-6.600-10.300-8.600a16 16 0 0 1-6.900-12.600c-.4-10.600 3.300-21.500 11.700-29.800l21.100-21.100c5.500-5.500 14.200-6.200 20.600-1.700a152.500 152.500 0 0 1 20.500 17.200zM467.500 44.400c-59.300-59.300-155.700-59.300-215 0l-67.200 67.200c-.1.100-.3.300-.4.400-58.600 58.900-59.400 154.800.4 214.600a152.500 152.500 0 0 0 20.500 17.200c6.400 4.500 15.100 3.800 20.600-1.700l21.100-21.100c8.400-8.400 12.100-19.200 11.700-29.800a16 16 0 0 0-6.900-12.600c-2.900-2-6.600-4.900-10.300-8.600-28.100-28.100-28.200-73.600 0-101.800l67.200-67.200c28.200-28.200 74.300-28.100 102.300.5 27.800 28.300 26.900 73.900-1.200 102l-13.100 13.100c-4.400 4.400-5.800 10.800-3.800 16.600 5.900 17.200 9 35 9.700 52.700.5 13.900 17.500 20.400 27.300 10.600l37.100-37.100c59.300-59.300 59.300-155.700 0-215z"/></svg></div>
<div class="c bl t" style="left:692.0px;width:143.0px"><span>80.00 €</span></div>
<div class="c p t" style="left:835.0px;width:183.0px"><span>22/12/2021 12:05:28</span></div>
<div class="c bl t" style="left:1018.0px;width:227.0px"><span></span></div>
<div class="c bl t" style="left:1245.0px;width:195.0px"><span>Via Stella, 22</span></div>
<div class="c bl t" style="left:1440.0px;width:99.0px"><span>Modena</span></div>
</div>
<div class="row" style="top:576.60px">
<div class="c p" style="left:0.0px;width:35.0px"><div class="cb"></div></div>
<div class="c p" style="left:35.0px;width:34.0px"><svg width="14.00" height="14.00" viewBox="0 0 512 512" preserveAspectRatio="none" style="position:absolute;left:9.20px;top:5.90px;"><path fill="#222" d="M487.400 315.700l-42.600-24.600c4.300-23.200 4.300-47 0-70.200l42.600-24.600c4.900-2.800 7.100-8.600 5.500-14-11.100-35.600-30-67.800-54.700-94.600-3.800-4.100-10-5.100-14.800-2.300L380.800 110c-17.900-15.400-38.500-27.300-60.800-35.100V25.800c0-5.600-3.900-10.500-9.400-11.700-36.700-8.200-74.300-7.800-109.200 0-5.500 1.200-9.400 6.100-9.400 11.700V75c-22.200 7.900-42.800 19.800-60.800 35.100L88.700 85.500c-4.900-2.800-11-1.900-14.800 2.300-24.700 26.700-43.600 58.900-54.700 94.600-1.700 5.400.6 11.200 5.500 14L67.300 221c-4.300 23.200-4.300 47 0 70.200l-42.600 24.600c-4.900 2.800-7.100 8.600-5.500 14 11.100 35.600 30 67.800 54.700 94.600 3.800 4.100 10 5.100 14.800 2.300l42.600-24.600c17.900 15.400 38.500 27.300 60.800 35.100v49.200c0 5.600 3.900 10.500 9.400 11.700 36.700 8.200 74.300 7.800 109.200 0 5.500-1.200 9.400-6.100 9.400-11.700v-49.200c22.200-7.900 42.800-19.800 60.800-35.100l42.600 24.600c4.900 2.800 11 1.900 14.800-2.300 24.700-26.700 43.600-58.900 54.700-94.600 1.500-5.500-.7-11.300-5.600-14.100zM256 336c-44.100 0-80-35.900-80-80s35.900-80 80-80 80 35.900 80 80-35.900 80-80 80z"/></svg></div>
<div class="c bl" style="left:69.0px;width:262.0px"><div class="sel" style="left:3.0px;width:237.6px"><span>Osteria Francescana</span><svg width="8.20" height="4.60" viewBox="0 0 128.0 72.0" preserveAspectRatio="none" style="position:absolute;left:221.40px;top:7.80px;" ><path fill="#000" d="M125.6 13.6 69.6 69.6Q67.2 72 64 72Q60.8 72 58.4 69.6L2.4 13.6Q0 11.2 0 8Q0 4.8 2.4 2.4Q4.8 0 8 0H120Q123.2 0 125.6 2.4Q128 4.8 128 8Q128 11.2 125.6 13.6Z"/></svg></div><svg width="13.80" height="13.60" viewBox="0 0 512 512" preserveAspectRatio="none" style="position:absolute;left:244.00px;top:6.00px;"><path fill="#000" d="M326.600 185.400c59.700 59.800 58.900 155.700.4 214.600-.1.100-.2.300-.4.400l-67.200 67.200c-59.300 59.300-155.700 59.300-215 0-59.300-59.300-59.300-155.700 0-215l37.100-37.100c9.800-9.800 26.800-3.300 27.300 10.600.6 17.700 3.800 35.500 9.700 52.700 2 5.800.6 12.300-3.800 16.600l-13.100 13.100c-28 28-28.900 73.700-1.200 102 28 28.600 74.100 28.700 102.300.5l67.200-67.200c28.200-28.200 28.100-73.800 0-101.800-3.700-3.700-7.400-6.600-10.300-8.600a16 16 0 0 1-6.900-12.600c-.4-10.600 3.300-21.500 11.700-29.800l21.100-21.100c5.500-5.500 14.200-6.200 20.600-1.700a152.500 152.500 0 0 1 20.500 17.200zM467.500 44.400c-59.300-59.300-155.700-59.300-215 0l-67.200 67.200c-.1.100-.3.300-.4.400-58.600 58.900-59.400 154.800.4 214.600a152.500 152.500 0 0 0 20.500 17.200c6.400 4.500 15.100 3.800 20.600-1.700l21.100-21.100c8.400-8.400 12.100-19.200 11.700-29.800a16 16 0 0 0-6.900-12.600c-2.900-2-6.600-4.900-10.300-8.600-28.100-28.100-28.200-73.600 0-101.800l67.200-67.200c28.200-28.200 74.300-28.100 102.300.5 27.800 28.300 26.900 73.900-1.200 102l-13.100 13.100c-4.400 4.400-5.800 10.800-3.800 16.600 5.900 17.200 9 35 9.700 52.700.5 13.900 17.500 20.400 27.300 10.600l37.100-37.100c59.300-59.300 59.300-155.700 0-215z"/></svg></div>
<div class="c bl" style="left:331.0px;width:127.0px"><div class="sel" style="left:3.0px;width:120.3px"><span>McCoy</span><svg width="8.20" height="4.60" viewBox="0 0 128.0 72.0" preserveAspectRatio="none" style="position:absolute;left:103.60px;top:7.80px;" ><path fill="#000" d="M125.6 13.6 69.6 69.6Q67.2 72 64 72Q60.8 72 58.4 69.6L2.4 13.6Q0 11.2 0 8Q0 4.8 2.4 2.4Q4.8 0 8 0H120Q123.2 0 125.6 2.4Q128 4.8 128 8Q128 11.2 125.6 13.6Z"/></svg></div></div>
<div class="c bl" style="left:458.0px;width:234.0px"><div class="sel" style="left:3.0px;width:209.6px"><span>Primo Frutto Bio 500 ml</span><svg width="8.20" height="4.60" viewBox="0 0 128.0 72.0" preserveAspectRatio="none" style="position:absolute;left:193.80px;top:7.80px;" ><path fill="#000" d="M125.6 13.6 69.6 69.6Q67.2 72 64 72Q60.8 72 58.4 69.6L2.4 13.6Q0 11.2 0 8Q0 4.8 2.4 2.4Q4.8 0 8 0H120Q123.2 0 125.6 2.4Q128 4.8 128 8Q128 11.2 125.6 13.6Z"/></svg></div><svg width="13.80" height="13.60" viewBox="0 0 512 512" preserveAspectRatio="none" style="position:absolute;left:216.20px;top:6.00px;"><path fill="#000" d="M326.600 185.400c59.700 59.800 58.900 155.700.4 214.600-.1.100-.2.300-.4.400l-67.200 67.200c-59.300 59.300-155.700 59.300-215 0-59.300-59.300-59.300-155.700 0-215l37.100-37.100c9.800-9.800 26.800-3.300 27.300 10.600.6 17.700 3.800 35.500 9.700 52.700 2 5.800.6 12.300-3.800 16.600l-13.100 13.100c-28 28-28.900 73.700-1.200 102 28 28.600 74.100 28.700 102.300.5l67.200-67.200c28.200-28.200 28.100-73.800 0-101.800-3.700-3.700-7.400-6.600-10.300-8.600a16 16 0 0 1-6.900-12.600c-.4-10.600 3.300-21.500 11.700-29.800l21.100-21.100c5.500-5.500 14.200-6.200 20.600-1.700a152.500 152.500 0 0 1 20.500 17.200zM467.500 44.400c-59.300-59.300-155.700-59.300-215 0l-67.200 67.200c-.1.100-.3.300-.4.400-58.600 58.900-59.400 154.800.4 214.600a152.500 152.500 0 0 0 20.500 17.200c6.400 4.500 15.100 3.800 20.600-1.700l21.100-21.100c8.400-8.400 12.100-19.200 11.700-29.800a16 16 0 0 0-6.900-12.600c-2.900-2-6.600-4.900-10.300-8.600-28.100-28.100-28.200-73.600 0-101.800l67.200-67.200c28.200-28.200 74.300-28.100 102.300.5 27.800 28.300 26.900 73.900-1.200 102l-13.100 13.100c-4.400 4.400-5.800 10.800-3.800 16.600 5.900 17.200 9 35 9.700 52.700.5 13.900 17.500 20.400 27.300 10.600l37.100-37.100c59.300-59.300 59.300-155.700 0-215z"/></svg></div>
<div class="c bl t" style="left:692.0px;width:143.0px"><span>80.00 €</span></div>
<div class="c p t" style="left:835.0px;width:183.0px"><span>22/12/2021 12:05:30</span></div>
<div class="c bl t" style="left:1018.0px;width:227.0px"><span></span></div>
<div class="c bl t" style="left:1245.0px;width:195.0px"><span>Via Stella, 22</span></div>
<div class="c bl t" style="left:1440.0px;width:99.0px"><span>Modena</span></div>
</div>
<div class="row alt" style="top:602.80px">
<div class="c p" style="left:0.0px;width:35.0px"><div class="cb"></div></div>
<div class="c p" style="left:35.0px;width:34.0px"><svg width="14.00" height="14.00" viewBox="0 0 512 512" preserveAspectRatio="none" style="position:absolute;left:9.20px;top:5.90px;"><path fill="#222" d="M487.400 315.700l-42.600-24.600c4.300-23.200 4.300-47 0-70.200l42.600-24.600c4.900-2.800 7.100-8.600 5.500-14-11.100-35.600-30-67.800-54.700-94.600-3.800-4.100-10-5.100-14.800-2.300L380.800 110c-17.900-15.400-38.500-27.300-60.800-35.100V25.800c0-5.600-3.900-10.500-9.400-11.700-36.700-8.200-74.300-7.800-109.200 0-5.500 1.200-9.400 6.100-9.400 11.700V75c-22.200 7.900-42.800 19.800-60.800 35.100L88.700 85.500c-4.900-2.800-11-1.900-14.800 2.300-24.700 26.700-43.600 58.900-54.700 94.600-1.700 5.400.6 11.200 5.500 14L67.300 221c-4.300 23.200-4.300 47 0 70.200l-42.600 24.600c-4.900 2.800-7.100 8.600-5.500 14 11.100 35.600 30 67.800 54.700 94.600 3.800 4.100 10 5.100 14.800 2.300l42.600-24.600c17.900 15.400 38.500 27.300 60.800 35.100v49.200c0 5.600 3.900 10.500 9.400 11.700 36.700 8.200 74.300 7.800 109.200 0 5.500-1.200 9.400-6.100 9.400-11.700v-49.200c22.200-7.900 42.800-19.800 60.800-35.100l42.600 24.600c4.900 2.800 11 1.900 14.800-2.300 24.700-26.700 43.600-58.900 54.700-94.600 1.500-5.500-.7-11.300-5.600-14.100zM256 336c-44.100 0-80-35.900-80-80s35.900-80 80-80 80 35.900 80 80-35.900 80-80 80z"/></svg></div>
<div class="c bl" style="left:69.0px;width:262.0px"><div class="sel" style="left:3.0px;width:237.6px"><span>Osteria Francescana</span><svg width="8.20" height="4.60" viewBox="0 0 128.0 72.0" preserveAspectRatio="none" style="position:absolute;left:221.40px;top:7.80px;" ><path fill="#000" d="M125.6 13.6 69.6 69.6Q67.2 72 64 72Q60.8 72 58.4 69.6L2.4 13.6Q0 11.2 0 8Q0 4.8 2.4 2.4Q4.8 0 8 0H120Q123.2 0 125.6 2.4Q128 4.8 128 8Q128 11.2 125.6 13.6Z"/></svg></div><svg width="13.80" height="13.60" viewBox="0 0 512 512" preserveAspectRatio="none" style="position:absolute;left:244.00px;top:6.00px;"><path fill="#000" d="M326.600 185.400c59.700 59.800 58.900 155.700.4 214.600-.1.100-.2.300-.4.400l-67.200 67.200c-59.300 59.300-155.700 59.300-215 0-59.300-59.300-59.300-155.700 0-215l37.100-37.100c9.800-9.800 26.800-3.300 27.300 10.600.6 17.700 3.800 35.500 9.700 52.700 2 5.800.6 12.300-3.800 16.600l-13.100 13.100c-28 28-28.900 73.700-1.200 102 28 28.600 74.100 28.700 102.300.5l67.200-67.200c28.200-28.200 28.100-73.800 0-101.800-3.700-3.700-7.400-6.600-10.300-8.600a16 16 0 0 1-6.900-12.600c-.4-10.600 3.300-21.500 11.700-29.800l21.100-21.100c5.500-5.500 14.200-6.200 20.600-1.700a152.500 152.500 0 0 1 20.500 17.200zM467.500 44.400c-59.300-59.300-155.700-59.300-215 0l-67.200 67.200c-.1.100-.3.300-.4.400-58.600 58.900-59.400 154.800.4 214.600a152.500 152.500 0 0 0 20.500 17.200c6.400 4.500 15.100 3.800 20.600-1.700l21.100-21.100c8.400-8.400 12.100-19.200 11.700-29.800a16 16 0 0 0-6.900-12.600c-2.900-2-6.600-4.900-10.300-8.600-28.100-28.100-28.200-73.600 0-101.800l67.200-67.200c28.200-28.200 74.300-28.100 102.300.5 27.800 28.300 26.900 73.900-1.200 102l-13.100 13.100c-4.400 4.400-5.800 10.800-3.800 16.600 5.900 17.200 9 35 9.700 52.700.5 13.900 17.500 20.400 27.300 10.600l37.100-37.100c59.300-59.300 59.300-155.700 0-215z"/></svg></div>
<div class="c bl" style="left:331.0px;width:127.0px"><div class="sel" style="left:3.0px;width:120.3px"><span>McCoy</span><svg width="8.20" height="4.60" viewBox="0 0 128.0 72.0" preserveAspectRatio="none" style="position:absolute;left:103.60px;top:7.80px;" ><path fill="#000" d="M125.6 13.6 69.6 69.6Q67.2 72 64 72Q60.8 72 58.4 69.6L2.4 13.6Q0 11.2 0 8Q0 4.8 2.4 2.4Q4.8 0 8 0H120Q123.2 0 125.6 2.4Q128 4.8 128 8Q128 11.2 125.6 13.6Z"/></svg></div></div>
<div class="c bl" style="left:458.0px;width:234.0px"><div class="sel" style="left:3.0px;width:209.6px"><span>Primo Frutto Bio 500 ml</span><svg width="8.20" height="4.60" viewBox="0 0 128.0 72.0" preserveAspectRatio="none" style="position:absolute;left:193.80px;top:7.80px;" ><path fill="#000" d="M125.6 13.6 69.6 69.6Q67.2 72 64 72Q60.8 72 58.4 69.6L2.4 13.6Q0 11.2 0 8Q0 4.8 2.4 2.4Q4.8 0 8 0H120Q123.2 0 125.6 2.4Q128 4.8 128 8Q128 11.2 125.6 13.6Z"/></svg></div><svg width="13.80" height="13.60" viewBox="0 0 512 512" preserveAspectRatio="none" style="position:absolute;left:216.20px;top:6.00px;"><path fill="#000" d="M326.600 185.400c59.700 59.800 58.900 155.700.4 214.600-.1.100-.2.300-.4.400l-67.200 67.200c-59.300 59.300-155.700 59.300-215 0-59.300-59.300-59.300-155.700 0-215l37.100-37.100c9.800-9.800 26.800-3.300 27.300 10.600.6 17.700 3.800 35.500 9.700 52.700 2 5.800.6 12.300-3.800 16.600l-13.100 13.100c-28 28-28.900 73.700-1.200 102 28 28.600 74.100 28.700 102.300.5l67.200-67.200c28.200-28.200 28.100-73.800 0-101.800-3.700-3.700-7.400-6.600-10.300-8.600a16 16 0 0 1-6.900-12.600c-.4-10.600 3.300-21.500 11.700-29.800l21.100-21.100c5.500-5.500 14.200-6.200 20.600-1.700a152.500 152.500 0 0 1 20.500 17.200zM467.500 44.400c-59.300-59.300-155.700-59.300-215 0l-67.200 67.200c-.1.100-.3.300-.4.400-58.600 58.900-59.400 154.800.4 214.600a152.500 152.500 0 0 0 20.500 17.200c6.400 4.500 15.100 3.800 20.600-1.700l21.100-21.100c8.400-8.400 12.100-19.200 11.700-29.800a16 16 0 0 0-6.900-12.600c-2.900-2-6.600-4.900-10.300-8.600-28.100-28.100-28.200-73.600 0-101.800l67.200-67.200c28.200-28.200 74.300-28.100 102.300.5 27.800 28.300 26.900 73.900-1.200 102l-13.100 13.100c-4.400 4.400-5.800 10.800-3.800 16.600 5.900 17.200 9 35 9.700 52.700.5 13.900 17.500 20.400 27.300 10.600l37.100-37.100c59.300-59.300 59.300-155.700 0-215z"/></svg></div>
<div class="c bl t" style="left:692.0px;width:143.0px"><span>80.00 €</span></div>
<div class="c p t" style="left:835.0px;width:183.0px"><span>19/01/2022 16:25:20</span></div>
<div class="c bl t" style="left:1018.0px;width:227.0px"><span></span></div>
<div class="c bl t" style="left:1245.0px;width:195.0px"><span>Via Stella, 22</span></div>
<div class="c bl t" style="left:1440.0px;width:99.0px"><span>Modena</span></div>
</div>
<div class="row" style="top:629.00px">
<div class="c p" style="left:0.0px;width:35.0px"><div class="cb"></div></div>
<div class="c p" style="left:35.0px;width:34.0px"><svg width="14.00" height="14.00" viewBox="0 0 512 512" preserveAspectRatio="none" style="position:absolute;left:9.20px;top:5.90px;"><path fill="#222" d="M487.400 315.700l-42.600-24.600c4.300-23.200 4.300-47 0-70.200l42.600-24.600c4.900-2.800 7.100-8.600 5.500-14-11.100-35.600-30-67.800-54.700-94.600-3.800-4.100-10-5.100-14.800-2.300L380.800 110c-17.900-15.400-38.500-27.300-60.800-35.100V25.800c0-5.600-3.900-10.500-9.400-11.700-36.700-8.200-74.300-7.800-109.200 0-5.500 1.200-9.400 6.100-9.400 11.700V75c-22.200 7.900-42.800 19.800-60.800 35.100L88.700 85.500c-4.900-2.800-11-1.900-14.800 2.300-24.700 26.700-43.600 58.900-54.700 94.600-1.700 5.400.6 11.200 5.500 14L67.300 221c-4.300 23.200-4.300 47 0 70.200l-42.600 24.600c-4.900 2.800-7.100 8.600-5.500 14 11.100 35.600 30 67.800 54.700 94.600 3.800 4.100 10 5.100 14.800 2.300l42.600-24.600c17.900 15.400 38.500 27.300 60.800 35.100v49.200c0 5.600 3.900 10.500 9.400 11.700 36.700 8.200 74.300 7.800 109.200 0 5.500-1.200 9.400-6.100 9.400-11.700v-49.200c22.200-7.900 42.800-19.800 60.800-35.100l42.600 24.600c4.900 2.800 11 1.900 14.800-2.300 24.700-26.700 43.600-58.900 54.700-94.600 1.500-5.500-.7-11.300-5.600-14.100zM256 336c-44.100 0-80-35.900-80-80s35.900-80 80-80 80 35.900 80 80-35.900 80-80 80z"/></svg></div>
<div class="c bl" style="left:69.0px;width:262.0px"><div class="sel" style="left:3.0px;width:237.6px"><span>Osteria Francescana</span><svg width="8.20" height="4.60" viewBox="0 0 128.0 72.0" preserveAspectRatio="none" style="position:absolute;left:221.40px;top:7.80px;" ><path fill="#000" d="M125.6 13.6 69.6 69.6Q67.2 72 64 72Q60.8 72 58.4 69.6L2.4 13.6Q0 11.2 0 8Q0 4.8 2.4 2.4Q4.8 0 8 0H120Q123.2 0 125.6 2.4Q128 4.8 128 8Q128 11.2 125.6 13.6Z"/></svg></div><svg width="13.80" height="13.60" viewBox="0 0 512 512" preserveAspectRatio="none" style="position:absolute;left:244.00px;top:6.00px;"><path fill="#000" d="M326.600 185.400c59.700 59.800 58.900 155.700.4 214.600-.1.100-.2.300-.4.400l-67.200 67.200c-59.300 59.300-155.700 59.300-215 0-59.300-59.300-59.300-155.700 0-215l37.100-37.100c9.800-9.800 26.800-3.300 27.300 10.600.6 17.700 3.800 35.500 9.700 52.700 2 5.800.6 12.300-3.800 16.600l-13.100 13.100c-28 28-28.900 73.700-1.200 102 28 28.600 74.100 28.700 102.300.5l67.200-67.200c28.200-28.200 28.100-73.800 0-101.800-3.700-3.700-7.400-6.600-10.300-8.600a16 16 0 0 1-6.900-12.600c-.4-10.600 3.300-21.500 11.700-29.800l21.100-21.100c5.500-5.500 14.200-6.200 20.600-1.700a152.500 152.500 0 0 1 20.500 17.200zM467.500 44.400c-59.300-59.300-155.700-59.300-215 0l-67.200 67.200c-.1.100-.3.300-.4.400-58.600 58.900-59.400 154.800.4 214.600a152.500 152.500 0 0 0 20.500 17.200c6.400 4.500 15.100 3.800 20.600-1.700l21.100-21.100c8.400-8.400 12.100-19.200 11.700-29.800a16 16 0 0 0-6.900-12.600c-2.900-2-6.600-4.900-10.300-8.600-28.100-28.100-28.200-73.600 0-101.800l67.200-67.200c28.200-28.200 74.300-28.100 102.300.5 27.800 28.300 26.900 73.900-1.200 102l-13.100 13.100c-4.400 4.400-5.800 10.800-3.800 16.600 5.900 17.200 9 35 9.700 52.700.5 13.900 17.500 20.400 27.300 10.600l37.100-37.100c59.300-59.300 59.300-155.700 0-215z"/></svg></div>
<div class="c bl" style="left:331.0px;width:127.0px"><div class="sel" style="left:3.0px;width:120.3px"><span>McCoy</span><svg width="8.20" height="4.60" viewBox="0 0 128.0 72.0" preserveAspectRatio="none" style="position:absolute;left:103.60px;top:7.80px;" ><path fill="#000" d="M125.6 13.6 69.6 69.6Q67.2 72 64 72Q60.8 72 58.4 69.6L2.4 13.6Q0 11.2 0 8Q0 4.8 2.4 2.4Q4.8 0 8 0H120Q123.2 0 125.6 2.4Q128 4.8 128 8Q128 11.2 125.6 13.6Z"/></svg></div></div>
<div class="c bl" style="left:458.0px;width:234.0px"><div class="sel" style="left:3.0px;width:209.6px"><span>Primo Frutto Bio 500 ml</span><svg width="8.20" height="4.60" viewBox="0 0 128.0 72.0" preserveAspectRatio="none" style="position:absolute;left:193.80px;top:7.80px;" ><path fill="#000" d="M125.6 13.6 69.6 69.6Q67.2 72 64 72Q60.8 72 58.4 69.6L2.4 13.6Q0 11.2 0 8Q0 4.8 2.4 2.4Q4.8 0 8 0H120Q123.2 0 125.6 2.4Q128 4.8 128 8Q128 11.2 125.6 13.6Z"/></svg></div><svg width="13.80" height="13.60" viewBox="0 0 512 512" preserveAspectRatio="none" style="position:absolute;left:216.20px;top:6.00px;"><path fill="#000" d="M326.600 185.400c59.700 59.800 58.900 155.700.4 214.600-.1.100-.2.300-.4.400l-67.200 67.200c-59.300 59.300-155.700 59.300-215 0-59.300-59.300-59.300-155.700 0-215l37.100-37.100c9.800-9.800 26.800-3.300 27.300 10.600.6 17.700 3.800 35.500 9.700 52.700 2 5.800.6 12.300-3.800 16.600l-13.100 13.100c-28 28-28.900 73.700-1.200 102 28 28.600 74.100 28.700 102.300.5l67.200-67.200c28.200-28.200 28.100-73.800 0-101.800-3.700-3.700-7.400-6.600-10.300-8.600a16 16 0 0 1-6.900-12.600c-.4-10.600 3.300-21.500 11.700-29.800l21.100-21.100c5.500-5.500 14.200-6.200 20.600-1.700a152.500 152.500 0 0 1 20.500 17.200zM467.500 44.400c-59.300-59.300-155.700-59.300-215 0l-67.200 67.200c-.1.100-.3.300-.4.400-58.600 58.900-59.400 154.800.4 214.600a152.500 152.500 0 0 0 20.500 17.200c6.400 4.500 15.100 3.800 20.600-1.700l21.100-21.100c8.400-8.400 12.100-19.200 11.700-29.800a16 16 0 0 0-6.900-12.600c-2.900-2-6.600-4.900-10.300-8.600-28.100-28.100-28.200-73.600 0-101.800l67.200-67.200c28.200-28.200 74.300-28.100 102.300.5 27.800 28.300 26.900 73.900-1.200 102l-13.100 13.100c-4.400 4.400-5.800 10.800-3.800 16.600 5.900 17.200 9 35 9.700 52.700.5 13.900 17.500 20.400 27.300 10.600l37.100-37.100c59.300-59.300 59.300-155.700 0-215z"/></svg></div>
<div class="c bl t" style="left:692.0px;width:143.0px"><span>80.00 €</span></div>
<div class="c p t" style="left:835.0px;width:183.0px"><span>19/01/2022 16:25:19</span></div>
<div class="c bl t" style="left:1018.0px;width:227.0px"><span></span></div>
<div class="c bl t" style="left:1245.0px;width:195.0px"><span>Via Stella, 22</span></div>
<div class="c bl t" style="left:1440.0px;width:99.0px"><span>Modena</span></div>
</div>
</div>
<div class="vtrack"><div class="vthumb"></div></div>
<div class="htrack"><div class="hthumb"></div></div>
<div id="pager">
<div class="pb f d" style="left:5.50px"><svg width="13" height="14" viewBox="0 0 13 14" style="position:absolute;left:8px;top:8.500px"><path d="M2.500 3.500H3.800V10.500H2.500ZM9.500 3.500V10.500L4.200 7Z" fill="#555"/></svg></div>
<div class="pb d" style="left:34.60px"><svg width="13" height="14" viewBox="0 0 13 14" style="position:absolute;left:8px;top:8.500px"><path d="M9 3.500V10.500L3.700 7Z" fill="#555"/></svg></div>
<div class="pb cur" style="left:63.70px"><span>1</span></div>
<div class="pb" style="left:92.80px"><span>2</span></div>
<div class="pb" style="left:121.90px"><span>3</span></div>
<div class="pb" style="left:151.00px"><span>4</span></div>
<div class="pb" style="left:180.10px"><svg width="13" height="14" viewBox="0 0 13 14" style="position:absolute;left:8px;top:8.500px"><path d="M4 3.500V10.500L9.300 7Z" fill="#222"/></svg></div>
<div class="pb l" style="left:209.20px"><svg width="13" height="14" viewBox="0 0 13 14" style="position:absolute;left:8px;top:8.500px"><path d="M10.500 3.500H9.200V10.500H10.500ZM3.500 3.500V10.500L8.800 7Z" fill="#222"/></svg></div>
<div class="pinfo">1 - 50 of 178 items</div>
</div>
</div>
<div id="gridb"></div>
</div>
<div id="side">
<div class="shead" style="top:0"><svg width="8.40" height="4.80" viewBox="0 0 128.0 72.0" preserveAspectRatio="none" style="position:absolute;left:15.00px;top:23.50px;" ><path fill="#fff" d="M125.6 13.6 69.6 69.6Q67.2 72 64 72Q60.8 72 58.4 69.6L2.4 13.6Q0 11.2 0 8Q0 4.8 2.4 2.4Q4.8 0 8 0H120Q123.2 0 125.6 2.4Q128 4.8 128 8Q128 11.2 125.6 13.6Z"/></svg><div class="stitle">DATE</div><div class="xbtn" style="left:286.0px;top:18.5px;width:12.3px;height:16.0px"><svg width="8" height="8" viewBox="0 0 8 8" style="position:absolute;left:2.2px;top:3.4px"><path d="M0.900 0.900L7.100 7.100M7.100 0.900L0.900 7.100" stroke="#222b30" stroke-width="1.900" fill="none"/></svg></div></div>
<div class="panel" style="top:60.5px;height:298.5px">
<div class="phead" style="top:0.0px"><svg width="8.20" height="4.80" viewBox="0 0 128.0 72.0" preserveAspectRatio="none" style="position:absolute;left:15.00px;top:12.20px;" ><path fill="#fff" d="M125.6 13.6 69.6 69.6Q67.2 72 64 72Q60.8 72 58.4 69.6L2.4 13.6Q0 11.2 0 8Q0 4.8 2.4 2.4Q4.8 0 8 0H120Q123.2 0 125.6 2.4Q128 4.8 128 8Q128 11.2 125.6 13.6Z"/></svg><div class="ptitle">Data Apertura Ordine</div><div class="mbadge" style="left:158.8px">M</div><div class="xbtn" style="left:265.8px;top:6.9px;width:12.3px;height:16.2px"><svg width="8" height="8" viewBox="0 0 8 8" style="position:absolute;left:2.2px;top:3.5px"><path d="M0.900 0.900L7.100 7.100M7.100 0.900L0.900 7.100" stroke="#222b30" stroke-width="1.900" fill="none"/></svg></div></div>
<div class="ptool" style="top:29.7px"><svg width="19.70" height="16.50" viewBox="0 0 512 434" preserveAspectRatio="none" style="position:absolute;left:106.70px;top:7.60px;"><path fill="#6f7c82" d="M497.900 227.900c18.700-18.700 18.700-49.100 0-67.900l-160-160c-18.700-18.700-49.100-18.700-67.900 0l-256 256c-18.700 18.700-18.700 49.100 0 67.900l96 96A48 48 0 0 0 144 434h356c6.600 0 12-5.400 12-12v-40c0-6.600-5.400-12-12-12H355.900l142-142.100zm-302.600-62.600l137.400 137.400L265.400 370H150.600l-80-80 124.700-124.700z"/></svg><div class="vsep" style="left:139.4px"></div><svg width="18.00" height="18.00" viewBox="0 0 192.0 192.0" preserveAspectRatio="none" style="position:absolute;left:150.00px;top:6.80px;transform:scaleX(-1)" ><path fill="#fff" d="M96 164V28Q77.5 28 61.9 37.1Q46.2 46.2 37.1 61.9Q28 77.5 28 96Q28 114.5 37.1 130.1Q46.2 145.8 61.9 154.9Q77.5 164 96 164ZM179.1 47.8Q192 69.9 192 96Q192 122.1 179.1 144.2Q166.2 166.2 144.2 179.1Q122.1 192 96 192Q69.9 192 47.8 179.1Q25.8 166.2 12.9 144.2Q0 122.1 0 96Q0 69.9 12.9 47.8Q25.8 25.8 47.8 12.9Q69.9 0 96 0Q122.1 0 144.2 12.9Q166.2 25.8 179.1 47.8Z"/></svg><div class="vsep" style="left:179.4px"></div></div>
<div class="bar" style="left:7.0px;top:73.8px;width:7.0px;height:190.8px"></div><div class="bar" style="left:100.9px;top:185.8px;width:9.5px;height:78.8px"></div><div class="bar" style="left:122.0px;top:263.4px;width:10.3px;height:1.2px;background:#6f6632"></div><div class="bar" style="left:153.7px;top:263.4px;width:10.7px;height:1.2px;background:#6f6632"></div><div class="bar" style="left:208.2px;top:255.6px;width:79.6px;height:9.0px"></div>
<div class="hline" style="left:5px"></div><div class="hline" style="left:288.4px"></div>
<div class="handle" style="left:2.9px"></div><div class="handle" style="left:285.7px"></div>
<div class="dinp" style="left:0.0px;top:269.0px;width:146.0px"><div class="dtxt">22/12/2021 11:59</div><div class="ddiv"></div><svg width="12" height="14" viewBox="0 0 12 14" style="position:absolute;right:32px;top:8px"><path fill="#222" fill-rule="evenodd" d="M0 1h12v13H0zM1 2.300v10.700h10V2.300zM2 4h2v2h-2zM5 4h2v2h-2zM8 4h2v2h-2zM2 7h2v2h-2zM5 7h2v2h-2zM8 7h2v2h-2zM2 10h2v2h-2zM5 10h2v2h-2zM8 10h2v2h-2z"/><rect x="0.900" y="0.200" width="2.400" height="1.900" rx="0.900" fill="#fff" stroke="#222" stroke-width="0.700"/><rect x="8.700" y="0.200" width="2.400" height="1.900" rx="0.900" fill="#fff" stroke="#222" stroke-width="0.700"/></svg><svg width="14" height="14" viewBox="0 0 14 14" style="position:absolute;right:11px;top:8px"><circle cx="7" cy="7" r="6.450" fill="none" stroke="#222" stroke-width="1.100"/><path d="M6 4h1v3h3v1H6z" fill="#222"/></svg></div>
<div class="dinp" style="left:148.0px;top:269.0px;width:145.0px"><div class="dtxt">11/03/2022 18:14</div><div class="ddiv"></div><svg width="12" height="14" viewBox="0 0 12 14" style="position:absolute;right:32px;top:8px"><path fill="#222" fill-rule="evenodd" d="M0 1h12v13H0zM1 2.300v10.700h10V2.300zM2 4h2v2h-2zM5 4h2v2h-2zM8 4h2v2h-2zM2 7h2v2h-2zM5 7h2v2h-2zM8 7h2v2h-2zM2 10h2v2h-2zM5 10h2v2h-2zM8 10h2v2h-2z"/><rect x="0.900" y="0.200" width="2.400" height="1.900" rx="0.900" fill="#fff" stroke="#222" stroke-width="0.700"/><rect x="8.700" y="0.200" width="2.400" height="1.900" rx="0.900" fill="#fff" stroke="#222" stroke-width="0.700"/></svg><svg width="14" height="14" viewBox="0 0 14 14" style="position:absolute;right:11px;top:8px"><circle cx="7" cy="7" r="6.450" fill="none" stroke="#222" stroke-width="1.100"/><path d="M6 4h1v3h3v1H6z" fill="#222"/></svg></div>
</div>
<div class="panel" style="top:369.3px;height:239px">
<div class="phead" style="top:0.0px"><svg width="8.20" height="4.80" viewBox="0 0 128.0 72.0" preserveAspectRatio="none" style="position:absolute;left:15.00px;top:12.20px;" ><path fill="#fff" d="M125.6 13.6 69.6 69.6Q67.2 72 64 72Q60.8 72 58.4 69.6L2.4 13.6Q0 11.2 0 8Q0 4.8 2.4 2.4Q4.8 0 8 0H120Q123.2 0 125.6 2.4Q128 4.8 128 8Q128 11.2 125.6 13.6Z"/></svg><div class="ptitle">Data Massima Consegna Ordine</div><div class="mbadge" style="left:224.0px">M</div><div class="xbtn" style="left:265.8px;top:6.9px;width:12.3px;height:16.2px"><svg width="8" height="8" viewBox="0 0 8 8" style="position:absolute;left:2.2px;top:3.5px"><path d="M0.900 0.900L7.100 7.100M7.100 0.900L0.900 7.100" stroke="#222b30" stroke-width="1.900" fill="none"/></svg></div></div>
<div class="ptool" style="top:30.0px"><svg width="16.00" height="15.60" viewBox="0 0 203.7 224.0" preserveAspectRatio="none" style="position:absolute;left:12.90px;top:8.10px;overflow:visible"><path fill="#fff" d="M88.1 44Q88.1 42.5 86.8 41L47 1.1Q45.7 0 44.1 0Q42.6 0 41.2 1.1L1.2 41.1Q-0.7 43.1 0.3 45.5Q1.3 48 4.1 48H28.1V220Q28.1 221.8 29.2 222.9Q30.3 224 32.1 224H56.1Q57.8 224 59 222.9Q60.1 221.8 60.1 220V48H84.1Q85.8 48 87 46.9Q88.1 45.8 88.1 44Z"/><path fill="#fff" stroke="#fff" stroke-width="7" stroke-linejoin="round" fill-rule="evenodd" d="M145 51H167.1L158.1 23.8L156.6 17.9Q156.3 15.9 156.3 15.4H155.8L155.5 17.9Q155.5 18 155 20.1Q154.6 22.2 154.1 23.8ZM192.6 194.9V224H119.6V212.8L165.7 146.6Q167.2 144.4 168.3 143.2L169.7 142.1V141.8Q169.5 141.8 168.9 141.8Q168.3 141.9 168 141.9Q166.5 142.2 164.2 142.2H135.2V156.6H120.2V128H191.1V139.1L145 205.4Q144.2 206.4 142.3 208.6L141 210V210.2L142.7 210Q143.8 209.8 146.5 209.8H177.5V194.9ZM203.7 82.8V96H167.7V82.8H177.1L171.2 64.8H140.8L135 82.8H144.3V96H108.5V82.8H117.2L146 0H166.2L195 82.8Z"/></svg><svg width="19.40" height="16.30" viewBox="0 0 512 434" preserveAspectRatio="none" style="position:absolute;left:83.00px;top:7.40px;"><path fill="#6f7c82" d="M497.900 227.900c18.700-18.700 18.700-49.100 0-67.900l-160-160c-18.700-18.700-49.100-18.700-67.900 0l-256 256c-18.700 18.700-18.700 49.100 0 67.900l96 96A48 48 0 0 0 144 434h356c6.600 0 12-5.400 12-12v-40c0-6.600-5.400-12-12-12H355.900l142-142.100zm-302.600-62.600l137.400 137.400L265.400 370H150.600l-80-80 124.700-124.700z"/></svg><div class="vsep" style="left:115.2px"></div><svg width="18.40" height="18.80" viewBox="0 0 192.0 192.0" preserveAspectRatio="none" style="position:absolute;left:125.90px;top:6.50px;transform:scaleX(-1)" ><path fill="#fff" d="M96 164V28Q77.5 28 61.9 37.1Q46.2 46.2 37.1 61.9Q28 77.5 28 96Q28 114.5 37.1 130.1Q46.2 145.8 61.9 154.9Q77.5 164 96 164ZM179.1 47.8Q192 69.9 192 96Q192 122.1 179.1 144.2Q166.2 166.2 144.2 179.1Q122.1 192 96 192Q69.9 192 47.8 179.1Q25.8 166.2 12.9 144.2Q0 122.1 0 96Q0 69.9 12.9 47.8Q25.8 25.8 47.8 12.9Q69.9 0 96 0Q122.1 0 144.2 12.9Q166.2 25.8 179.1 47.8Z"/></svg><div class="vsep" style="left:154.2px"></div><svg width="16.200" height="16.200" viewBox="0 0 16 16" style="position:absolute;left:164.8px;top:7.6px"><rect x="0.900" y="0.900" width="14.200" height="14.200" rx="1.800" fill="none" stroke="#6f7c82" stroke-width="1.700"/><path d="M4 8.300l2.700 2.700 5.400-5.800" fill="none" stroke="#6f7c82" stroke-width="2"/></svg><svg width="18.70" height="18.00" viewBox="0 0 208.0 208.0" preserveAspectRatio="none" style="position:absolute;left:188.30px;top:6.50px;" ><path fill="#fff" d="M127.6 127.6Q144 111.1 144 88Q144 64.9 127.6 48.4Q111.1 32 88 32Q64.9 32 48.4 48.4Q32 64.9 32 88Q32 111.1 48.4 127.6Q64.9 144 88 144Q111.1 144 127.6 127.6ZM208 192Q208 198.5 203.2 203.2Q198.5 208 192 208Q185.2 208 180.8 203.2L137.9 160.5Q115.5 176 88 176Q70.1 176 53.8 169.1Q37.5 162.1 25.7 150.3Q13.9 138.5 6.9 122.2Q0 105.9 0 88Q0 70.1 6.9 53.8Q13.9 37.5 25.7 25.7Q37.5 13.9 53.8 6.9Q70.1 0 88 0Q105.9 0 122.2 6.9Q138.5 13.9 150.3 25.7Q162.1 37.5 169.1 53.8Q176 70.1 176 88Q176 115.5 160.5 137.9L203.4 180.8Q208 185.4 208 192Z"/></svg><svg width="14.60" height="15.60" viewBox="0 0 181.8 224.0" preserveAspectRatio="none" style="position:absolute;left:264.80px;top:8.10px;overflow:visible"><path fill="#fff" d="M88.1 44Q88.1 42.5 86.8 41L47 1.1Q45.7 0 44.1 0Q42.6 0 41.2 1.1L1.2 41.1Q-0.7 43.1 0.3 45.5Q1.3 48 4.1 48H28.1V220Q28.1 221.8 29.2 222.9Q30.3 224 32.1 224H56.1Q57.8 224 59 222.9Q60.1 221.8 60.1 220V48H84.1Q85.8 48 87 46.9Q88.1 45.8 88.1 44Z"/><path fill="#fff" stroke="#fff" stroke-width="7" stroke-linejoin="round" fill-rule="evenodd" d="M164.3 164.1Q164.3 156.2 158.8 149.6Q153.3 143 146 143Q139.5 143 135.6 147.6Q131.7 152.2 131.7 159.4Q131.7 166.5 136.3 171.2Q140.8 176 149.3 176Q155.6 176 160 172.6Q164.3 169.2 164.3 164.1ZM181.8 171.4Q181.8 179.1 180.2 186.6Q178.6 194 175.1 200.8Q171.6 207.6 166.6 212.8Q161.6 217.9 154.3 220.9Q147 224 138.3 224Q130.6 224 124.8 222Q121.8 221 119.6 220.1L124.5 206Q126.3 206.9 128.3 207.4Q133 209 137.7 209Q148.2 209 154.5 201.7Q160.8 194.4 162.8 183.5H162.6Q160 186.4 154.9 188.1Q149.8 189.9 144.3 189.9Q131.1 189.9 122.7 180.9Q114.3 172 114.3 159.4Q114.3 146.2 123.3 137.1Q132.3 128 146 128Q161.3 128 171.6 139.8Q181.8 151.6 181.8 171.4ZM178.1 81.8V96H119.5V81.8H140.3V27.8Q140.3 26.9 140.4 25.4Q140.5 23.9 140.5 23.2V21.2H140.2L139.3 22.8Q138.3 24.4 136.1 26.6L128.3 33.9L118.1 23.1L142.1 0H157.5V81.8Z"/></svg></div>
<div class="pitem" style="top:64.0px"><div class="pcb"></div><div class="plab">01/01/2022</div><div class="pcnt">11</div></div><div class="pitem odd" style="top:99.0px"><div class="pcb"></div><div class="plab">07/01/2022</div><div class="pcnt">3</div></div><div class="pitem" style="top:133.9px"><div class="pcb"></div><div class="plab">13/03/2022</div><div class="pcnt">1</div></div><div class="pitem odd" style="top:168.9px"><div class="pcb"></div><div class="plab">23/03/2022</div><div class="pcnt">1</div></div><div class="pitem last" style="top:203.8px"><div class="pcb"></div><div class="plab">28/12/2021</div><div class="pcnt">3</div></div>
</div>
<div class="shead" style="top:629.9px;height:49.6px"><svg width="8.40" height="4.80" viewBox="0 0 128.0 72.0" preserveAspectRatio="none" style="position:absolute;left:15.00px;top:23.50px;" ><path fill="#fff" d="M125.6 13.6 69.6 69.6Q67.2 72 64 72Q60.8 72 58.4 69.6L2.4 13.6Q0 11.2 0 8Q0 4.8 2.4 2.4Q4.8 0 8 0H120Q123.2 0 125.6 2.4Q128 4.8 128 8Q128 11.2 125.6 13.6Z"/></svg><div class="stitle">GEO</div><div class="xbtn" style="left:285.8px;top:17.6px;width:12.4px;height:15.8px"><svg width="8" height="8" viewBox="0 0 8 8" style="position:absolute;left:2.2px;top:3.3px"><path d="M0.900 0.900L7.100 7.100M7.100 0.900L0.900 7.100" stroke="#222b30" stroke-width="1.900" fill="none"/></svg></div></div>
<div class="panel" style="top:689.7px;height:300px">
<div class="phead" style="top:0.0px"><svg width="8.20" height="4.80" viewBox="0 0 128.0 72.0" preserveAspectRatio="none" style="position:absolute;left:15.00px;top:12.20px;" ><path fill="#fff" d="M125.6 13.6 69.6 69.6Q67.2 72 64 72Q60.8 72 58.4 69.6L2.4 13.6Q0 11.2 0 8Q0 4.8 2.4 2.4Q4.8 0 8 0H120Q123.2 0 125.6 2.4Q128 4.8 128 8Q128 11.2 125.6 13.6Z"/></svg><div class="ptitle">Città Spedizione</div><div class="mbadge" style="left:129.6px">M</div><div class="xbtn" style="left:265.8px;top:6.9px;width:12.3px;height:16.2px"><svg width="8" height="8" viewBox="0 0 8 8" style="position:absolute;left:2.2px;top:3.5px"><path d="M0.900 0.900L7.100 7.100M7.100 0.900L0.900 7.100" stroke="#222b30" stroke-width="1.900" fill="none"/></svg></div></div>
<div class="ptool" style="top:30.0px"><svg width="16.00" height="15.60" viewBox="0 0 203.7 224.0" preserveAspectRatio="none" style="position:absolute;left:12.90px;top:8.10px;overflow:visible"><path fill="#fff" d="M88.1 44Q88.1 42.5 86.8 41L47 1.1Q45.7 0 44.1 0Q42.6 0 41.2 1.1L1.2 41.1Q-0.7 43.1 0.3 45.5Q1.3 48 4.1 48H28.1V220Q28.1 221.8 29.2 222.9Q30.3 224 32.1 224H56.1Q57.8 224 59 222.9Q60.1 221.8 60.1 220V48H84.1Q85.8 48 87 46.9Q88.1 45.8 88.1 44Z"/><path fill="#fff" stroke="#fff" stroke-width="7" stroke-linejoin="round" fill-rule="evenodd" d="M145 51H167.1L158.1 23.8L156.6 17.9Q156.3 15.9 156.3 15.4H155.8L155.5 17.9Q155.5 18 155 20.1Q154.6 22.2 154.1 23.8ZM192.6 194.9V224H119.6V212.8L165.7 146.6Q167.2 144.4 168.3 143.2L169.7 142.1V141.8Q169.5 141.8 168.9 141.8Q168.3 141.9 168 141.9Q166.5 142.2 164.2 142.2H135.2V156.6H120.2V128H191.1V139.1L145 205.4Q144.2 206.4 142.3 208.6L141 210V210.2L142.7 210Q143.8 209.8 146.5 209.8H177.5V194.9ZM203.7 82.8V96H167.7V82.8H177.1L171.2 64.8H140.8L135 82.8H144.3V96H108.5V82.8H117.2L146 0H166.2L195 82.8Z"/></svg><svg width="19.40" height="16.30" viewBox="0 0 512 434" preserveAspectRatio="none" style="position:absolute;left:83.00px;top:7.40px;"><path fill="#6f7c82" d="M497.900 227.900c18.700-18.700 18.700-49.100 0-67.900l-160-160c-18.700-18.700-49.100-18.700-67.900 0l-256 256c-18.700 18.700-18.700 49.100 0 67.900l96 96A48 48 0 0 0 144 434h356c6.600 0 12-5.400 12-12v-40c0-6.600-5.400-12-12-12H355.900l142-142.100zm-302.600-62.600l137.400 137.400L265.400 370H150.600l-80-80 124.700-124.700z"/></svg><div class="vsep" style="left:115.2px"></div><svg width="18.40" height="18.80" viewBox="0 0 192.0 192.0" preserveAspectRatio="none" style="position:absolute;left:125.90px;top:6.50px;transform:scaleX(-1)" ><path fill="#fff" d="M96 164V28Q77.5 28 61.9 37.1Q46.2 46.2 37.1 61.9Q28 77.5 28 96Q28 114.5 37.1 130.1Q46.2 145.8 61.9 154.9Q77.5 164 96 164ZM179.1 47.8Q192 69.9 192 96Q192 122.1 179.1 144.2Q166.2 166.2 144.2 179.1Q122.1 192 96 192Q69.9 192 47.8 179.1Q25.8 166.2 12.9 144.2Q0 122.1 0 96Q0 69.9 12.9 47.8Q25.8 25.8 47.8 12.9Q69.9 0 96 0Q122.1 0 144.2 12.9Q166.2 25.8 179.1 47.8Z"/></svg><div class="vsep" style="left:154.2px"></div><svg width="16.200" height="16.200" viewBox="0 0 16 16" style="position:absolute;left:164.8px;top:7.6px"><rect x="0.900" y="0.900" width="14.200" height="14.200" rx="1.800" fill="none" stroke="#6f7c82" stroke-width="1.700"/><path d="M4 8.300l2.700 2.700 5.400-5.800" fill="none" stroke="#6f7c82" stroke-width="2"/></svg><svg width="18.70" height="18.00" viewBox="0 0 208.0 208.0" preserveAspectRatio="none" style="position:absolute;left:188.30px;top:6.50px;" ><path fill="#fff" d="M127.6 127.6Q144 111.1 144 88Q144 64.9 127.6 48.4Q111.1 32 88 32Q64.9 32 48.4 48.4Q32 64.9 32 88Q32 111.1 48.4 127.6Q64.9 144 88 144Q111.1 144 127.6 127.6ZM208 192Q208 198.5 203.2 203.2Q198.5 208 192 208Q185.2 208 180.8 203.2L137.9 160.5Q115.5 176 88 176Q70.1 176 53.8 169.1Q37.5 162.1 25.7 150.3Q13.9 138.5 6.9 122.2Q0 105.9 0 88Q0 70.1 6.9 53.8Q13.9 37.5 25.7 25.7Q37.5 13.9 53.8 6.9Q70.1 0 88 0Q105.9 0 122.2 6.9Q138.5 13.9 150.3 25.7Q162.1 37.5 169.1 53.8Q176 70.1 176 88Q176 115.5 160.5 137.9L203.4 180.8Q208 185.4 208 192Z"/></svg><svg width="14.60" height="15.60" viewBox="0 0 181.8 224.0" preserveAspectRatio="none" style="position:absolute;left:264.80px;top:8.10px;overflow:visible"><path fill="#fff" d="M88.1 44Q88.1 42.5 86.8 41L47 1.1Q45.7 0 44.1 0Q42.6 0 41.2 1.1L1.2 41.1Q-0.7 43.1 0.3 45.5Q1.3 48 4.1 48H28.1V220Q28.1 221.8 29.2 222.9Q30.3 224 32.1 224H56.1Q57.8 224 59 222.9Q60.1 221.8 60.1 220V48H84.1Q85.8 48 87 46.9Q88.1 45.8 88.1 44Z"/><path fill="#fff" stroke="#fff" stroke-width="7" stroke-linejoin="round" fill-rule="evenodd" d="M164.3 164.1Q164.3 156.2 158.8 149.6Q153.3 143 146 143Q139.5 143 135.6 147.6Q131.7 152.2 131.7 159.4Q131.7 166.5 136.3 171.2Q140.8 176 149.3 176Q155.6 176 160 172.6Q164.3 169.2 164.3 164.1ZM181.8 171.4Q181.8 179.1 180.2 186.6Q178.6 194 175.1 200.8Q171.6 207.6 166.6 212.8Q161.6 217.9 154.3 220.9Q147 224 138.3 224Q130.6 224 124.8 222Q121.8 221 119.6 220.1L124.5 206Q126.3 206.9 128.3 207.4Q133 209 137.7 209Q148.2 209 154.5 201.7Q160.8 194.4 162.8 183.5H162.6Q160 186.4 154.9 188.1Q149.8 189.9 144.3 189.9Q131.1 189.9 122.7 180.9Q114.3 172 114.3 159.4Q114.3 146.2 123.3 137.1Q132.3 128 146 128Q161.3 128 171.6 139.8Q181.8 151.6 181.8 171.4ZM178.1 81.8V96H119.5V81.8H140.3V27.8Q140.3 26.9 140.4 25.4Q140.5 23.9 140.5 23.2V21.2H140.2L139.3 22.8Q138.3 24.4 136.1 26.6L128.3 33.9L118.1 23.1L142.1 0H157.5V81.8Z"/></svg></div>
<div class="pitem" style="top:63.9px"><div class="pcb"></div><div class="plab">Alba</div><div class="pcnt">11</div></div><div class="pitem odd" style="top:98.8px"><div class="pcb"></div><div class="plab">Brusaporto</div><div class="pcnt">12</div></div><div class="pitem" style="top:133.8px"><div class="pcb"></div><div class="plab">Canneto sull'Oglio</div><div class="pcnt">15</div></div><div class="pitem odd" style="top:168.8px"><div class="pcb"></div><div class="plab">Firenze</div><div class="pcnt">43</div></div><div class="pitem last" style="top:203.7px"><div class="pcb"></div><div class="plab">Modena</div><div class="pcnt">97</div></div>
</div>
</div>
<div id="sscroll"><div class="sthumb"></div></div>
<div id="top">
<svg width="16.300" height="14" viewBox="0 0 16.300 14" style="position:absolute;left:14.700px;top:17.200px"><path fill="#fff" d="M0 0h16.300v2.300H0zM0 5.600h16.300v2.300H0zM0 11.200h16.300v2.500H0z"/></svg>
<div class="tbadge">3</div>
<div class="tsep" style="left:53.0px;height:49.5px;background:rgba(255,255,255,0.18)"></div>
<svg width="40" height="23" viewBox="0 0 40 23" style="position:absolute;left:84px;top:15px"><defs><linearGradient id="tg" x1="0" y1="0" x2="0" y2="1"><stop offset="0" stop-color="rgb(20,38,62)" stop-opacity="0.85"/><stop offset="1" stop-color="#fff" stop-opacity="0.28"/></linearGradient></defs><rect x="0.500" y="0.500" width="39" height="22" rx="11" fill="none" stroke="url(#tg)"/></svg><div class="knob"></div>
<svg width="15.30" height="14.90" viewBox="0 0 192.0 192.0" preserveAspectRatio="none" style="position:absolute;left:138.60px;top:17.60px;" ><path fill="#fff" d="M188.9 116Q188.9 116.6 188.8 116.9Q180.8 150.4 155.2 171.2Q129.8 192 95.5 192Q77.2 192 60.2 185.1Q43.1 178.2 29.8 165.5L13.6 181.6Q11.2 184 8 184Q4.8 184 2.4 181.6Q0 179.2 0 176V120Q0 116.8 2.4 114.4Q4.8 112 8 112H64Q67.2 112 69.6 114.4Q72 116.8 72 120Q72 123.2 69.6 125.6L52.5 142.8Q61.4 151 72.6 155.5Q83.9 160 96 160Q112.8 160 127.2 151.9Q141.8 143.8 150.5 129.5Q151.9 127.4 157.1 114.9Q158.1 112 160.9 112H184.9Q186.5 112 187.7 113.2Q188.9 114.4 188.9 116ZM192 16V72Q192 75.2 189.6 77.6Q187.2 80 184 80H128Q124.8 80 122.4 77.6Q120 75.2 120 72Q120 68.8 122.4 66.4L139.6 49.1Q121.1 32 96 32Q79.2 32 64.8 40.1Q50.2 48.2 41.5 62.5Q40.1 64.6 34.9 77.1Q33.9 80 31.1 80H6.2Q4.6 80 3.4 78.8Q2.2 77.6 2.2 76V75.1Q10.4 41.6 36 20.8Q61.6 0 96 0Q114.2 0 131.5 6.9Q148.8 13.9 162.1 26.5L178.4 10.4Q180.8 8 184 8Q187.2 8 189.6 10.4Q192 12.8 192 16Z"/></svg>
<svg width="21.30" height="18.40" viewBox="0 0 512 448" preserveAspectRatio="none" style="position:absolute;left:249.00px;top:16.40px"><path fill="#fff" fill-rule="evenodd" d="M464 0H48C21.5 0 0 21.5 0 48v352c0 26.500 21.500 48 48 48h416c26.500 0 48-21.500 48-48V48c0-26.500-21.500-48-48-48zM224 384H64v-96h160v96zm0-160H64v-96h160v96zm224 160H288v-96h160v96zm0-160H288v-96h160v96z"/></svg>
<div class="tlabel">Table</div>
<div class="tsep" style="left:443.0px;height:49.5px;background:rgba(255,255,255,0.18)"></div>
<svg width="19.20" height="18.50" viewBox="0 0 448 448" preserveAspectRatio="none" style="position:absolute;left:458.50px;top:15.90px"><path fill="#8aa0b8" fill-rule="evenodd" d="M433.9 97.9l-83.900-83.900A48 48 0 0 0 316.100 0H48C21.500 0 0 21.500 0 48v352c0 26.500 21.500 48 48 48h352c26.500 0 48-21.500 48-48V131.900a48 48 0 0 0-14.100-33.900zM224 384c-35.300 0-64-28.700-64-64 0-35.300 28.700-64 64-64s64 28.700 64 64c0 35.300-28.700 64-64 64zm96-304.500V180c0 6.600-5.400 12-12 12H76c-6.600 0-12-5.400-12-12V76c0-6.600 5.400-12 12-12h228.500c3.200 0 6.200 1.300 8.500 3.500l3.500 3.500A12 12 0 0 1 320 79.500z"/></svg>
<div class="tsep" style="left:492.0px;height:52.5px;background:rgba(255,255,255,0.08)"></div>
<svg width="21.80" height="16.20" viewBox="0 0 504 384" preserveAspectRatio="none" style="position:absolute;left:508.00px;top:16.90px"><path fill="#8aa0b8" d="M497 209L329 377c-15 15-41 4.500-41-17v-96H152c-13.300 0-24-10.700-24-24v-96c0-13.300 10.700-24 24-24h136V24c0-21.400 25.900-32 41-17l168 168c9.300 9.400 9.300 24.600 0 34zM192 372v-40c0-6.600-5.400-12-12-12H96c-17.700 0-32-14.300-32-32V96c0-17.700 14.300-32 32-32h84c6.600 0 12-5.400 12-12V12c0-6.600-5.400-12-12-12H96C43 0 0 43 0 96v192c0 53 43 96 96 96h84c6.600 0 12-5.400 12-12z"/></svg>
<div class="tsep" style="left:544.0px;height:52.5px;background:rgba(255,255,255,0.08)"></div>
<div class="tnum" style="left:560.3px">0</div>
<svg width="12.60" height="12.20" viewBox="0 0 176.0 176.0" preserveAspectRatio="none" style="position:absolute;left:580.00px;top:15.60px;" ><path fill="#4f9a78" d="M176 76V100Q176 105 172.5 108.5Q169 112 164 112H112V164Q112 169 108.5 172.5Q105 176 100 176H76Q71 176 67.5 172.5Q64 169 64 164V112H12Q7 112 3.5 108.5Q0 105 0 100V76Q0 71 3.5 67.5Q7 64 12 64H64V12Q64 7 67.5 3.5Q71 0 76 0H100Q105 0 108.5 3.5Q112 7 112 12V64H164Q169 64 172.5 67.5Q176 71 176 76Z"/></svg>
<div class="tnum" style="left:599.5px">0</div>
<svg width="14.60" height="14.20" viewBox="0 0 189.4 189.4" preserveAspectRatio="none" style="position:absolute;left:619.00px;top:14.80px;" ><path fill="#9f8a5e" d="M45.4 173.4 56.8 162 27.4 132.6 16 144V157.4H32V173.4ZM110.8 57.4Q110.8 54.6 108 54.6Q106.8 54.6 105.9 55.5L38.1 123.2Q37.2 124.1 37.2 125.4Q37.2 128.1 40 128.1Q41.2 128.1 42.1 127.2L109.9 59.5Q110.8 58.6 110.8 57.4ZM104 33.4 156 85.4 52 189.4H0V137.4ZM189.4 45.4Q189.4 52 184.8 56.6L164 77.4L112 25.4L132.8 4.8Q137.2 0 144 0Q150.6 0 155.4 4.8L184.8 34Q189.4 38.9 189.4 45.4Z"/></svg>
<div class="tnum" style="left:640.3px">0</div>
<svg width="12.30" height="14.00" viewBox="0 0 448 512" preserveAspectRatio="none" style="position:absolute;left:660.00px;top:15.00px;"><path fill="#7b4f6b" d="M432 32H312l-9.400-18.700A24 24 0 0 0 281.100 0H166.800a23.700 23.700 0 0 0-21.400 13.300L136 32H16A16 16 0 0 0 0 48v32a16 16 0 0 0 16 16h416a16 16 0 0 0 16-16V48a16 16 0 0 0-16-16zM53.200 467a48 48 0 0 0 47.900 45h245.800a48 48 0 0 0 47.900-45L416 128H32z"/></svg>
<div class="tsep" style="left:694.0px;height:52.5px;background:rgba(255,255,255,0.08)"></div>
<svg width="22.00" height="18.60" viewBox="0 0 512 448" preserveAspectRatio="none" style="position:absolute;left:709.80px;top:15.60px;"><path fill="#8aa0b8" d="M8.300 157.800L184.300 5.900C199.700-7.500 224 3.300 224 24v80.100c160.600 1.800 288 34 288 186.300 0 61.400-39.600 122.300-83.300 154.100-13.700 9.900-33.100-2.500-28.100-18.600 45.300-145-21.500-183.500-176.600-185.700V328c0 20.700-24.300 31.500-39.700 18.200l-176-152c-11.100-9.600-11.100-26.800 0-36.400z"/></svg>
<div class="tsep" style="left:746.0px;height:52.5px;background:rgba(255,255,255,0.08)"></div>
<svg width="22.40" height="22.00" viewBox="0 0 208.0 200.0" preserveAspectRatio="none" style="position:absolute;left:761.60px;top:13.90px;" ><path fill="#fff" d="M157.6 181.6Q160 179.2 160 176Q160 172.8 157.6 170.4Q155.2 168 152 168Q148.8 168 146.4 170.4Q144 172.8 144 176Q144 179.2 146.4 181.6Q148.8 184 152 184Q155.2 184 157.6 181.6ZM189.6 181.6Q192 179.2 192 176Q192 172.8 189.6 170.4Q187.2 168 184 168Q180.8 168 178.4 170.4Q176 172.8 176 176Q176 179.2 178.4 181.6Q180.8 184 184 184Q187.2 184 189.6 181.6ZM208 148V188Q208 193 204.5 196.5Q201 200 196 200H12Q7 200 3.5 196.5Q0 193 0 188V148Q0 143 3.5 139.5Q7 136 12 136H65.4Q68 143 74.2 147.5Q80.4 152 88 152H120Q127.6 152 133.8 147.5Q140 143 142.6 136H196Q201 136 204.5 139.5Q208 143 208 148ZM167.4 67Q165.2 72 160 72H128V128Q128 131.2 125.6 133.6Q123.2 136 120 136H88Q84.8 136 82.4 133.6Q80 131.2 80 128V72H48Q42.8 72 40.6 67Q38.5 62.1 42.4 58.4L98.4 2.4Q100.6 0 104 0Q107.4 0 109.6 2.4L165.6 58.4Q169.5 62.1 167.4 67Z"/></svg>
<div class="tsep" style="left:798.0px;height:52.5px;background:rgba(255,255,255,0.08)"></div>
<svg width="27.00" height="22.00" viewBox="0 0 224.0 192.0" preserveAspectRatio="none" style="position:absolute;left:1637.00px;top:13.90px;" ><path fill="#fff" d="M224 140V180Q224 185 220.5 188.5Q217 192 212 192H172Q167 192 163.5 188.5Q160 185 160 180V140Q160 135 163.5 131.5Q167 128 172 128H184V104H120V128H132Q137 128 140.5 131.5Q144 135 144 140V180Q144 185 140.5 188.5Q137 192 132 192H92Q87 192 83.5 188.5Q80 185 80 180V140Q80 135 83.5 131.5Q87 128 92 128H104V104H40V128H52Q57 128 60.5 131.5Q64 135 64 140V180Q64 185 60.5 188.5Q57 192 52 192H12Q7 192 3.5 188.5Q0 185 0 180V140Q0 135 3.5 131.5Q7 128 12 128H24V104Q24 97.5 28.8 92.8Q33.5 88 40 88H104V64H92Q87 64 83.5 60.5Q80 57 80 52V12Q80 7 83.5 3.5Q87 0 92 0H132Q137 0 140.5 3.5Q144 7 144 12V52Q144 57 140.5 60.5Q137 64 132 64H120V88H184Q190.5 88 195.2 92.8Q200 97.5 200 104V128H212Q217 128 220.5 131.5Q224 135 224 140Z"/></svg>
<div class="tsep" style="left:1679.0px;height:52.5px;background:rgba(255,255,255,0.08)"></div>
<svg width="22.00" height="19.20" viewBox="0 0 512 448" preserveAspectRatio="none" style="position:absolute;left:1694.00px;top:15.70px"><path fill="#fff" fill-rule="evenodd" d="M464 0H48C21.5 0 0 21.5 0 48v352c0 26.500 21.500 48 48 48h416c26.500 0 48-21.500 48-48V48c0-26.500-21.500-48-48-48zM224 384H64v-96h160v96zm0-160H64v-96h160v96zm224 160H288v-96h160v96zm0-160H288v-96h160v96z"/></svg>
<div class="tsep" style="left:1731.0px;height:52.5px;background:rgba(255,255,255,0.08)"></div>
<svg width="14.70" height="21.50" viewBox="0 0 320 512" preserveAspectRatio="none" style="position:absolute;left:1745.70px;top:13.90px;"><path fill="#6e88a4" d="M296 160H180.600l42.600-129.800C227.200 15 215.700 0 200 0H56C44 0 33.800 8.900 32.200 20.800l-32 240C-1.700 275.200 9.500 288 24 288h118.700L96.600 482.500c-3.600 15.200 8 29.500 23.300 29.500 8.400 0 16.400-4.400 20.800-12l176-304c9.300-15.900-2.200-36-20.700-36z"/></svg>
<div class="tsep" style="left:1775.0px;height:52.5px;background:rgba(255,255,255,0.08)"></div>
<svg width="27.40" height="21.00" viewBox="0 0 240.0 220.1" preserveAspectRatio="none" style="position:absolute;left:1790.60px;top:14.80px;;overflow:visible" ><path fill="#fff" stroke="#fff" stroke-width="5" stroke-linejoin="round" d="M102.6 132.6Q112 123.2 112 110Q112 96.8 102.6 87.4Q93.2 78 80 78Q66.8 78 57.4 87.4Q48 96.8 48 110Q48 123.2 57.4 132.6Q66.8 142 80 142Q93.2 142 102.6 132.6ZM208 174Q208 167.5 203.2 162.8Q198.5 158 192 158Q185.5 158 180.8 162.8Q176 167.5 176 174Q176 180.6 180.7 185.3Q185.4 190 192 190Q198.6 190 203.3 185.3Q208 180.6 208 174ZM208 46Q208 39.5 203.2 34.8Q198.5 30 192 30Q185.5 30 180.8 34.8Q176 39.5 176 46Q176 52.6 180.7 57.3Q185.4 62 192 62Q198.6 62 203.3 57.3Q208 52.6 208 46ZM160 98.6V121.8Q160 123 159.1 124.2Q158.2 125.4 157.1 125.5L137.8 128.5Q136.4 132.9 133.8 138Q138 144 145 152.4Q145.9 153.8 145.9 154.9Q145.9 156.4 145 157.2Q142.1 161 134.7 168.4Q127.2 175.9 124.9 175.9Q123.5 175.9 122.2 175L107.9 163.8Q103.2 166.1 98.2 167.6Q96.9 181.1 95.4 187Q94.5 190 91.6 190H68.4Q67 190 65.9 189.1Q64.8 188.1 64.6 186.9L61.8 167.8Q57.5 166.5 52.4 163.9L37.6 175Q36.8 175.9 35.1 175.9Q33.8 175.9 32.5 174.9Q14.5 158.2 14.5 154.9Q14.5 153.8 15.4 152.5Q16.6 150.8 20.5 145.9Q24.4 141 26.4 138.2Q23.5 132.8 22 128L3 125Q1.8 124.9 0.9 123.8Q0 122.8 0 121.4V98.2Q0 97 0.9 95.8Q1.8 94.6 2.9 94.5L22.2 91.5Q23.6 87.1 26.2 82Q22 76 15 67.6Q14.1 66.2 14.1 65.1Q14.1 63.6 15 62.6Q17.8 58.9 25.2 51.5Q32.8 44.1 35.1 44.1Q36.5 44.1 37.8 45L52.1 56.2Q56.4 54 61.8 52.2Q63.1 38.8 64.6 33Q65.5 30 68.4 30H91.6Q93 30 94.1 30.9Q95.2 31.9 95.4 33.1L98.2 52.2Q102.5 53.5 107.6 56.1L122.4 45Q123.4 44.1 124.9 44.1Q126.2 44.1 127.5 45.1Q145.5 61.8 145.5 65.1Q145.5 66.1 144.6 67.5Q143.1 69.5 139.4 74.2Q135.6 79 133.8 81.8Q136.6 87.8 138 92L157 94.9Q158.2 95.1 159.1 96.2Q160 97.2 160 98.6ZM240 165.2V182.8Q240 184.8 221.4 186.6Q219.9 190 217.6 193.1Q224 207.2 224 210.4Q224 210.9 223.5 211.2Q208.2 220.1 208 220.1Q207 220.1 202.2 214.2Q197.5 208.4 195.8 205.8Q193.2 206 192 206Q190.8 206 188.2 205.8Q186.5 208.4 181.8 214.2Q177 220.1 176 220.1Q175.8 220.1 160.5 211.2Q160 210.9 160 210.4Q160 207.2 166.4 193.1Q164.1 190 162.6 186.6Q144 184.8 144 182.8V165.2Q144 163.2 162.6 161.4Q164.2 157.8 166.4 154.9Q160 140.8 160 137.6Q160 137.1 160.5 136.8Q161 136.5 164.9 134.2Q168.8 132 172.2 130Q175.8 128 176 128Q177 128 181.8 133.8Q186.5 139.6 188.2 142.2Q190.8 142 192 142Q193.2 142 195.8 142.2Q202.1 133.4 207.2 128.2L208 128Q208.5 128 223.5 136.8Q224 137.1 224 137.6Q224 140.8 217.6 154.9Q219.8 157.8 221.4 161.4Q240 163.2 240 165.2ZM240 37.2V54.8Q240 56.8 221.4 58.6Q219.9 62 217.6 65.1Q224 79.2 224 82.4Q224 82.9 223.5 83.2Q208.2 92.1 208 92.1Q207 92.1 202.2 86.2Q197.5 80.4 195.8 77.8Q193.2 78 192 78Q190.8 78 188.2 77.8Q186.5 80.4 181.8 86.2Q177 92.1 176 92.1Q175.8 92.1 160.5 83.2Q160 82.9 160 82.4Q160 79.2 166.4 65.1Q164.1 62 162.6 58.6Q144 56.8 144 54.8V37.2Q144 35.2 162.6 33.4Q164.2 29.8 166.4 26.9Q160 12.8 160 9.6Q160 9.1 160.5 8.8Q161 8.5 164.9 6.2Q168.8 4 172.2 2Q175.8 0 176 0Q177 0 181.8 5.8Q186.5 11.6 188.2 14.2Q190.8 14 192 14Q193.2 14 195.8 14.2Q202.1 5.4 207.2 0.2L208 0Q208.5 0 223.5 8.8Q224 9.1 224 9.6Q224 12.8 217.6 26.9Q219.8 29.8 221.4 33.4Q240 35.2 240 37.2Z"/></svg>
<svg width="9.00" height="5.50" viewBox="0 0 128.0 72.0" preserveAspectRatio="none" style="position:absolute;left:1831.00px;top:25.30px;" ><path fill="#fff" d="M125.6 13.6 69.6 69.6Q67.2 72 64 72Q60.8 72 58.4 69.6L2.4 13.6Q0 11.2 0 8Q0 4.8 2.4 2.4Q4.8 0 8 0H120Q123.2 0 125.6 2.4Q128 4.8 128 8Q128 11.2 125.6 13.6Z"/></svg>
<div class="bellbg"></div>
<svg width="19.40" height="22.00" viewBox="0 0 448 512" preserveAspectRatio="none" style="position:absolute;left:1870.20px;top:14.00px;"><path fill="#fff" d="M224 512c35.300 0 64-28.700 64-64H160c0 35.300 28.700 64 64 64zm215.400-149.700c-19.300-20.800-55.500-52-55.500-154.300 0-77.700-54.500-139.900-127.900-155.200V32c0-17.700-14.300-32-32-32s-32 14.300-32 32v20.800C118.600 68.100 64.100 130.300 64.100 208c0 102.300-36.200 133.500-55.500 154.300-6 6.400-8.700 14.200-8.600 21.700.1 16.400 13 32 32.100 32h383.800c19.100 0 32-15.600 32.100-32 .1-7.500-2.600-15.300-8.600-21.700z"/></svg>
</div>
</body></html>
